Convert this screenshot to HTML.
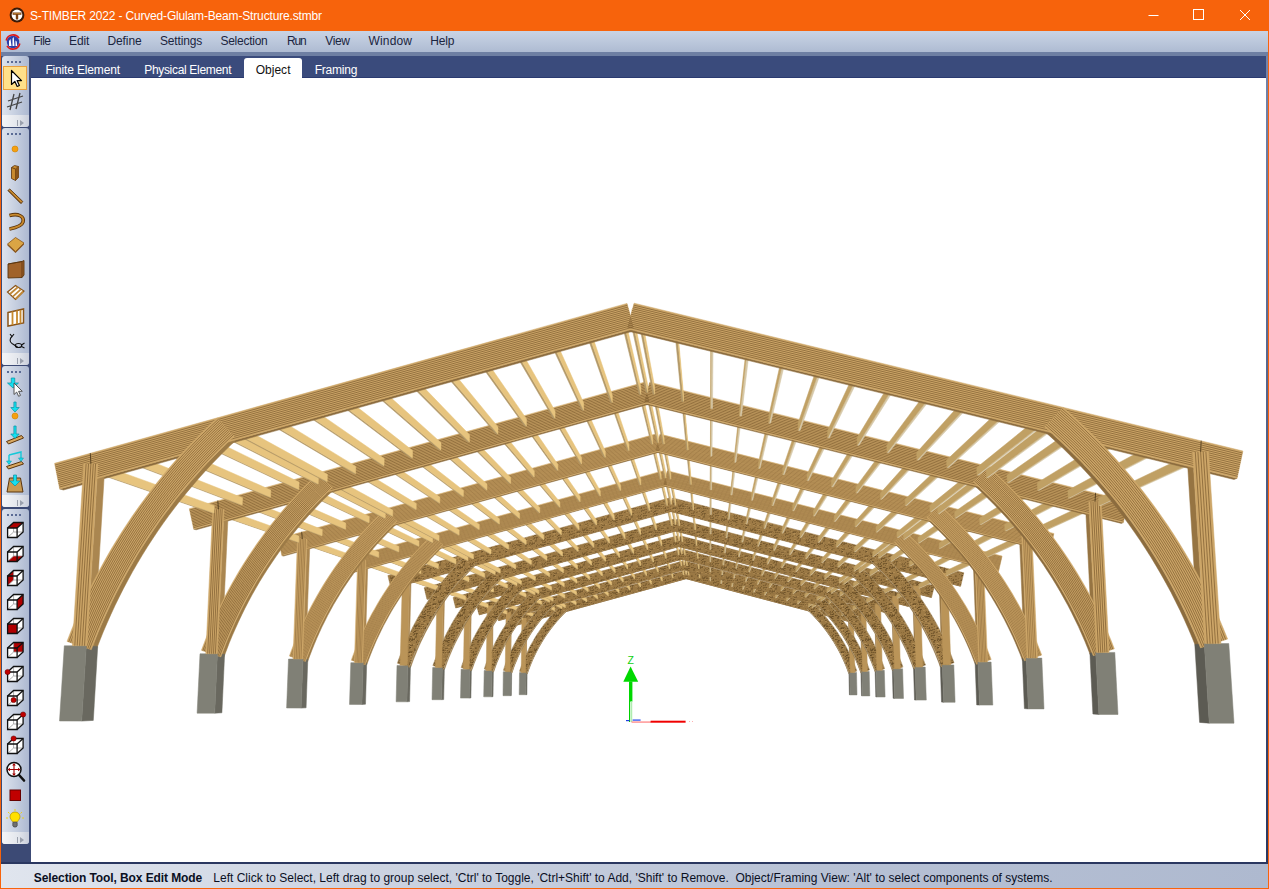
<!DOCTYPE html>
<html><head><meta charset="utf-8"><title>S-TIMBER 2022</title>
<style>
html,body{margin:0;padding:0;}
body{width:1269px;height:889px;overflow:hidden;background:#fff;font-family:"Liberation Sans","DejaVu Sans",sans-serif;position:relative;}
#scene{position:absolute;left:0;top:0;width:1269px;height:889px;}
</style></head><body>
<svg id="scene" width="1269" height="889" viewBox="0 0 1269 889" shape-rendering="geometricPrecision">
<defs><pattern id="spk" width="24" height="24" patternUnits="userSpaceOnUse"><rect x="10" y="4" width="2" height="1" fill="#3e2a0e" fill-opacity="0.38"/><rect x="17" y="3" width="1" height="1" fill="#3e2a0e" fill-opacity="0.67"/><rect x="6" y="1" width="1" height="1" fill="#2e1e08" fill-opacity="0.50"/><rect x="7" y="2" width="2" height="1" fill="#3e2a0e" fill-opacity="0.64"/><rect x="3" y="7" width="1" height="1" fill="#2e1e08" fill-opacity="0.37"/><rect x="7" y="1" width="1" height="1" fill="#5a4018" fill-opacity="0.50"/><rect x="17" y="3" width="1" height="1" fill="#4a3414" fill-opacity="0.39"/><rect x="18" y="20" width="1" height="1" fill="#5a4018" fill-opacity="0.38"/><rect x="22" y="2" width="1" height="1" fill="#4a3414" fill-opacity="0.52"/><rect x="17" y="13" width="1" height="1" fill="#2e1e08" fill-opacity="0.55"/><rect x="14" y="11" width="1" height="1" fill="#4a3414" fill-opacity="0.63"/><rect x="22" y="7" width="1" height="1" fill="#5a4018" fill-opacity="0.53"/><rect x="10" y="23" width="2" height="1" fill="#5a4018" fill-opacity="0.56"/><rect x="2" y="3" width="2" height="1" fill="#4a3414" fill-opacity="0.61"/><rect x="4" y="15" width="2" height="1" fill="#3e2a0e" fill-opacity="0.69"/><rect x="2" y="17" width="1" height="1" fill="#5a4018" fill-opacity="0.59"/><rect x="19" y="15" width="2" height="1" fill="#3e2a0e" fill-opacity="0.64"/><rect x="8" y="15" width="1" height="1" fill="#3e2a0e" fill-opacity="0.61"/><rect x="9" y="20" width="2" height="1" fill="#5a4018" fill-opacity="0.60"/><rect x="21" y="11" width="1" height="1" fill="#2e1e08" fill-opacity="0.47"/><rect x="19" y="3" width="2" height="1" fill="#3e2a0e" fill-opacity="0.43"/><rect x="9" y="4" width="1" height="1" fill="#2e1e08" fill-opacity="0.49"/><rect x="15" y="2" width="1" height="1" fill="#2e1e08" fill-opacity="0.49"/><rect x="8" y="4" width="2" height="1" fill="#5a4018" fill-opacity="0.60"/><rect x="11" y="21" width="2" height="1" fill="#4a3414" fill-opacity="0.40"/><rect x="5" y="4" width="1" height="1" fill="#4a3414" fill-opacity="0.35"/><rect x="18" y="5" width="1" height="1" fill="#5a4018" fill-opacity="0.35"/><rect x="13" y="17" width="1" height="1" fill="#5a4018" fill-opacity="0.68"/><rect x="22" y="16" width="1" height="1" fill="#2e1e08" fill-opacity="0.66"/><rect x="21" y="17" width="2" height="1" fill="#2e1e08" fill-opacity="0.49"/><rect x="3" y="15" width="2" height="1" fill="#3e2a0e" fill-opacity="0.42"/><rect x="6" y="14" width="1" height="1" fill="#3e2a0e" fill-opacity="0.47"/><rect x="1" y="3" width="1" height="1" fill="#4a3414" fill-opacity="0.54"/><rect x="11" y="19" width="1" height="1" fill="#3e2a0e" fill-opacity="0.66"/><rect x="19" y="12" width="1" height="1" fill="#5a4018" fill-opacity="0.68"/><rect x="19" y="11" width="2" height="1" fill="#3e2a0e" fill-opacity="0.39"/><rect x="15" y="14" width="2" height="1" fill="#2e1e08" fill-opacity="0.46"/><rect x="4" y="3" width="1" height="1" fill="#5a4018" fill-opacity="0.52"/><rect x="22" y="5" width="1" height="1" fill="#4a3414" fill-opacity="0.68"/><rect x="16" y="11" width="1" height="1" fill="#3e2a0e" fill-opacity="0.62"/><rect x="9" y="20" width="1" height="1" fill="#5a4018" fill-opacity="0.53"/><rect x="5" y="11" width="1" height="1" fill="#5a4018" fill-opacity="0.57"/><rect x="19" y="6" width="1" height="1" fill="#2e1e08" fill-opacity="0.61"/><rect x="7" y="6" width="2" height="1" fill="#5a4018" fill-opacity="0.61"/><rect x="0" y="8" width="2" height="1" fill="#5a4018" fill-opacity="0.42"/><rect x="19" y="11" width="2" height="1" fill="#5a4018" fill-opacity="0.68"/><rect x="11" y="2" width="1" height="1" fill="#3e2a0e" fill-opacity="0.43"/><rect x="6" y="10" width="1" height="1" fill="#2e1e08" fill-opacity="0.57"/><rect x="19" y="0" width="2" height="1" fill="#5a4018" fill-opacity="0.63"/><rect x="2" y="21" width="1" height="1" fill="#2e1e08" fill-opacity="0.62"/><rect x="6" y="15" width="1" height="1" fill="#2e1e08" fill-opacity="0.63"/><rect x="10" y="2" width="2" height="1" fill="#2e1e08" fill-opacity="0.49"/><rect x="2" y="23" width="1" height="1" fill="#4a3414" fill-opacity="0.70"/><rect x="0" y="4" width="2" height="1" fill="#4a3414" fill-opacity="0.56"/><rect x="19" y="15" width="1" height="1" fill="#4a3414" fill-opacity="0.54"/><rect x="4" y="0" width="1" height="1" fill="#3e2a0e" fill-opacity="0.53"/><rect x="4" y="13" width="1" height="1" fill="#4a3414" fill-opacity="0.36"/><rect x="6" y="9" width="1" height="1" fill="#5a4018" fill-opacity="0.44"/><rect x="13" y="4" width="1" height="1" fill="#5a4018" fill-opacity="0.66"/><rect x="21" y="18" width="2" height="1" fill="#4a3414" fill-opacity="0.54"/><rect x="16" y="16" width="1" height="1" fill="#2e1e08" fill-opacity="0.62"/><rect x="19" y="0" width="1" height="1" fill="#4a3414" fill-opacity="0.40"/><rect x="19" y="23" width="1" height="1" fill="#3e2a0e" fill-opacity="0.46"/><rect x="16" y="16" width="2" height="1" fill="#3e2a0e" fill-opacity="0.66"/><rect x="1" y="7" width="1" height="1" fill="#5a4018" fill-opacity="0.36"/><rect x="3" y="16" width="2" height="1" fill="#3e2a0e" fill-opacity="0.62"/><rect x="2" y="14" width="1" height="1" fill="#4a3414" fill-opacity="0.59"/><rect x="14" y="16" width="2" height="1" fill="#4a3414" fill-opacity="0.59"/><rect x="8" y="17" width="1" height="1" fill="#2e1e08" fill-opacity="0.40"/><rect x="3" y="12" width="2" height="1" fill="#5a4018" fill-opacity="0.38"/><rect x="7" y="13" width="1" height="1" fill="#4a3414" fill-opacity="0.58"/><rect x="3" y="4" width="1" height="1" fill="#4a3414" fill-opacity="0.44"/><rect x="4" y="14" width="1" height="1" fill="#3e2a0e" fill-opacity="0.49"/><rect x="15" y="5" width="1" height="1" fill="#4a3414" fill-opacity="0.60"/><rect x="16" y="12" width="1" height="1" fill="#2e1e08" fill-opacity="0.42"/><rect x="10" y="2" width="1" height="1" fill="#3e2a0e" fill-opacity="0.47"/><rect x="14" y="14" width="1" height="1" fill="#2e1e08" fill-opacity="0.47"/><rect x="19" y="9" width="1" height="1" fill="#3e2a0e" fill-opacity="0.69"/><rect x="7" y="3" width="1" height="1" fill="#5a4018" fill-opacity="0.45"/><rect x="5" y="8" width="1" height="1" fill="#2e1e08" fill-opacity="0.65"/><rect x="21" y="8" width="2" height="1" fill="#4a3414" fill-opacity="0.54"/><rect x="16" y="18" width="2" height="1" fill="#5a4018" fill-opacity="0.38"/><rect x="1" y="22" width="1" height="1" fill="#2e1e08" fill-opacity="0.66"/><rect x="8" y="0" width="1" height="1" fill="#5a4018" fill-opacity="0.38"/><rect x="7" y="2" width="1" height="1" fill="#3e2a0e" fill-opacity="0.51"/><rect x="10" y="17" width="2" height="1" fill="#5a4018" fill-opacity="0.57"/><rect x="1" y="16" width="1" height="1" fill="#3e2a0e" fill-opacity="0.69"/><rect x="8" y="1" width="1" height="1" fill="#4a3414" fill-opacity="0.68"/><rect x="20" y="9" width="1" height="1" fill="#5a4018" fill-opacity="0.51"/><rect x="21" y="5" width="1" height="1" fill="#5a4018" fill-opacity="0.63"/><rect x="8" y="1" width="1" height="1" fill="#3e2a0e" fill-opacity="0.61"/><rect x="17" y="6" width="2" height="1" fill="#4a3414" fill-opacity="0.68"/><rect x="3" y="21" width="2" height="1" fill="#2e1e08" fill-opacity="0.54"/><rect x="12" y="16" width="1" height="1" fill="#4a3414" fill-opacity="0.69"/><rect x="10" y="6" width="1" height="1" fill="#2e1e08" fill-opacity="0.70"/><rect x="1" y="4" width="1" height="1" fill="#3e2a0e" fill-opacity="0.57"/><rect x="8" y="13" width="1" height="1" fill="#3e2a0e" fill-opacity="0.38"/><rect x="12" y="16" width="1" height="1" fill="#4a3414" fill-opacity="0.59"/><rect x="1" y="14" width="1" height="1" fill="#4a3414" fill-opacity="0.44"/><rect x="0" y="8" width="1" height="1" fill="#5a4018" fill-opacity="0.69"/><rect x="17" y="10" width="1" height="1" fill="#3e2a0e" fill-opacity="0.69"/><rect x="9" y="6" width="1" height="1" fill="#4a3414" fill-opacity="0.35"/><rect x="12" y="2" width="2" height="1" fill="#5a4018" fill-opacity="0.53"/><rect x="6" y="7" width="1" height="1" fill="#3e2a0e" fill-opacity="0.44"/><rect x="2" y="4" width="2" height="1" fill="#3e2a0e" fill-opacity="0.49"/><rect x="9" y="9" width="1" height="1" fill="#3e2a0e" fill-opacity="0.55"/><rect x="16" y="4" width="2" height="1" fill="#5a4018" fill-opacity="0.60"/><rect x="15" y="4" width="1" height="1" fill="#4a3414" fill-opacity="0.37"/><rect x="22" y="16" width="2" height="1" fill="#4a3414" fill-opacity="0.67"/><rect x="16" y="18" width="1" height="1" fill="#4a3414" fill-opacity="0.38"/><rect x="1" y="4" width="1" height="1" fill="#3e2a0e" fill-opacity="0.48"/><rect x="14" y="17" width="1" height="1" fill="#3e2a0e" fill-opacity="0.57"/><rect x="21" y="7" width="2" height="1" fill="#5a4018" fill-opacity="0.35"/><rect x="2" y="23" width="1" height="1" fill="#3e2a0e" fill-opacity="0.61"/><rect x="15" y="8" width="1" height="1" fill="#5a4018" fill-opacity="0.43"/><rect x="6" y="7" width="2" height="1" fill="#2e1e08" fill-opacity="0.65"/><rect x="2" y="15" width="1" height="1" fill="#3e2a0e" fill-opacity="0.57"/><rect x="20" y="6" width="1" height="1" fill="#4a3414" fill-opacity="0.47"/><rect x="20" y="23" width="1" height="1" fill="#4a3414" fill-opacity="0.35"/><rect x="1" y="15" width="1" height="1" fill="#3e2a0e" fill-opacity="0.59"/><rect x="21" y="15" width="1" height="1" fill="#5a4018" fill-opacity="0.51"/><rect x="14" y="3" width="1" height="1" fill="#5a4018" fill-opacity="0.69"/><rect x="15" y="0" width="1" height="1" fill="#2e1e08" fill-opacity="0.38"/><rect x="16" y="14" width="1" height="1" fill="#2e1e08" fill-opacity="0.42"/><rect x="6" y="2" width="1" height="1" fill="#4a3414" fill-opacity="0.61"/><rect x="8" y="11" width="1" height="1" fill="#5a4018" fill-opacity="0.66"/><rect x="22" y="11" width="1" height="1" fill="#2e1e08" fill-opacity="0.66"/><rect x="15" y="12" width="1" height="1" fill="#4a3414" fill-opacity="0.35"/><rect x="15" y="21" width="2" height="1" fill="#2e1e08" fill-opacity="0.46"/><rect x="4" y="13" width="1" height="1" fill="#2e1e08" fill-opacity="0.46"/><rect x="10" y="0" width="1" height="1" fill="#5a4018" fill-opacity="0.64"/><rect x="3" y="6" width="1" height="1" fill="#5a4018" fill-opacity="0.44"/><rect x="2" y="12" width="2" height="1" fill="#3e2a0e" fill-opacity="0.48"/><rect x="13" y="8" width="1" height="1" fill="#5a4018" fill-opacity="0.39"/><rect x="21" y="9" width="1" height="1" fill="#4a3414" fill-opacity="0.69"/><rect x="13" y="16" width="1" height="1" fill="#4a3414" fill-opacity="0.62"/><rect x="13" y="0" width="2" height="1" fill="#4a3414" fill-opacity="0.60"/><rect x="1" y="23" width="2" height="1" fill="#2e1e08" fill-opacity="0.57"/><rect x="4" y="20" width="1" height="1" fill="#2e1e08" fill-opacity="0.37"/><rect x="17" y="4" width="1" height="1" fill="#2e1e08" fill-opacity="0.50"/><rect x="9" y="9" width="1" height="1" fill="#5a4018" fill-opacity="0.49"/><rect x="7" y="9" width="2" height="1" fill="#2e1e08" fill-opacity="0.39"/><rect x="20" y="5" width="1" height="1" fill="#4a3414" fill-opacity="0.53"/><rect x="15" y="17" width="1" height="1" fill="#2e1e08" fill-opacity="0.67"/><rect x="14" y="13" width="1" height="1" fill="#4a3414" fill-opacity="0.44"/><rect x="5" y="10" width="1" height="1" fill="#5a4018" fill-opacity="0.43"/><rect x="8" y="18" width="1" height="1" fill="#3e2a0e" fill-opacity="0.61"/><rect x="13" y="12" width="2" height="1" fill="#4a3414" fill-opacity="0.48"/><rect x="10" y="1" width="2" height="1" fill="#5a4018" fill-opacity="0.55"/><rect x="11" y="4" width="1" height="1" fill="#3e2a0e" fill-opacity="0.44"/><rect x="7" y="12" width="2" height="1" fill="#2e1e08" fill-opacity="0.50"/><rect x="9" y="0" width="1" height="1" fill="#3e2a0e" fill-opacity="0.50"/><rect x="15" y="18" width="2" height="1" fill="#3e2a0e" fill-opacity="0.38"/><rect x="16" y="14" width="2" height="1" fill="#4a3414" fill-opacity="0.62"/><rect x="7" y="4" width="1" height="1" fill="#3e2a0e" fill-opacity="0.68"/><rect x="23" y="22" width="2" height="1" fill="#3e2a0e" fill-opacity="0.54"/><rect x="1" y="0" width="1" height="1" fill="#4a3414" fill-opacity="0.55"/><rect x="1" y="20" width="1" height="1" fill="#4a3414" fill-opacity="0.57"/><rect x="16" y="20" width="2" height="1" fill="#3e2a0e" fill-opacity="0.38"/><rect x="9" y="16" width="1" height="1" fill="#2e1e08" fill-opacity="0.44"/><rect x="19" y="0" width="1" height="1" fill="#5a4018" fill-opacity="0.70"/><rect x="8" y="10" width="1" height="1" fill="#2e1e08" fill-opacity="0.53"/><rect x="17" y="7" width="1" height="1" fill="#2e1e08" fill-opacity="0.60"/><rect x="9" y="1" width="1" height="1" fill="#4a3414" fill-opacity="0.52"/><rect x="21" y="20" width="2" height="1" fill="#3e2a0e" fill-opacity="0.44"/><rect x="21" y="13" width="1" height="1" fill="#4a3414" fill-opacity="0.52"/><rect x="22" y="10" width="2" height="1" fill="#5a4018" fill-opacity="0.59"/><rect x="6" y="0" width="1" height="1" fill="#3e2a0e" fill-opacity="0.42"/><rect x="6" y="9" width="1" height="1" fill="#4a3414" fill-opacity="0.51"/><rect x="8" y="9" width="1" height="1" fill="#2e1e08" fill-opacity="0.56"/><rect x="7" y="15" width="2" height="1" fill="#d8b070" fill-opacity="0.45"/><rect x="13" y="21" width="2" height="1" fill="#d8b070" fill-opacity="0.45"/><rect x="1" y="19" width="2" height="1" fill="#d8b070" fill-opacity="0.45"/><rect x="4" y="12" width="2" height="1" fill="#d8b070" fill-opacity="0.45"/><rect x="1" y="6" width="2" height="1" fill="#d8b070" fill-opacity="0.45"/><rect x="0" y="19" width="2" height="1" fill="#d8b070" fill-opacity="0.45"/><rect x="4" y="13" width="2" height="1" fill="#d8b070" fill-opacity="0.45"/><rect x="1" y="22" width="2" height="1" fill="#d8b070" fill-opacity="0.45"/><rect x="1" y="5" width="2" height="1" fill="#d8b070" fill-opacity="0.45"/><rect x="12" y="14" width="2" height="1" fill="#d8b070" fill-opacity="0.45"/><rect x="22" y="10" width="2" height="1" fill="#d8b070" fill-opacity="0.45"/><rect x="23" y="3" width="2" height="1" fill="#d8b070" fill-opacity="0.45"/><rect x="2" y="5" width="2" height="1" fill="#d8b070" fill-opacity="0.45"/><rect x="10" y="6" width="2" height="1" fill="#d8b070" fill-opacity="0.45"/><rect x="5" y="20" width="2" height="1" fill="#d8b070" fill-opacity="0.45"/><rect x="16" y="23" width="2" height="1" fill="#d8b070" fill-opacity="0.45"/><rect x="14" y="1" width="2" height="1" fill="#d8b070" fill-opacity="0.45"/><rect x="9" y="21" width="2" height="1" fill="#d8b070" fill-opacity="0.45"/><rect x="23" y="12" width="2" height="1" fill="#d8b070" fill-opacity="0.45"/><rect x="11" y="10" width="2" height="1" fill="#d8b070" fill-opacity="0.45"/><rect x="14" y="5" width="2" height="1" fill="#d8b070" fill-opacity="0.45"/><rect x="3" y="0" width="2" height="1" fill="#d8b070" fill-opacity="0.45"/><rect x="2" y="8" width="2" height="1" fill="#d8b070" fill-opacity="0.45"/><rect x="2" y="11" width="2" height="1" fill="#d8b070" fill-opacity="0.45"/><rect x="13" y="3" width="2" height="1" fill="#d8b070" fill-opacity="0.45"/></pattern></defs>
<polygon points="687.1,578.3 514.9,625.5 515.2,625.6 687.1,578.4" fill="#8c6c3e" stroke="#8c6c3e" stroke-width="0.5"/>
<polygon points="685.0,578.3 861.3,624.7 861.1,624.8 685.0,578.4" fill="#8c6c3e" stroke="#8c6c3e" stroke-width="0.5"/>
<polygon points="527.0,673.8 527.9,671.1 528.9,668.4 529.9,665.7 530.9,663.1 532.1,660.5 533.2,657.9 534.4,655.3 535.7,652.8 537.0,650.3 538.3,647.8 539.7,645.3 541.1,642.8 542.6,640.4 544.1,638.0 545.7,635.7 547.3,633.3 548.9,631.0 550.6,628.8 552.3,626.5 554.1,624.3 555.9,622.2 557.7,620.0 559.6,617.9 561.5,615.9 563.4,613.8 565.4,611.8 567.4,609.9 567.8,610.1 565.8,612.0 563.8,614.0 561.8,616.0 559.9,618.1 558.1,620.2 556.2,622.3 554.4,624.5 552.7,626.7 550.9,628.9 549.3,631.2 547.6,633.5 546.0,635.8 544.5,638.1 543.0,640.5 541.5,642.9 540.1,645.4 538.7,647.8 537.4,650.3 536.1,652.8 534.8,655.4 533.6,658.0 532.5,660.5 531.4,663.1 530.3,665.8 529.3,668.4 528.3,671.1 527.4,673.8" fill="#9c7a46" stroke="#9c7a46" stroke-width="0.5"/>
<polygon points="525.6,672.6 526.3,617.9 526.9,618.1 526.2,672.6" fill="#aa8650" stroke="#aa8650" stroke-width="0.5"/>
<polygon points="849.1,673.6 848.1,670.9 847.1,668.2 846.0,665.5 844.9,662.8 843.7,660.2 842.5,657.6 841.3,655.0 840.0,652.4 838.6,649.8 837.2,647.3 835.7,644.8 834.3,642.3 832.7,639.9 831.1,637.5 829.5,635.1 827.9,632.8 826.2,630.5 824.4,628.2 822.6,625.9 820.8,623.7 818.9,621.5 817.0,619.4 815.1,617.3 813.1,615.2 811.1,613.1 809.1,611.1 807.0,609.2 806.8,609.4 808.8,611.3 810.9,613.3 812.9,615.3 814.9,617.4 816.8,619.5 818.7,621.7 820.5,623.8 822.4,626.1 824.1,628.3 825.9,630.6 827.6,632.9 829.2,635.2 830.9,637.6 832.4,640.0 834.0,642.4 835.4,644.9 836.9,647.4 838.3,649.9 839.6,652.5 840.9,655.0 842.2,657.6 843.4,660.2 844.6,662.9 845.7,665.5 846.8,668.2 847.8,670.9 848.8,673.6" fill="#8c6c3e" stroke="#8c6c3e" stroke-width="0.5"/>
<polygon points="849.0,616.9 850.3,672.4 849.8,672.4 848.5,617.1" fill="#967442" stroke="#967442" stroke-width="0.5"/>
<polygon points="687.1,578.3 514.9,625.5 512.9,617.6 684.9,570.5" fill="#9a7844" stroke="#9a7844" stroke-width="0.5"/>
<polygon points="687.1,578.3 514.9,625.5 512.9,617.6 684.9,570.5" fill="url(#spk)" fill-opacity="0.50"/>
<polygon points="685.0,578.3 861.3,624.7 863.3,616.7 687.1,570.4" fill="#9a7844" stroke="#9a7844" stroke-width="0.5"/>
<polygon points="685.0,578.3 861.3,624.7 863.3,616.7 687.1,570.4" fill="url(#spk)" fill-opacity="0.50"/>
<polygon points="525.8,694.7 526.1,672.6 527.1,672.7 526.9,694.7" fill="#69685f" stroke="#69685f" stroke-width="0.5"/>
<polygon points="849.7,672.4 850.2,694.9 849.4,694.8 848.9,672.5" fill="#5c5b53" stroke="#5c5b53" stroke-width="0.5"/>
<polygon points="519.5,671.3 520.5,668.5 521.5,665.7 522.6,662.9 523.7,660.1 524.9,657.3 526.1,654.6 527.4,651.9 528.7,649.2 530.0,646.6 531.4,644.0 532.9,641.4 534.4,638.8 535.9,636.3 537.5,633.8 539.2,631.3 540.9,628.8 542.6,626.4 544.4,624.0 546.2,621.7 548.0,619.4 549.9,617.1 551.8,614.8 553.8,612.6 555.8,610.5 557.9,608.3 560.0,606.2 562.1,604.2 567.4,609.9 565.4,611.8 563.4,613.8 561.5,615.9 559.6,617.9 557.7,620.0 555.9,622.2 554.1,624.3 552.3,626.5 550.6,628.8 548.9,631.0 547.3,633.3 545.7,635.7 544.1,638.0 542.6,640.4 541.1,642.8 539.7,645.3 538.3,647.8 537.0,650.3 535.7,652.8 534.4,655.3 533.2,657.9 532.1,660.5 530.9,663.1 529.9,665.7 528.9,668.4 527.9,671.1 527.0,673.8" fill="#9a7844" stroke="#9a7844" stroke-width="0.5"/>
<polygon points="519.5,671.3 520.5,668.5 521.5,665.7 522.6,662.9 523.7,660.1 524.9,657.3 526.1,654.6 527.4,651.9 528.7,649.2 530.0,646.6 531.4,644.0 532.9,641.4 534.4,638.8 535.9,636.3 537.5,633.8 539.2,631.3 540.9,628.8 542.6,626.4 544.4,624.0 546.2,621.7 548.0,619.4 549.9,617.1 551.8,614.8 553.8,612.6 555.8,610.5 557.9,608.3 560.0,606.2 562.1,604.2 567.4,609.9 565.4,611.8 563.4,613.8 561.5,615.9 559.6,617.9 557.7,620.0 555.9,622.2 554.1,624.3 552.3,626.5 550.6,628.8 548.9,631.0 547.3,633.3 545.7,635.7 544.1,638.0 542.6,640.4 541.1,642.8 539.7,645.3 538.3,647.8 537.0,650.3 535.7,652.8 534.4,655.3 533.2,657.9 532.1,660.5 530.9,663.1 529.9,665.7 528.9,668.4 527.9,671.1 527.0,673.8" fill="url(#spk)" fill-opacity="0.65"/>
<polygon points="856.8,671.1 855.8,668.2 854.7,665.4 853.5,662.5 852.4,659.7 851.1,657.0 849.8,654.2 848.5,651.5 847.1,648.8 845.7,646.1 844.2,643.4 842.7,640.8 841.1,638.2 839.5,635.7 837.8,633.1 836.1,630.6 834.4,628.2 832.6,625.7 830.8,623.3 828.9,621.0 827.0,618.6 825.0,616.3 823.0,614.1 821.0,611.9 818.9,609.7 816.8,607.5 814.6,605.4 812.4,603.4 807.0,609.2 809.1,611.1 811.1,613.1 813.1,615.2 815.1,617.3 817.0,619.4 818.9,621.5 820.8,623.7 822.6,625.9 824.4,628.2 826.2,630.5 827.9,632.8 829.5,635.1 831.1,637.5 832.7,639.9 834.3,642.3 835.7,644.8 837.2,647.3 838.6,649.8 840.0,652.4 841.3,655.0 842.5,657.6 843.7,660.2 844.9,662.8 846.0,665.5 847.1,668.2 848.1,670.9 849.1,673.6" fill="#9a7844" stroke="#9a7844" stroke-width="0.5"/>
<polygon points="856.8,671.1 855.8,668.2 854.7,665.4 853.5,662.5 852.4,659.7 851.1,657.0 849.8,654.2 848.5,651.5 847.1,648.8 845.7,646.1 844.2,643.4 842.7,640.8 841.1,638.2 839.5,635.7 837.8,633.1 836.1,630.6 834.4,628.2 832.6,625.7 830.8,623.3 828.9,621.0 827.0,618.6 825.0,616.3 823.0,614.1 821.0,611.9 818.9,609.7 816.8,607.5 814.6,605.4 812.4,603.4 807.0,609.2 809.1,611.1 811.1,613.1 813.1,615.2 815.1,617.3 817.0,619.4 818.9,621.5 820.8,623.7 822.6,625.9 824.4,628.2 826.2,630.5 827.9,632.8 829.5,635.1 831.1,637.5 832.7,639.9 834.3,642.3 835.7,644.8 837.2,647.3 838.6,649.8 840.0,652.4 841.3,655.0 842.5,657.6 843.7,660.2 844.9,662.8 846.0,665.5 847.1,668.2 848.1,670.9 849.1,673.6" fill="url(#spk)" fill-opacity="0.65"/>
<polyline points="527.0,673.8 527.9,671.1 528.9,668.4 529.9,665.7 530.9,663.1 532.1,660.5 533.2,657.9 534.4,655.3 535.7,652.8 537.0,650.3 538.3,647.8 539.7,645.3 541.1,642.8 542.6,640.4 544.1,638.0 545.7,635.7 547.3,633.3 548.9,631.0 550.6,628.8 552.3,626.5 554.1,624.3 555.9,622.2 557.7,620.0 559.6,617.9 561.5,615.9 563.4,613.8 565.4,611.8 567.4,609.9" fill="none" stroke="#cfcabd" stroke-width="0.50" stroke-opacity="0.70"/>
<polyline points="519.5,671.3 520.5,668.5 521.5,665.7 522.6,662.9 523.7,660.1 524.9,657.3 526.1,654.6 527.4,651.9 528.7,649.2 530.0,646.6 531.4,644.0 532.9,641.4 534.4,638.8 535.9,636.3 537.5,633.8 539.2,631.3 540.9,628.8 542.6,626.4 544.4,624.0 546.2,621.7 548.0,619.4 549.9,617.1 551.8,614.8 553.8,612.6 555.8,610.5 557.9,608.3 560.0,606.2 562.1,604.2" fill="none" stroke="#cfcabd" stroke-width="0.40" stroke-opacity="0.60"/>
<polyline points="849.1,673.6 848.1,670.9 847.1,668.2 846.0,665.5 844.9,662.8 843.7,660.2 842.5,657.6 841.3,655.0 840.0,652.4 838.6,649.8 837.2,647.3 835.7,644.8 834.3,642.3 832.7,639.9 831.1,637.5 829.5,635.1 827.9,632.8 826.2,630.5 824.4,628.2 822.6,625.9 820.8,623.7 818.9,621.5 817.0,619.4 815.1,617.3 813.1,615.2 811.1,613.1 809.1,611.1 807.0,609.2" fill="none" stroke="#cfcabd" stroke-width="0.50" stroke-opacity="0.70"/>
<polyline points="856.8,671.1 855.8,668.2 854.7,665.4 853.5,662.5 852.4,659.7 851.1,657.0 849.8,654.2 848.5,651.5 847.1,648.8 845.7,646.1 844.2,643.4 842.7,640.8 841.1,638.2 839.5,635.7 837.8,633.1 836.1,630.6 834.4,628.2 832.6,625.7 830.8,623.3 828.9,621.0 827.0,618.6 825.0,616.3 823.0,614.1 821.0,611.9 818.9,609.7 816.8,607.5 814.6,605.4 812.4,603.4" fill="none" stroke="#cfcabd" stroke-width="0.40" stroke-opacity="0.60"/>
<polygon points="519.2,694.7 525.8,694.7 526.1,672.6 519.5,672.6" fill="#808076" stroke="#808076" stroke-width="0.5"/>
<polygon points="850.2,694.9 857.0,694.9 856.5,672.4 849.7,672.4" fill="#808076" stroke="#808076" stroke-width="0.5"/>
<polygon points="521.2,672.6 525.6,672.6 526.3,617.9 521.9,617.9" fill="#ba9458" stroke="#ba9458" stroke-width="0.5"/>
<polyline points="524.1,617.9 523.7,614.6" fill="none" stroke="#2a1c08" stroke-width="0.50" stroke-opacity="0.80"/>
<polygon points="850.3,672.4 854.9,672.4 853.5,616.9 849.0,616.9" fill="#ba9458" stroke="#ba9458" stroke-width="0.5"/>
<polyline points="851.3,616.9 851.6,613.5" fill="none" stroke="#2a1c08" stroke-width="0.50" stroke-opacity="0.80"/>
<polygon points="506.3,614.0 507.0,614.0 522.5,619.3 521.8,619.3" fill="#b29868" stroke="#b29868" stroke-width="0.5"/>
<polygon points="507.0,614.0 522.5,619.3 522.5,616.5 507.1,611.0" fill="#e7c47e" stroke="#e7c47e" stroke-width="0.5"/>
<polygon points="517.9,610.8 518.6,610.8 533.2,616.4 532.5,616.4" fill="#b29868" stroke="#b29868" stroke-width="0.5"/>
<polygon points="518.6,610.8 533.2,616.4 533.2,613.6 518.7,607.8" fill="#e7c47e" stroke="#e7c47e" stroke-width="0.5"/>
<polygon points="529.5,607.6 530.3,607.6 543.9,613.4 543.2,613.4" fill="#b29868" stroke="#b29868" stroke-width="0.5"/>
<polygon points="530.3,607.6 543.9,613.4 543.9,610.7 530.3,604.6" fill="#e7c47e" stroke="#e7c47e" stroke-width="0.5"/>
<polygon points="541.2,604.5 541.9,604.4 554.6,610.5 554.0,610.5" fill="#b29868" stroke="#b29868" stroke-width="0.5"/>
<polygon points="541.9,604.4 554.6,610.5 554.7,607.7 541.9,601.4" fill="#e7c47e" stroke="#e7c47e" stroke-width="0.5"/>
<polygon points="549.1,602.3 549.8,602.3 562.0,608.5 561.3,608.5" fill="#b29868" stroke="#b29868" stroke-width="0.5"/>
<polygon points="549.8,602.3 562.0,608.5 562.0,605.7 549.9,599.3" fill="#e7c47e" stroke="#e7c47e" stroke-width="0.5"/>
<polygon points="552.8,601.3 553.5,601.3 565.4,607.5 564.7,607.6" fill="#b29868" stroke="#b29868" stroke-width="0.5"/>
<polygon points="553.5,601.3 565.4,607.5 565.4,604.8 553.5,598.3" fill="#e7c47e" stroke="#e7c47e" stroke-width="0.5"/>
<polygon points="864.7,612.8 865.4,612.8 853.4,618.3 852.7,618.3" fill="#d6c8a8" stroke="#d6c8a8" stroke-width="0.5"/>
<polygon points="864.7,612.8 852.7,618.3 852.6,615.5 864.6,609.7" fill="#c0a064" stroke="#c0a064" stroke-width="0.5"/>
<polygon points="564.4,598.1 565.1,598.1 576.1,604.6 575.5,604.6" fill="#b29868" stroke="#b29868" stroke-width="0.5"/>
<polygon points="565.1,598.1 576.1,604.6 576.1,601.8 565.1,595.1" fill="#e7c47e" stroke="#e7c47e" stroke-width="0.5"/>
<polygon points="852.6,609.6 853.4,609.6 842.3,615.4 841.6,615.4" fill="#d6c8a8" stroke="#d6c8a8" stroke-width="0.5"/>
<polygon points="852.6,609.6 841.6,615.4 841.5,612.5 852.6,606.6" fill="#c0a064" stroke="#c0a064" stroke-width="0.5"/>
<polygon points="576.0,594.9 576.7,594.9 586.9,601.7 586.2,601.7" fill="#b29868" stroke="#b29868" stroke-width="0.5"/>
<polygon points="576.7,594.9 586.9,601.7 586.9,598.9 576.8,591.9" fill="#e7c47e" stroke="#e7c47e" stroke-width="0.5"/>
<polygon points="840.6,606.5 841.4,606.5 831.2,612.5 830.5,612.5" fill="#d6c8a8" stroke="#d6c8a8" stroke-width="0.5"/>
<polygon points="840.6,606.5 830.5,612.5 830.5,609.6 840.6,603.4" fill="#c0a064" stroke="#c0a064" stroke-width="0.5"/>
<polygon points="587.7,591.7 588.4,591.7 597.6,598.7 596.9,598.7" fill="#b29868" stroke="#b29868" stroke-width="0.5"/>
<polygon points="588.4,591.7 597.6,598.7 597.6,595.9 588.4,588.7" fill="#e7c47e" stroke="#e7c47e" stroke-width="0.5"/>
<polygon points="828.7,603.3 829.4,603.3 820.1,609.6 819.5,609.6" fill="#d6c8a8" stroke="#d6c8a8" stroke-width="0.5"/>
<polygon points="828.7,603.3 819.5,609.6 819.4,606.7 828.6,600.3" fill="#c0a064" stroke="#c0a064" stroke-width="0.5"/>
<polygon points="820.5,601.2 821.2,601.2 812.6,607.6 811.9,607.6" fill="#d6c8a8" stroke="#d6c8a8" stroke-width="0.5"/>
<polygon points="820.5,601.2 811.9,607.6 811.9,604.8 820.4,598.2" fill="#c0a064" stroke="#c0a064" stroke-width="0.5"/>
<polygon points="599.3,588.5 600.0,588.5 608.4,595.8 607.7,595.8" fill="#b29868" stroke="#b29868" stroke-width="0.5"/>
<polygon points="600.0,588.5 608.4,595.8 608.4,593.0 600.0,585.5" fill="#e7c47e" stroke="#e7c47e" stroke-width="0.5"/>
<polygon points="816.7,600.2 817.4,600.2 809.1,606.6 808.4,606.7" fill="#d6c8a8" stroke="#d6c8a8" stroke-width="0.5"/>
<polygon points="816.7,600.2 808.4,606.7 808.4,603.8 816.6,597.2" fill="#c0a064" stroke="#c0a064" stroke-width="0.5"/>
<polygon points="610.9,585.3 611.7,585.3 619.1,592.8 618.5,592.8" fill="#b29868" stroke="#b29868" stroke-width="0.5"/>
<polygon points="611.7,585.3 619.1,592.8 619.1,590.0 611.7,582.3" fill="#e7c47e" stroke="#e7c47e" stroke-width="0.5"/>
<polygon points="804.7,597.1 805.5,597.1 798.1,603.8 797.4,603.8" fill="#d6c8a8" stroke="#d6c8a8" stroke-width="0.5"/>
<polygon points="804.7,597.1 797.4,603.8 797.4,600.9 804.7,594.0" fill="#c0a064" stroke="#c0a064" stroke-width="0.5"/>
<polygon points="622.6,582.1 623.3,582.1 629.9,589.9 629.2,589.9" fill="#b29868" stroke="#b29868" stroke-width="0.5"/>
<polygon points="623.3,582.1 629.9,589.9 629.9,587.1 623.3,579.1" fill="#e7c47e" stroke="#e7c47e" stroke-width="0.5"/>
<polygon points="792.8,594.0 793.6,593.9 787.1,600.9 786.4,600.9" fill="#d6c8a8" stroke="#d6c8a8" stroke-width="0.5"/>
<polygon points="792.8,594.0 786.4,600.9 786.4,598.1 792.8,590.9" fill="#c0a064" stroke="#c0a064" stroke-width="0.5"/>
<polygon points="634.2,578.9 635.0,578.9 640.7,586.9 640.0,586.9" fill="#b29868" stroke="#b29868" stroke-width="0.5"/>
<polygon points="635.0,578.9 640.7,586.9 640.7,584.1 635.0,575.9" fill="#e7c47e" stroke="#e7c47e" stroke-width="0.5"/>
<polygon points="780.9,590.8 781.7,590.8 776.1,598.0 775.4,598.0" fill="#d6c8a8" stroke="#d6c8a8" stroke-width="0.5"/>
<polygon points="780.9,590.8 775.4,598.0 775.4,595.2 780.9,587.8" fill="#c0a064" stroke="#c0a064" stroke-width="0.5"/>
<polygon points="645.9,575.7 646.6,575.7 651.4,584.0 650.8,584.0" fill="#b29868" stroke="#b29868" stroke-width="0.5"/>
<polygon points="646.6,575.7 651.4,584.0 651.4,581.2 646.6,572.7" fill="#e7c47e" stroke="#e7c47e" stroke-width="0.5"/>
<polygon points="769.0,587.7 769.8,587.7 765.2,595.1 764.5,595.1" fill="#d6c8a8" stroke="#d6c8a8" stroke-width="0.5"/>
<polygon points="769.0,587.7 764.5,595.1 764.4,592.3 769.0,584.7" fill="#c0a064" stroke="#c0a064" stroke-width="0.5"/>
<polygon points="657.6,572.5 658.3,572.5 662.2,581.0 661.5,581.0" fill="#b29868" stroke="#b29868" stroke-width="0.5"/>
<polygon points="658.3,572.5 662.2,581.0 662.2,578.2 658.3,569.5" fill="#e7c47e" stroke="#e7c47e" stroke-width="0.5"/>
<polygon points="757.2,584.6 757.9,584.6 754.2,592.2 753.5,592.2" fill="#d6c8a8" stroke="#d6c8a8" stroke-width="0.5"/>
<polygon points="757.2,584.6 753.5,592.2 753.5,589.4 757.2,581.6" fill="#c0a064" stroke="#c0a064" stroke-width="0.5"/>
<polygon points="669.2,569.3 670.0,569.3 673.0,578.0 672.3,578.0" fill="#b29868" stroke="#b29868" stroke-width="0.5"/>
<polygon points="670.0,569.3 673.0,578.0 673.0,575.3 670.0,566.3" fill="#e7c47e" stroke="#e7c47e" stroke-width="0.5"/>
<polygon points="745.4,581.5 746.1,581.5 743.3,589.3 742.6,589.3" fill="#d6c8a8" stroke="#d6c8a8" stroke-width="0.5"/>
<polygon points="745.4,581.5 742.6,589.3 742.6,586.6 745.3,578.5" fill="#c0a064" stroke="#c0a064" stroke-width="0.5"/>
<polygon points="680.9,566.1 681.6,566.1 683.8,575.1 683.1,575.1" fill="#b29868" stroke="#b29868" stroke-width="0.5"/>
<polygon points="681.6,566.1 683.8,575.1 683.7,572.3 681.6,563.1" fill="#e7c47e" stroke="#e7c47e" stroke-width="0.5"/>
<polygon points="733.6,578.4 734.3,578.4 732.4,586.5 731.7,586.5" fill="#d6c8a8" stroke="#d6c8a8" stroke-width="0.5"/>
<polygon points="733.6,578.4 731.7,586.5 731.7,583.7 733.5,575.4" fill="#c0a064" stroke="#c0a064" stroke-width="0.5"/>
<polygon points="683.7,565.3 684.4,565.3 686.4,574.4 685.7,574.4" fill="#b29868" stroke="#b29868" stroke-width="0.5"/>
<polygon points="684.4,565.3 686.4,574.4 686.3,571.6 684.4,562.3" fill="#e7c47e" stroke="#e7c47e" stroke-width="0.5"/>
<polygon points="686.5,566.1 687.2,566.1 688.9,575.1 688.3,575.1" fill="#b29868" stroke="#b29868" stroke-width="0.5"/>
<polygon points="687.2,566.1 688.9,575.1 688.9,572.3 687.2,563.1" fill="#e7c47e" stroke="#e7c47e" stroke-width="0.5"/>
<polygon points="721.8,575.3 722.5,575.3 721.5,583.6 720.8,583.6" fill="#d6c8a8" stroke="#d6c8a8" stroke-width="0.5"/>
<polygon points="721.8,575.3 720.8,583.6 720.8,580.8 721.7,572.3" fill="#c0a064" stroke="#c0a064" stroke-width="0.5"/>
<polygon points="698.2,569.2 699.0,569.1 699.8,577.9 699.1,577.9" fill="#b29868" stroke="#b29868" stroke-width="0.5"/>
<polygon points="699.0,569.1 699.8,577.9 699.8,575.1 699.0,566.1" fill="#e7c47e" stroke="#e7c47e" stroke-width="0.5"/>
<polygon points="710.0,572.2 710.7,572.2 710.6,580.8 710.0,580.8" fill="#d6c8a8" stroke="#d6c8a8" stroke-width="0.5"/>
<polygon points="710.0,572.2 710.0,580.8 709.9,578.0 710.0,569.2" fill="#c0a064" stroke="#c0a064" stroke-width="0.5"/>
<polygon points="685.2,569.3 498.5,620.5 498.9,620.6 685.2,569.5" fill="#8c6c3e" stroke="#8c6c3e" stroke-width="0.5"/>
<polygon points="682.9,569.3 874.4,619.6 874.1,619.7 683.0,569.5" fill="#8c6c3e" stroke="#8c6c3e" stroke-width="0.5"/>
<polygon points="511.5,672.9 512.5,670.0 513.5,667.1 514.6,664.2 515.8,661.3 517.0,658.5 518.3,655.7 519.6,652.9 520.9,650.1 522.3,647.4 523.8,644.7 525.3,642.0 526.8,639.4 528.4,636.8 530.1,634.2 531.8,631.6 533.5,629.1 535.3,626.6 537.1,624.1 539.0,621.7 540.9,619.3 542.9,617.0 544.9,614.6 546.9,612.4 549.0,610.1 551.1,607.9 553.2,605.8 555.4,603.6 555.8,603.8 553.6,606.0 551.5,608.1 549.4,610.3 547.3,612.5 545.3,614.8 543.3,617.1 541.3,619.5 539.4,621.9 537.6,624.3 535.7,626.7 534.0,629.2 532.2,631.7 530.5,634.3 528.9,636.9 527.3,639.5 525.8,642.1 524.3,644.8 522.8,647.5 521.4,650.2 520.0,653.0 518.7,655.8 517.5,658.6 516.3,661.4 515.1,664.2 514.0,667.1 513.0,670.0 512.0,672.9" fill="#9c7a46" stroke="#9c7a46" stroke-width="0.5"/>
<polygon points="510.0,671.6 510.8,612.3 511.5,612.6 510.7,671.7" fill="#aa8650" stroke="#aa8650" stroke-width="0.5"/>
<polygon points="861.2,672.7 860.1,669.8 859.0,666.8 857.8,663.9 856.6,661.0 855.3,658.1 854.0,655.3 852.6,652.5 851.2,649.7 849.7,646.9 848.2,644.2 846.6,641.5 845.0,638.8 843.3,636.1 841.6,633.5 839.8,630.9 838.0,628.4 836.2,625.9 834.3,623.4 832.3,621.0 830.4,618.5 828.3,616.2 826.3,613.8 824.2,611.6 822.0,609.3 819.8,607.1 817.6,604.9 815.3,602.8 815.1,603.0 817.3,605.1 819.5,607.3 821.7,609.5 823.9,611.7 826.0,614.0 828.0,616.3 830.0,618.7 832.0,621.1 834.0,623.5 835.8,626.0 837.7,628.5 839.5,631.1 841.3,633.6 843.0,636.3 844.6,638.9 846.3,641.6 847.8,644.3 849.3,647.0 850.8,649.8 852.2,652.5 853.6,655.4 854.9,658.2 856.2,661.1 857.4,663.9 858.6,666.9 859.7,669.8 860.8,672.7" fill="#8c6c3e" stroke="#8c6c3e" stroke-width="0.5"/>
<polygon points="861.0,611.1 862.5,671.4 861.9,671.4 860.4,611.4" fill="#967442" stroke="#967442" stroke-width="0.5"/>
<polygon points="685.2,569.3 498.5,620.5 496.4,612.1 682.9,560.9" fill="#9a7844" stroke="#9a7844" stroke-width="0.5"/>
<polygon points="685.2,569.3 498.5,620.5 496.4,612.1 682.9,560.9" fill="url(#spk)" fill-opacity="0.50"/>
<polygon points="682.9,569.3 874.4,619.6 876.5,611.0 685.1,560.9" fill="#9a7844" stroke="#9a7844" stroke-width="0.5"/>
<polygon points="682.9,569.3 874.4,619.6 876.5,611.0 685.1,560.9" fill="url(#spk)" fill-opacity="0.50"/>
<polygon points="510.2,695.7 510.5,671.7 511.7,671.7 511.4,695.6" fill="#69685f" stroke="#69685f" stroke-width="0.5"/>
<polygon points="861.8,671.4 862.4,695.9 861.5,695.8 860.9,671.5" fill="#5c5b53" stroke="#5c5b53" stroke-width="0.5"/>
<polygon points="503.4,670.2 504.4,667.2 505.5,664.1 506.7,661.1 507.9,658.1 509.2,655.1 510.5,652.1 511.9,649.2 513.3,646.3 514.8,643.4 516.4,640.6 517.9,637.8 519.6,635.0 521.3,632.2 523.0,629.5 524.8,626.8 526.6,624.2 528.5,621.6 530.4,619.0 532.4,616.4 534.4,613.9 536.4,611.4 538.5,609.0 540.7,606.6 542.8,604.3 545.1,601.9 547.3,599.7 549.6,597.4 555.4,603.6 553.2,605.8 551.1,607.9 549.0,610.1 546.9,612.4 544.9,614.6 542.9,617.0 540.9,619.3 539.0,621.7 537.1,624.1 535.3,626.6 533.5,629.1 531.8,631.6 530.1,634.2 528.4,636.8 526.8,639.4 525.3,642.0 523.8,644.7 522.3,647.4 520.9,650.1 519.6,652.9 518.3,655.7 517.0,658.5 515.8,661.3 514.6,664.2 513.5,667.1 512.5,670.0 511.5,672.9" fill="#9a7844" stroke="#9a7844" stroke-width="0.5"/>
<polygon points="503.4,670.2 504.4,667.2 505.5,664.1 506.7,661.1 507.9,658.1 509.2,655.1 510.5,652.1 511.9,649.2 513.3,646.3 514.8,643.4 516.4,640.6 517.9,637.8 519.6,635.0 521.3,632.2 523.0,629.5 524.8,626.8 526.6,624.2 528.5,621.6 530.4,619.0 532.4,616.4 534.4,613.9 536.4,611.4 538.5,609.0 540.7,606.6 542.8,604.3 545.1,601.9 547.3,599.7 549.6,597.4 555.4,603.6 553.2,605.8 551.1,607.9 549.0,610.1 546.9,612.4 544.9,614.6 542.9,617.0 540.9,619.3 539.0,621.7 537.1,624.1 535.3,626.6 533.5,629.1 531.8,631.6 530.1,634.2 528.4,636.8 526.8,639.4 525.3,642.0 523.8,644.7 522.3,647.4 520.9,650.1 519.6,652.9 518.3,655.7 517.0,658.5 515.8,661.3 514.6,664.2 513.5,667.1 512.5,670.0 511.5,672.9" fill="url(#spk)" fill-opacity="0.65"/>
<polygon points="869.5,670.0 868.4,666.9 867.2,663.8 866.0,660.7 864.7,657.7 863.3,654.7 861.9,651.7 860.5,648.7 859.0,645.8 857.4,642.8 855.8,640.0 854.2,637.1 852.4,634.3 850.7,631.5 848.9,628.8 847.0,626.1 845.1,623.4 843.2,620.7 841.2,618.1 839.1,615.6 837.0,613.0 834.9,610.6 832.7,608.1 830.5,605.7 828.2,603.3 825.9,601.0 823.6,598.7 821.2,596.5 815.3,602.8 817.6,604.9 819.8,607.1 822.0,609.3 824.2,611.6 826.3,613.8 828.3,616.2 830.4,618.5 832.3,621.0 834.3,623.4 836.2,625.9 838.0,628.4 839.8,630.9 841.6,633.5 843.3,636.1 845.0,638.8 846.6,641.5 848.2,644.2 849.7,646.9 851.2,649.7 852.6,652.5 854.0,655.3 855.3,658.1 856.6,661.0 857.8,663.9 859.0,666.8 860.1,669.8 861.2,672.7" fill="#9a7844" stroke="#9a7844" stroke-width="0.5"/>
<polygon points="869.5,670.0 868.4,666.9 867.2,663.8 866.0,660.7 864.7,657.7 863.3,654.7 861.9,651.7 860.5,648.7 859.0,645.8 857.4,642.8 855.8,640.0 854.2,637.1 852.4,634.3 850.7,631.5 848.9,628.8 847.0,626.1 845.1,623.4 843.2,620.7 841.2,618.1 839.1,615.6 837.0,613.0 834.9,610.6 832.7,608.1 830.5,605.7 828.2,603.3 825.9,601.0 823.6,598.7 821.2,596.5 815.3,602.8 817.6,604.9 819.8,607.1 822.0,609.3 824.2,611.6 826.3,613.8 828.3,616.2 830.4,618.5 832.3,621.0 834.3,623.4 836.2,625.9 838.0,628.4 839.8,630.9 841.6,633.5 843.3,636.1 845.0,638.8 846.6,641.5 848.2,644.2 849.7,646.9 851.2,649.7 852.6,652.5 854.0,655.3 855.3,658.1 856.6,661.0 857.8,663.9 859.0,666.8 860.1,669.8 861.2,672.7" fill="url(#spk)" fill-opacity="0.65"/>
<polyline points="511.5,672.9 512.5,670.0 513.5,667.1 514.6,664.2 515.8,661.3 517.0,658.5 518.3,655.7 519.6,652.9 520.9,650.1 522.3,647.4 523.8,644.7 525.3,642.0 526.8,639.4 528.4,636.8 530.1,634.2 531.8,631.6 533.5,629.1 535.3,626.6 537.1,624.1 539.0,621.7 540.9,619.3 542.9,617.0 544.9,614.6 546.9,612.4 549.0,610.1 551.1,607.9 553.2,605.8 555.4,603.6" fill="none" stroke="#cfcabd" stroke-width="0.50" stroke-opacity="0.70"/>
<polyline points="503.4,670.2 504.4,667.2 505.5,664.1 506.7,661.1 507.9,658.1 509.2,655.1 510.5,652.1 511.9,649.2 513.3,646.3 514.8,643.4 516.4,640.6 517.9,637.8 519.6,635.0 521.3,632.2 523.0,629.5 524.8,626.8 526.6,624.2 528.5,621.6 530.4,619.0 532.4,616.4 534.4,613.9 536.4,611.4 538.5,609.0 540.7,606.6 542.8,604.3 545.1,601.9 547.3,599.7 549.6,597.4" fill="none" stroke="#cfcabd" stroke-width="0.40" stroke-opacity="0.60"/>
<polyline points="861.2,672.7 860.1,669.8 859.0,666.8 857.8,663.9 856.6,661.0 855.3,658.1 854.0,655.3 852.6,652.5 851.2,649.7 849.7,646.9 848.2,644.2 846.6,641.5 845.0,638.8 843.3,636.1 841.6,633.5 839.8,630.9 838.0,628.4 836.2,625.9 834.3,623.4 832.3,621.0 830.4,618.5 828.3,616.2 826.3,613.8 824.2,611.6 822.0,609.3 819.8,607.1 817.6,604.9 815.3,602.8" fill="none" stroke="#cfcabd" stroke-width="0.50" stroke-opacity="0.70"/>
<polyline points="869.5,670.0 868.4,666.9 867.2,663.8 866.0,660.7 864.7,657.7 863.3,654.7 861.9,651.7 860.5,648.7 859.0,645.8 857.4,642.8 855.8,640.0 854.2,637.1 852.4,634.3 850.7,631.5 848.9,628.8 847.0,626.1 845.1,623.4 843.2,620.7 841.2,618.1 839.1,615.6 837.0,613.0 834.9,610.6 832.7,608.1 830.5,605.7 828.2,603.3 825.9,601.0 823.6,598.7 821.2,596.5" fill="none" stroke="#cfcabd" stroke-width="0.40" stroke-opacity="0.60"/>
<polygon points="503.0,695.7 510.2,695.7 510.5,671.7 503.3,671.7" fill="#808076" stroke="#808076" stroke-width="0.5"/>
<polygon points="862.4,695.9 869.8,695.9 869.2,671.4 861.8,671.4" fill="#808076" stroke="#808076" stroke-width="0.5"/>
<polygon points="505.2,671.6 510.0,671.6 510.8,612.3 506.1,612.4" fill="#ba9458" stroke="#ba9458" stroke-width="0.5"/>
<polyline points="508.4,612.4 508.1,608.7" fill="none" stroke="#2a1c08" stroke-width="0.50" stroke-opacity="0.80"/>
<polygon points="862.5,671.4 867.4,671.4 865.9,611.1 861.0,611.1" fill="#ba9458" stroke="#ba9458" stroke-width="0.5"/>
<polyline points="863.4,611.1 863.8,607.5" fill="none" stroke="#2a1c08" stroke-width="0.50" stroke-opacity="0.80"/>
<polygon points="487.6,607.6 488.4,607.6 506.7,613.9 505.9,613.9" fill="#b29868" stroke="#b29868" stroke-width="0.5"/>
<polygon points="488.4,607.6 506.7,613.9 506.7,610.9 488.5,604.3" fill="#e7c47e" stroke="#e7c47e" stroke-width="0.5"/>
<polygon points="500.3,604.1 501.1,604.1 518.3,610.7 517.6,610.7" fill="#b29868" stroke="#b29868" stroke-width="0.5"/>
<polygon points="501.1,604.1 518.3,610.7 518.3,607.7 501.1,600.8" fill="#e7c47e" stroke="#e7c47e" stroke-width="0.5"/>
<polygon points="513.0,600.6 513.8,600.6 529.9,607.5 529.2,607.5" fill="#b29868" stroke="#b29868" stroke-width="0.5"/>
<polygon points="513.8,600.6 529.9,607.5 530.0,604.5 513.8,597.3" fill="#e7c47e" stroke="#e7c47e" stroke-width="0.5"/>
<polygon points="525.7,597.1 526.4,597.1 541.6,604.3 540.8,604.3" fill="#b29868" stroke="#b29868" stroke-width="0.5"/>
<polygon points="526.4,597.1 541.6,604.3 541.6,601.3 526.5,593.9" fill="#e7c47e" stroke="#e7c47e" stroke-width="0.5"/>
<polygon points="534.3,594.8 535.1,594.8 549.5,602.1 548.8,602.1" fill="#b29868" stroke="#b29868" stroke-width="0.5"/>
<polygon points="535.1,594.8 549.5,602.1 549.6,599.1 535.2,591.5" fill="#e7c47e" stroke="#e7c47e" stroke-width="0.5"/>
<polygon points="538.3,593.7 539.1,593.7 553.2,601.1 552.5,601.1" fill="#b29868" stroke="#b29868" stroke-width="0.5"/>
<polygon points="539.1,593.7 553.2,601.1 553.2,598.1 539.2,590.4" fill="#e7c47e" stroke="#e7c47e" stroke-width="0.5"/>
<polygon points="879.2,606.1 880.0,606.1 865.7,612.7 865.0,612.7" fill="#d6c8a8" stroke="#d6c8a8" stroke-width="0.5"/>
<polygon points="879.2,606.1 865.0,612.7 864.9,609.6 879.1,602.8" fill="#c0a064" stroke="#c0a064" stroke-width="0.5"/>
<polygon points="551.0,590.2 551.8,590.2 564.8,597.9 564.1,597.9" fill="#b29868" stroke="#b29868" stroke-width="0.5"/>
<polygon points="551.8,590.2 564.8,597.9 564.9,594.9 551.9,586.9" fill="#e7c47e" stroke="#e7c47e" stroke-width="0.5"/>
<polygon points="866.0,602.7 866.9,602.7 853.7,609.5 852.9,609.5" fill="#d6c8a8" stroke="#d6c8a8" stroke-width="0.5"/>
<polygon points="866.0,602.7 852.9,609.5 852.8,606.4 866.0,599.4" fill="#c0a064" stroke="#c0a064" stroke-width="0.5"/>
<polygon points="563.7,586.7 564.5,586.7 576.5,594.7 575.8,594.7" fill="#b29868" stroke="#b29868" stroke-width="0.5"/>
<polygon points="564.5,586.7 576.5,594.7 576.5,591.7 564.5,583.4" fill="#e7c47e" stroke="#e7c47e" stroke-width="0.5"/>
<polygon points="852.9,599.3 853.7,599.3 841.6,606.3 840.9,606.3" fill="#d6c8a8" stroke="#d6c8a8" stroke-width="0.5"/>
<polygon points="852.9,599.3 840.9,606.3 840.8,603.3 852.8,595.9" fill="#c0a064" stroke="#c0a064" stroke-width="0.5"/>
<polygon points="576.4,583.2 577.2,583.2 588.2,591.5 587.4,591.5" fill="#b29868" stroke="#b29868" stroke-width="0.5"/>
<polygon points="577.2,583.2 588.2,591.5 588.2,588.5 577.2,579.9" fill="#e7c47e" stroke="#e7c47e" stroke-width="0.5"/>
<polygon points="839.8,595.8 840.6,595.8 829.6,603.2 828.9,603.2" fill="#d6c8a8" stroke="#d6c8a8" stroke-width="0.5"/>
<polygon points="839.8,595.8 828.9,603.2 828.8,600.1 839.7,592.5" fill="#c0a064" stroke="#c0a064" stroke-width="0.5"/>
<polygon points="830.8,593.5 831.6,593.5 821.4,601.0 820.7,601.0" fill="#d6c8a8" stroke="#d6c8a8" stroke-width="0.5"/>
<polygon points="830.8,593.5 820.7,601.0 820.6,598.0 830.7,590.2" fill="#c0a064" stroke="#c0a064" stroke-width="0.5"/>
<polygon points="589.1,579.7 589.9,579.7 599.8,588.3 599.1,588.3" fill="#b29868" stroke="#b29868" stroke-width="0.5"/>
<polygon points="589.9,579.7 599.8,588.3 599.8,585.3 589.9,576.4" fill="#e7c47e" stroke="#e7c47e" stroke-width="0.5"/>
<polygon points="826.7,592.4 827.5,592.4 817.6,600.0 816.9,600.1" fill="#d6c8a8" stroke="#d6c8a8" stroke-width="0.5"/>
<polygon points="826.7,592.4 816.9,600.1 816.8,597.0 826.6,589.1" fill="#c0a064" stroke="#c0a064" stroke-width="0.5"/>
<polygon points="601.9,576.2 602.6,576.2 611.5,585.1 610.8,585.1" fill="#b29868" stroke="#b29868" stroke-width="0.5"/>
<polygon points="602.6,576.2 611.5,585.1 611.5,582.1 602.7,572.9" fill="#e7c47e" stroke="#e7c47e" stroke-width="0.5"/>
<polygon points="813.6,589.0 814.4,589.0 805.7,596.9 804.9,596.9" fill="#d6c8a8" stroke="#d6c8a8" stroke-width="0.5"/>
<polygon points="813.6,589.0 804.9,596.9 804.9,593.9 813.6,585.7" fill="#c0a064" stroke="#c0a064" stroke-width="0.5"/>
<polygon points="614.6,572.7 615.4,572.7 623.2,581.9 622.4,581.9" fill="#b29868" stroke="#b29868" stroke-width="0.5"/>
<polygon points="615.4,572.7 623.2,581.9 623.2,578.9 615.4,569.5" fill="#e7c47e" stroke="#e7c47e" stroke-width="0.5"/>
<polygon points="800.6,585.6 801.4,585.6 793.7,593.8 793.0,593.8" fill="#d6c8a8" stroke="#d6c8a8" stroke-width="0.5"/>
<polygon points="800.6,585.6 793.0,593.8 792.9,590.7 800.5,582.3" fill="#c0a064" stroke="#c0a064" stroke-width="0.5"/>
<polygon points="627.3,569.2 628.1,569.2 634.8,578.7 634.1,578.7" fill="#b29868" stroke="#b29868" stroke-width="0.5"/>
<polygon points="628.1,569.2 634.8,578.7 634.8,575.7 628.1,566.0" fill="#e7c47e" stroke="#e7c47e" stroke-width="0.5"/>
<polygon points="787.6,582.2 788.4,582.2 781.8,590.7 781.1,590.7" fill="#d6c8a8" stroke="#d6c8a8" stroke-width="0.5"/>
<polygon points="787.6,582.2 781.1,590.7 781.0,587.6 787.5,578.9" fill="#c0a064" stroke="#c0a064" stroke-width="0.5"/>
<polygon points="640.0,565.7 640.8,565.7 646.5,575.5 645.8,575.5" fill="#b29868" stroke="#b29868" stroke-width="0.5"/>
<polygon points="640.8,565.7 646.5,575.5 646.5,572.5 640.8,562.5" fill="#e7c47e" stroke="#e7c47e" stroke-width="0.5"/>
<polygon points="774.6,578.8 775.4,578.8 769.9,587.5 769.2,587.5" fill="#d6c8a8" stroke="#d6c8a8" stroke-width="0.5"/>
<polygon points="774.6,578.8 769.2,587.5 769.1,584.5 774.5,575.5" fill="#c0a064" stroke="#c0a064" stroke-width="0.5"/>
<polygon points="652.8,562.2 653.6,562.2 658.2,572.3 657.5,572.3" fill="#b29868" stroke="#b29868" stroke-width="0.5"/>
<polygon points="653.6,562.2 658.2,572.3 658.2,569.3 653.6,559.0" fill="#e7c47e" stroke="#e7c47e" stroke-width="0.5"/>
<polygon points="761.6,575.4 762.4,575.4 758.0,584.4 757.3,584.4" fill="#d6c8a8" stroke="#d6c8a8" stroke-width="0.5"/>
<polygon points="761.6,575.4 757.3,584.4 757.2,581.4 761.6,572.1" fill="#c0a064" stroke="#c0a064" stroke-width="0.5"/>
<polygon points="665.5,558.7 666.3,558.7 669.9,569.1 669.2,569.1" fill="#b29868" stroke="#b29868" stroke-width="0.5"/>
<polygon points="666.3,558.7 669.9,569.1 669.9,566.1 666.3,555.5" fill="#e7c47e" stroke="#e7c47e" stroke-width="0.5"/>
<polygon points="748.7,572.0 749.5,572.0 746.2,581.3 745.4,581.3" fill="#d6c8a8" stroke="#d6c8a8" stroke-width="0.5"/>
<polygon points="748.7,572.0 745.4,581.3 745.4,578.3 748.6,568.7" fill="#c0a064" stroke="#c0a064" stroke-width="0.5"/>
<polygon points="678.3,555.2 679.1,555.2 681.6,565.9 680.9,565.9" fill="#b29868" stroke="#b29868" stroke-width="0.5"/>
<polygon points="679.1,555.2 681.6,565.9 681.6,562.9 679.0,552.0" fill="#e7c47e" stroke="#e7c47e" stroke-width="0.5"/>
<polygon points="735.8,568.6 736.6,568.6 734.3,578.2 733.6,578.2" fill="#d6c8a8" stroke="#d6c8a8" stroke-width="0.5"/>
<polygon points="735.8,568.6 733.6,578.2 733.6,575.2 735.7,565.3" fill="#c0a064" stroke="#c0a064" stroke-width="0.5"/>
<polygon points="681.3,554.4 682.1,554.4 684.4,565.1 683.7,565.1" fill="#b29868" stroke="#b29868" stroke-width="0.5"/>
<polygon points="682.1,554.4 684.4,565.1 684.4,562.1 682.1,551.1" fill="#e7c47e" stroke="#e7c47e" stroke-width="0.5"/>
<polygon points="684.4,555.2 685.2,555.2 687.2,565.9 686.5,565.9" fill="#b29868" stroke="#b29868" stroke-width="0.5"/>
<polygon points="685.2,555.2 687.2,565.9 687.2,562.8 685.2,551.9" fill="#e7c47e" stroke="#e7c47e" stroke-width="0.5"/>
<polygon points="722.9,565.3 723.7,565.3 722.5,575.1 721.8,575.1" fill="#d6c8a8" stroke="#d6c8a8" stroke-width="0.5"/>
<polygon points="722.9,565.3 721.8,575.1 721.8,572.1 722.9,562.0" fill="#c0a064" stroke="#c0a064" stroke-width="0.5"/>
<polygon points="697.2,558.6 698.0,558.5 699.0,568.9 698.2,568.9" fill="#b29868" stroke="#b29868" stroke-width="0.5"/>
<polygon points="698.0,558.5 699.0,568.9 698.9,565.9 698.0,555.3" fill="#e7c47e" stroke="#e7c47e" stroke-width="0.5"/>
<polygon points="710.0,561.9 710.8,561.9 710.7,572.0 710.0,572.0" fill="#d6c8a8" stroke="#d6c8a8" stroke-width="0.5"/>
<polygon points="710.0,561.9 710.0,572.0 710.0,569.0 710.0,558.6" fill="#c0a064" stroke="#c0a064" stroke-width="0.5"/>
<polygon points="682.9,558.7 479.0,614.7 479.5,614.8 683.0,559.0" fill="#8c6c3e" stroke="#8c6c3e" stroke-width="0.5"/>
<polygon points="680.4,558.7 889.9,613.6 889.5,613.7 680.5,559.0" fill="#8c6c3e" stroke="#8c6c3e" stroke-width="0.5"/>
<polygon points="493.1,671.9 494.2,668.7 495.3,665.5 496.5,662.4 497.8,659.3 499.1,656.2 500.5,653.1 502.0,650.0 503.5,647.0 505.0,644.0 506.6,641.1 508.2,638.2 509.9,635.3 511.7,632.4 513.5,629.6 515.3,626.8 517.2,624.0 519.2,621.3 521.2,618.6 523.2,616.0 525.3,613.3 527.5,610.8 529.7,608.2 531.9,605.8 534.2,603.3 536.5,600.9 538.8,598.5 541.2,596.2 541.7,596.5 539.3,598.8 536.9,601.1 534.6,603.5 532.4,606.0 530.2,608.5 528.0,611.0 525.8,613.5 523.8,616.1 521.7,618.8 519.7,621.5 517.8,624.2 515.9,626.9 514.0,629.7 512.2,632.5 510.5,635.4 508.8,638.3 507.2,641.2 505.6,644.1 504.0,647.1 502.5,650.1 501.1,653.2 499.7,656.2 498.4,659.3 497.1,662.4 495.9,665.6 494.8,668.7 493.7,671.9" fill="#9c7a46" stroke="#9c7a46" stroke-width="0.5"/>
<polygon points="491.4,670.5 492.5,605.8 493.3,606.1 492.3,670.5" fill="#aa8650" stroke="#aa8650" stroke-width="0.5"/>
<polygon points="875.5,671.7 874.3,668.4 873.1,665.2 871.8,662.0 870.5,658.8 869.1,655.7 867.6,652.6 866.1,649.5 864.5,646.5 862.9,643.4 861.2,640.4 859.5,637.5 857.7,634.5 855.9,631.6 854.0,628.8 852.1,626.0 850.1,623.2 848.1,620.4 846.0,617.7 843.9,615.1 841.7,612.4 839.5,609.8 837.2,607.3 834.9,604.8 832.5,602.3 830.1,599.9 827.7,597.5 825.2,595.2 824.9,595.5 827.4,597.8 829.8,600.1 832.2,602.6 834.5,605.0 836.8,607.5 839.1,610.0 841.3,612.6 843.5,615.2 845.6,617.9 847.7,620.6 849.7,623.4 851.7,626.1 853.6,628.9 855.5,631.8 857.3,634.7 859.1,637.6 860.8,640.6 862.5,643.5 864.1,646.6 865.7,649.6 867.2,652.7 868.6,655.8 870.0,658.9 871.4,662.1 872.6,665.3 873.9,668.5 875.0,671.7" fill="#8c6c3e" stroke="#8c6c3e" stroke-width="0.5"/>
<polygon points="875.2,604.3 876.9,670.2 876.3,670.3 874.5,604.6" fill="#967442" stroke="#967442" stroke-width="0.5"/>
<polygon points="682.9,558.7 479.0,614.7 476.7,605.4 680.4,549.5" fill="#9a7844" stroke="#9a7844" stroke-width="0.5"/>
<polygon points="682.9,558.7 479.0,614.7 476.7,605.4 680.4,549.5" fill="url(#spk)" fill-opacity="0.50"/>
<polygon points="680.4,558.7 889.9,613.6 892.2,604.1 682.9,549.5" fill="#9a7844" stroke="#9a7844" stroke-width="0.5"/>
<polygon points="680.4,558.7 889.9,613.6 892.2,604.1 682.9,549.5" fill="url(#spk)" fill-opacity="0.50"/>
<polygon points="491.6,696.8 492.0,670.5 493.4,670.6 493.0,696.7" fill="#69685f" stroke="#69685f" stroke-width="0.5"/>
<polygon points="876.2,670.3 876.9,697.0 875.8,696.9 875.1,670.4" fill="#5c5b53" stroke="#5c5b53" stroke-width="0.5"/>
<polygon points="484.3,669.0 485.4,665.6 486.6,662.3 487.9,659.0 489.3,655.7 490.7,652.4 492.1,649.2 493.6,646.0 495.2,642.8 496.8,639.7 498.5,636.6 500.2,633.5 502.0,630.5 503.9,627.5 505.8,624.5 507.7,621.6 509.7,618.7 511.8,615.8 513.9,613.0 516.0,610.2 518.2,607.5 520.5,604.8 522.7,602.1 525.1,599.5 527.5,596.9 529.9,594.4 532.4,591.9 534.9,589.5 541.2,596.2 538.8,598.5 536.5,600.9 534.2,603.3 531.9,605.8 529.7,608.2 527.5,610.8 525.3,613.3 523.2,616.0 521.2,618.6 519.2,621.3 517.2,624.0 515.3,626.8 513.5,629.6 511.7,632.4 509.9,635.3 508.2,638.2 506.6,641.1 505.0,644.0 503.5,647.0 502.0,650.0 500.5,653.1 499.1,656.2 497.8,659.3 496.5,662.4 495.3,665.5 494.2,668.7 493.1,671.9" fill="#9a7844" stroke="#9a7844" stroke-width="0.5"/>
<polygon points="484.3,669.0 485.4,665.6 486.6,662.3 487.9,659.0 489.3,655.7 490.7,652.4 492.1,649.2 493.6,646.0 495.2,642.8 496.8,639.7 498.5,636.6 500.2,633.5 502.0,630.5 503.9,627.5 505.8,624.5 507.7,621.6 509.7,618.7 511.8,615.8 513.9,613.0 516.0,610.2 518.2,607.5 520.5,604.8 522.7,602.1 525.1,599.5 527.5,596.9 529.9,594.4 532.4,591.9 534.9,589.5 541.2,596.2 538.8,598.5 536.5,600.9 534.2,603.3 531.9,605.8 529.7,608.2 527.5,610.8 525.3,613.3 523.2,616.0 521.2,618.6 519.2,621.3 517.2,624.0 515.3,626.8 513.5,629.6 511.7,632.4 509.9,635.3 508.2,638.2 506.6,641.1 505.0,644.0 503.5,647.0 502.0,650.0 500.5,653.1 499.1,656.2 497.8,659.3 496.5,662.4 495.3,665.5 494.2,668.7 493.1,671.9" fill="url(#spk)" fill-opacity="0.65"/>
<polygon points="884.6,668.7 883.4,665.3 882.1,661.9 880.7,658.5 879.3,655.2 877.8,651.9 876.3,648.6 874.7,645.4 873.1,642.2 871.4,639.0 869.6,635.8 867.8,632.7 865.9,629.6 864.0,626.6 862.0,623.6 859.9,620.6 857.8,617.7 855.7,614.8 853.5,612.0 851.3,609.2 849.0,606.4 846.6,603.7 844.3,601.0 841.8,598.4 839.4,595.8 836.8,593.3 834.3,590.8 831.7,588.3 825.2,595.2 827.7,597.5 830.1,599.9 832.5,602.3 834.9,604.8 837.2,607.3 839.5,609.8 841.7,612.4 843.9,615.1 846.0,617.7 848.1,620.4 850.1,623.2 852.1,626.0 854.0,628.8 855.9,631.6 857.7,634.5 859.5,637.5 861.2,640.4 862.9,643.4 864.5,646.5 866.1,649.5 867.6,652.6 869.1,655.7 870.5,658.8 871.8,662.0 873.1,665.2 874.3,668.4 875.5,671.7" fill="#9a7844" stroke="#9a7844" stroke-width="0.5"/>
<polygon points="884.6,668.7 883.4,665.3 882.1,661.9 880.7,658.5 879.3,655.2 877.8,651.9 876.3,648.6 874.7,645.4 873.1,642.2 871.4,639.0 869.6,635.8 867.8,632.7 865.9,629.6 864.0,626.6 862.0,623.6 859.9,620.6 857.8,617.7 855.7,614.8 853.5,612.0 851.3,609.2 849.0,606.4 846.6,603.7 844.3,601.0 841.8,598.4 839.4,595.8 836.8,593.3 834.3,590.8 831.7,588.3 825.2,595.2 827.7,597.5 830.1,599.9 832.5,602.3 834.9,604.8 837.2,607.3 839.5,609.8 841.7,612.4 843.9,615.1 846.0,617.7 848.1,620.4 850.1,623.2 852.1,626.0 854.0,628.8 855.9,631.6 857.7,634.5 859.5,637.5 861.2,640.4 862.9,643.4 864.5,646.5 866.1,649.5 867.6,652.6 869.1,655.7 870.5,658.8 871.8,662.0 873.1,665.2 874.3,668.4 875.5,671.7" fill="url(#spk)" fill-opacity="0.65"/>
<polyline points="493.1,671.9 494.2,668.7 495.3,665.5 496.5,662.4 497.8,659.3 499.1,656.2 500.5,653.1 502.0,650.0 503.5,647.0 505.0,644.0 506.6,641.1 508.2,638.2 509.9,635.3 511.7,632.4 513.5,629.6 515.3,626.8 517.2,624.0 519.2,621.3 521.2,618.6 523.2,616.0 525.3,613.3 527.5,610.8 529.7,608.2 531.9,605.8 534.2,603.3 536.5,600.9 538.8,598.5 541.2,596.2" fill="none" stroke="#cfcabd" stroke-width="0.50" stroke-opacity="0.70"/>
<polyline points="484.3,669.0 485.4,665.6 486.6,662.3 487.9,659.0 489.3,655.7 490.7,652.4 492.1,649.2 493.6,646.0 495.2,642.8 496.8,639.7 498.5,636.6 500.2,633.5 502.0,630.5 503.9,627.5 505.8,624.5 507.7,621.6 509.7,618.7 511.8,615.8 513.9,613.0 516.0,610.2 518.2,607.5 520.5,604.8 522.7,602.1 525.1,599.5 527.5,596.9 529.9,594.4 532.4,591.9 534.9,589.5" fill="none" stroke="#cfcabd" stroke-width="0.40" stroke-opacity="0.60"/>
<polyline points="875.5,671.7 874.3,668.4 873.1,665.2 871.8,662.0 870.5,658.8 869.1,655.7 867.6,652.6 866.1,649.5 864.5,646.5 862.9,643.4 861.2,640.4 859.5,637.5 857.7,634.5 855.9,631.6 854.0,628.8 852.1,626.0 850.1,623.2 848.1,620.4 846.0,617.7 843.9,615.1 841.7,612.4 839.5,609.8 837.2,607.3 834.9,604.8 832.5,602.3 830.1,599.9 827.7,597.5 825.2,595.2" fill="none" stroke="#cfcabd" stroke-width="0.50" stroke-opacity="0.70"/>
<polyline points="884.6,668.7 883.4,665.3 882.1,661.9 880.7,658.5 879.3,655.2 877.8,651.9 876.3,648.6 874.7,645.4 873.1,642.2 871.4,639.0 869.6,635.8 867.8,632.7 865.9,629.6 864.0,626.6 862.0,623.6 859.9,620.6 857.8,617.7 855.7,614.8 853.5,612.0 851.3,609.2 849.0,606.4 846.6,603.7 844.3,601.0 841.8,598.4 839.4,595.8 836.8,593.3 834.3,590.8 831.7,588.3" fill="none" stroke="#cfcabd" stroke-width="0.40" stroke-opacity="0.60"/>
<polygon points="483.7,696.8 491.6,696.8 492.0,670.5 484.2,670.5" fill="#808076" stroke="#808076" stroke-width="0.5"/>
<polygon points="876.9,697.0 885.1,697.0 884.3,670.3 876.2,670.3" fill="#808076" stroke="#808076" stroke-width="0.5"/>
<polygon points="486.2,670.5 491.4,670.5 492.5,605.8 487.3,605.8" fill="#ba9458" stroke="#ba9458" stroke-width="0.5"/>
<polyline points="489.9,605.8 489.5,601.8" fill="none" stroke="#2a1c08" stroke-width="0.50" stroke-opacity="0.80"/>
<polygon points="876.9,670.2 882.3,670.2 880.6,604.3 875.2,604.3" fill="#ba9458" stroke="#ba9458" stroke-width="0.5"/>
<polyline points="877.9,604.3 878.2,600.4" fill="none" stroke="#2a1c08" stroke-width="0.50" stroke-opacity="0.80"/>
<polygon points="465.2,599.9 466.0,599.9 488.0,607.4 487.2,607.4" fill="#b29868" stroke="#b29868" stroke-width="0.5"/>
<polygon points="466.0,599.9 488.0,607.4 488.0,604.1 466.1,596.3" fill="#e7c47e" stroke="#e7c47e" stroke-width="0.5"/>
<polygon points="479.1,596.0 480.0,596.0 500.7,603.9 499.9,603.9" fill="#b29868" stroke="#b29868" stroke-width="0.5"/>
<polygon points="480.0,596.0 500.7,603.9 500.7,600.7 480.0,592.4" fill="#e7c47e" stroke="#e7c47e" stroke-width="0.5"/>
<polygon points="493.1,592.2 493.9,592.2 513.4,600.5 512.6,600.5" fill="#b29868" stroke="#b29868" stroke-width="0.5"/>
<polygon points="493.9,592.2 513.4,600.5 513.4,597.2 494.0,588.6" fill="#e7c47e" stroke="#e7c47e" stroke-width="0.5"/>
<polygon points="507.0,588.4 507.9,588.4 526.1,597.0 525.3,597.0" fill="#b29868" stroke="#b29868" stroke-width="0.5"/>
<polygon points="507.9,588.4 526.1,597.0 526.1,593.7 507.9,584.8" fill="#e7c47e" stroke="#e7c47e" stroke-width="0.5"/>
<polygon points="516.6,585.7 517.4,585.7 534.8,594.6 534.0,594.6" fill="#b29868" stroke="#b29868" stroke-width="0.5"/>
<polygon points="517.4,585.7 534.8,594.6 534.8,591.3 517.5,582.1" fill="#e7c47e" stroke="#e7c47e" stroke-width="0.5"/>
<polygon points="521.0,584.5 521.9,584.5 538.8,593.5 538.0,593.5" fill="#b29868" stroke="#b29868" stroke-width="0.5"/>
<polygon points="521.9,584.5 538.8,593.5 538.8,590.2 521.9,580.9" fill="#e7c47e" stroke="#e7c47e" stroke-width="0.5"/>
<polygon points="896.8,598.1 897.7,598.1 880.4,606.0 879.6,606.0" fill="#d6c8a8" stroke="#d6c8a8" stroke-width="0.5"/>
<polygon points="896.8,598.1 879.6,606.0 879.5,602.6 896.7,594.4" fill="#c0a064" stroke="#c0a064" stroke-width="0.5"/>
<polygon points="535.0,580.7 535.8,580.7 551.5,590.0 550.7,590.0" fill="#b29868" stroke="#b29868" stroke-width="0.5"/>
<polygon points="535.8,580.7 551.5,590.0 551.5,586.7 535.9,577.1" fill="#e7c47e" stroke="#e7c47e" stroke-width="0.5"/>
<polygon points="882.2,594.3 883.1,594.3 867.2,602.5 866.4,602.5" fill="#d6c8a8" stroke="#d6c8a8" stroke-width="0.5"/>
<polygon points="882.2,594.3 866.4,602.5 866.3,599.2 882.1,590.6" fill="#c0a064" stroke="#c0a064" stroke-width="0.5"/>
<polygon points="548.9,576.8 549.8,576.8 564.2,586.5 563.4,586.5" fill="#b29868" stroke="#b29868" stroke-width="0.5"/>
<polygon points="549.8,576.8 564.2,586.5 564.3,583.2 549.8,573.2" fill="#e7c47e" stroke="#e7c47e" stroke-width="0.5"/>
<polygon points="867.7,590.5 868.6,590.5 854.0,599.1 853.2,599.1" fill="#d6c8a8" stroke="#d6c8a8" stroke-width="0.5"/>
<polygon points="867.7,590.5 853.2,599.1 853.1,595.7 867.6,586.9" fill="#c0a064" stroke="#c0a064" stroke-width="0.5"/>
<polygon points="562.9,573.0 563.8,573.0 577.0,583.0 576.2,583.0" fill="#b29868" stroke="#b29868" stroke-width="0.5"/>
<polygon points="563.8,573.0 577.0,583.0 577.0,579.7 563.8,569.4" fill="#e7c47e" stroke="#e7c47e" stroke-width="0.5"/>
<polygon points="853.2,586.8 854.1,586.8 840.9,595.6 840.0,595.6" fill="#d6c8a8" stroke="#d6c8a8" stroke-width="0.5"/>
<polygon points="853.2,586.8 840.0,595.6 840.0,592.3 853.1,583.1" fill="#c0a064" stroke="#c0a064" stroke-width="0.5"/>
<polygon points="843.3,584.2 844.2,584.2 831.9,593.3 831.1,593.3" fill="#d6c8a8" stroke="#d6c8a8" stroke-width="0.5"/>
<polygon points="843.3,584.2 831.1,593.3 831.0,590.0 843.2,580.5" fill="#c0a064" stroke="#c0a064" stroke-width="0.5"/>
<polygon points="576.9,569.2 577.8,569.1 589.7,579.5 588.9,579.5" fill="#b29868" stroke="#b29868" stroke-width="0.5"/>
<polygon points="577.8,569.1 589.7,579.5 589.7,576.2 577.8,565.5" fill="#e7c47e" stroke="#e7c47e" stroke-width="0.5"/>
<polygon points="838.7,583.0 839.6,583.0 827.7,592.2 826.9,592.2" fill="#d6c8a8" stroke="#d6c8a8" stroke-width="0.5"/>
<polygon points="838.7,583.0 826.9,592.2 826.9,588.9 838.7,579.3" fill="#c0a064" stroke="#c0a064" stroke-width="0.5"/>
<polygon points="590.9,565.3 591.8,565.3 602.4,576.0 601.6,576.0" fill="#b29868" stroke="#b29868" stroke-width="0.5"/>
<polygon points="591.8,565.3 602.4,576.0 602.4,572.7 591.8,561.7" fill="#e7c47e" stroke="#e7c47e" stroke-width="0.5"/>
<polygon points="824.3,579.2 825.2,579.2 814.6,588.8 813.8,588.8" fill="#d6c8a8" stroke="#d6c8a8" stroke-width="0.5"/>
<polygon points="824.3,579.2 813.8,588.8 813.8,585.5 824.2,575.6" fill="#c0a064" stroke="#c0a064" stroke-width="0.5"/>
<polygon points="604.9,561.5 605.8,561.4 615.2,572.5 614.4,572.5" fill="#b29868" stroke="#b29868" stroke-width="0.5"/>
<polygon points="605.8,561.4 615.2,572.5 615.2,569.2 605.8,557.8" fill="#e7c47e" stroke="#e7c47e" stroke-width="0.5"/>
<polygon points="809.9,575.5 810.8,575.5 801.6,585.4 800.8,585.4" fill="#d6c8a8" stroke="#d6c8a8" stroke-width="0.5"/>
<polygon points="809.9,575.5 800.8,585.4 800.7,582.1 809.9,571.8" fill="#c0a064" stroke="#c0a064" stroke-width="0.5"/>
<polygon points="619.0,557.6 619.8,557.6 627.9,569.0 627.1,569.0" fill="#b29868" stroke="#b29868" stroke-width="0.5"/>
<polygon points="619.8,557.6 627.9,569.0 627.9,565.7 619.8,554.0" fill="#e7c47e" stroke="#e7c47e" stroke-width="0.5"/>
<polygon points="795.6,571.8 796.5,571.7 788.5,582.0 787.7,582.0" fill="#d6c8a8" stroke="#d6c8a8" stroke-width="0.5"/>
<polygon points="795.6,571.8 787.7,582.0 787.7,578.7 795.5,568.1" fill="#c0a064" stroke="#c0a064" stroke-width="0.5"/>
<polygon points="633.0,553.7 633.8,553.7 640.7,565.5 639.9,565.5" fill="#b29868" stroke="#b29868" stroke-width="0.5"/>
<polygon points="633.8,553.7 640.7,565.5 640.7,562.2 633.8,550.1" fill="#e7c47e" stroke="#e7c47e" stroke-width="0.5"/>
<polygon points="781.2,568.0 782.1,568.0 775.5,578.6 774.7,578.6" fill="#d6c8a8" stroke="#d6c8a8" stroke-width="0.5"/>
<polygon points="781.2,568.0 774.7,578.6 774.7,575.3 781.2,564.4" fill="#c0a064" stroke="#c0a064" stroke-width="0.5"/>
<polygon points="647.0,549.9 647.9,549.9 653.5,562.0 652.7,562.0" fill="#b29868" stroke="#b29868" stroke-width="0.5"/>
<polygon points="647.9,549.9 653.5,562.0 653.4,558.7 647.9,546.3" fill="#e7c47e" stroke="#e7c47e" stroke-width="0.5"/>
<polygon points="767.0,564.3 767.8,564.3 762.5,575.2 761.7,575.2" fill="#d6c8a8" stroke="#d6c8a8" stroke-width="0.5"/>
<polygon points="767.0,564.3 761.7,575.2 761.7,571.9 766.9,560.7" fill="#c0a064" stroke="#c0a064" stroke-width="0.5"/>
<polygon points="661.0,546.0 661.9,546.0 666.2,558.5 665.4,558.5" fill="#b29868" stroke="#b29868" stroke-width="0.5"/>
<polygon points="661.9,546.0 666.2,558.5 666.2,555.2 661.9,542.4" fill="#e7c47e" stroke="#e7c47e" stroke-width="0.5"/>
<polygon points="752.7,560.6 753.6,560.6 749.6,571.8 748.8,571.8" fill="#d6c8a8" stroke="#d6c8a8" stroke-width="0.5"/>
<polygon points="752.7,560.6 748.8,571.8 748.7,568.5 752.6,557.0" fill="#c0a064" stroke="#c0a064" stroke-width="0.5"/>
<polygon points="675.1,542.2 676.0,542.2 679.0,555.0 678.2,555.0" fill="#b29868" stroke="#b29868" stroke-width="0.5"/>
<polygon points="676.0,542.2 679.0,555.0 679.0,551.7 675.9,538.6" fill="#e7c47e" stroke="#e7c47e" stroke-width="0.5"/>
<polygon points="738.5,556.9 739.3,556.9 736.6,568.4 735.8,568.4" fill="#d6c8a8" stroke="#d6c8a8" stroke-width="0.5"/>
<polygon points="738.5,556.9 735.8,568.4 735.8,565.1 738.4,553.3" fill="#c0a064" stroke="#c0a064" stroke-width="0.5"/>
<polygon points="678.5,541.2 679.3,541.2 682.1,554.1 681.3,554.1" fill="#b29868" stroke="#b29868" stroke-width="0.5"/>
<polygon points="679.3,541.2 682.1,554.1 682.1,550.9 679.3,537.6" fill="#e7c47e" stroke="#e7c47e" stroke-width="0.5"/>
<polygon points="681.8,542.1 682.7,542.1 685.1,554.9 684.3,554.9" fill="#b29868" stroke="#b29868" stroke-width="0.5"/>
<polygon points="682.7,542.1 685.1,554.9 685.1,551.7 682.7,538.5" fill="#e7c47e" stroke="#e7c47e" stroke-width="0.5"/>
<polygon points="724.3,553.2 725.1,553.2 723.7,565.0 722.9,565.0" fill="#d6c8a8" stroke="#d6c8a8" stroke-width="0.5"/>
<polygon points="724.3,553.2 722.9,565.0 722.9,561.7 724.2,549.6" fill="#c0a064" stroke="#c0a064" stroke-width="0.5"/>
<polygon points="695.9,545.8 696.8,545.8 698.0,558.3 697.2,558.3" fill="#b29868" stroke="#b29868" stroke-width="0.5"/>
<polygon points="696.8,545.8 698.0,558.3 698.0,555.0 696.8,542.2" fill="#e7c47e" stroke="#e7c47e" stroke-width="0.5"/>
<polygon points="710.1,549.5 711.0,549.5 710.8,561.7 710.0,561.7" fill="#d6c8a8" stroke="#d6c8a8" stroke-width="0.5"/>
<polygon points="710.1,549.5 710.0,561.7 710.0,558.4 710.1,545.9" fill="#c0a064" stroke="#c0a064" stroke-width="0.5"/>
<polygon points="680.2,546.0 455.6,607.7 456.2,607.8 680.3,546.3" fill="#8c6c3e" stroke="#8c6c3e" stroke-width="0.5"/>
<polygon points="677.5,546.0 908.6,606.3 908.1,606.4 677.5,546.3" fill="#8c6c3e" stroke="#8c6c3e" stroke-width="0.5"/>
<polygon points="470.9,670.7 472.1,667.1 473.4,663.7 474.8,660.2 476.2,656.7 477.6,653.3 479.2,649.9 480.8,646.6 482.4,643.3 484.1,640.0 485.9,636.7 487.7,633.5 489.6,630.3 491.5,627.2 493.5,624.0 495.6,621.0 497.7,617.9 499.8,614.9 502.0,612.0 504.3,609.0 506.6,606.2 508.9,603.3 511.4,600.6 513.8,597.8 516.3,595.1 518.9,592.5 521.5,589.9 524.1,587.3 524.7,587.6 522.0,590.2 519.4,592.8 516.9,595.4 514.4,598.1 512.0,600.8 509.6,603.6 507.2,606.4 504.9,609.3 502.7,612.2 500.5,615.1 498.3,618.1 496.2,621.2 494.2,624.2 492.2,627.3 490.3,630.5 488.4,633.6 486.6,636.9 484.8,640.1 483.1,643.4 481.5,646.7 479.9,650.1 478.4,653.4 476.9,656.8 475.5,660.3 474.1,663.7 472.9,667.2 471.6,670.7" fill="#9c7a46" stroke="#9c7a46" stroke-width="0.5"/>
<polygon points="469.1,669.1 470.5,597.8 471.5,598.2 470.2,669.2" fill="#aa8650" stroke="#aa8650" stroke-width="0.5"/>
<polygon points="892.9,670.4 891.5,666.8 890.2,663.3 888.8,659.7 887.3,656.2 885.7,652.8 884.1,649.3 882.4,645.9 880.7,642.6 878.9,639.2 877.0,635.9 875.1,632.7 873.1,629.4 871.1,626.2 869.0,623.1 866.9,620.0 864.7,616.9 862.4,613.9 860.1,610.9 857.8,607.9 855.4,605.0 852.9,602.2 850.4,599.4 847.9,596.6 845.3,593.9 842.6,591.2 839.9,588.6 837.2,586.1 836.8,586.4 839.5,588.9 842.2,591.5 844.8,594.2 847.4,596.9 850.0,599.6 852.5,602.4 854.9,605.3 857.3,608.2 859.7,611.1 862.0,614.1 864.2,617.1 866.4,620.2 868.5,623.3 870.6,626.4 872.6,629.6 874.6,632.8 876.5,636.1 878.3,639.4 880.1,642.7 881.9,646.1 883.5,649.4 885.2,652.9 886.7,656.3 888.2,659.8 889.6,663.3 891.0,666.9 892.3,670.4" fill="#8c6c3e" stroke="#8c6c3e" stroke-width="0.5"/>
<polygon points="892.4,596.1 894.4,668.8 893.6,668.9 891.6,596.5" fill="#967442" stroke="#967442" stroke-width="0.5"/>
<polygon points="680.2,546.0 455.6,607.7 453.1,597.5 677.4,535.8" fill="#9a7844" stroke="#9a7844" stroke-width="0.5"/>
<polygon points="680.2,546.0 455.6,607.7 453.1,597.5 677.4,535.8" fill="url(#spk)" fill-opacity="0.50"/>
<polygon points="677.5,546.0 908.6,606.3 911.1,595.9 680.2,535.8" fill="#9a7844" stroke="#9a7844" stroke-width="0.5"/>
<polygon points="677.5,546.0 908.6,606.3 911.1,595.9 680.2,535.8" fill="url(#spk)" fill-opacity="0.50"/>
<polygon points="469.2,698.1 469.7,669.2 471.4,669.3 470.9,698.0" fill="#69685f" stroke="#69685f" stroke-width="0.5"/>
<polygon points="893.7,668.9 894.5,698.4 893.1,698.3 892.3,669.0" fill="#5c5b53" stroke="#5c5b53" stroke-width="0.5"/>
<polygon points="461.2,667.4 462.5,663.7 463.9,660.1 465.3,656.4 466.8,652.8 468.3,649.2 469.9,645.7 471.6,642.2 473.3,638.7 475.1,635.2 477.0,631.8 478.9,628.4 480.9,625.0 482.9,621.7 485.0,618.5 487.2,615.2 489.4,612.0 491.6,608.9 494.0,605.8 496.3,602.7 498.8,599.7 501.2,596.7 503.8,593.8 506.3,590.9 509.0,588.1 511.7,585.3 514.4,582.6 517.2,579.9 524.1,587.3 521.5,589.9 518.9,592.5 516.3,595.1 513.8,597.8 511.4,600.6 508.9,603.3 506.6,606.2 504.3,609.0 502.0,612.0 499.8,614.9 497.7,617.9 495.6,621.0 493.5,624.0 491.5,627.2 489.6,630.3 487.7,633.5 485.9,636.7 484.1,640.0 482.4,643.3 480.8,646.6 479.2,649.9 477.6,653.3 476.2,656.7 474.8,660.2 473.4,663.7 472.1,667.1 470.9,670.7" fill="#9a7844" stroke="#9a7844" stroke-width="0.5"/>
<polygon points="461.2,667.4 462.5,663.7 463.9,660.1 465.3,656.4 466.8,652.8 468.3,649.2 469.9,645.7 471.6,642.2 473.3,638.7 475.1,635.2 477.0,631.8 478.9,628.4 480.9,625.0 482.9,621.7 485.0,618.5 487.2,615.2 489.4,612.0 491.6,608.9 494.0,605.8 496.3,602.7 498.8,599.7 501.2,596.7 503.8,593.8 506.3,590.9 509.0,588.1 511.7,585.3 514.4,582.6 517.2,579.9 524.1,587.3 521.5,589.9 518.9,592.5 516.3,595.1 513.8,597.8 511.4,600.6 508.9,603.3 506.6,606.2 504.3,609.0 502.0,612.0 499.8,614.9 497.7,617.9 495.6,621.0 493.5,624.0 491.5,627.2 489.6,630.3 487.7,633.5 485.9,636.7 484.1,640.0 482.4,643.3 480.8,646.6 479.2,649.9 477.6,653.3 476.2,656.7 474.8,660.2 473.4,663.7 472.1,667.1 470.9,670.7" fill="url(#spk)" fill-opacity="0.65"/>
<polygon points="902.9,667.1 901.6,663.3 900.1,659.6 898.6,655.9 897.0,652.2 895.4,648.6 893.7,645.0 891.9,641.4 890.1,637.8 888.2,634.3 886.2,630.9 884.2,627.4 882.1,624.0 880.0,620.7 877.8,617.4 875.5,614.1 873.2,610.9 870.9,607.7 868.4,604.5 865.9,601.4 863.4,598.4 860.8,595.4 858.2,592.4 855.5,589.5 852.8,586.7 850.0,583.9 847.1,581.2 844.3,578.5 837.2,586.1 839.9,588.6 842.6,591.2 845.3,593.9 847.9,596.6 850.4,599.4 852.9,602.2 855.4,605.0 857.8,607.9 860.1,610.9 862.4,613.9 864.7,616.9 866.9,620.0 869.0,623.1 871.1,626.2 873.1,629.4 875.1,632.7 877.0,635.9 878.9,639.2 880.7,642.6 882.4,645.9 884.1,649.3 885.7,652.8 887.3,656.2 888.8,659.7 890.2,663.3 891.5,666.8 892.9,670.4" fill="#9a7844" stroke="#9a7844" stroke-width="0.5"/>
<polygon points="902.9,667.1 901.6,663.3 900.1,659.6 898.6,655.9 897.0,652.2 895.4,648.6 893.7,645.0 891.9,641.4 890.1,637.8 888.2,634.3 886.2,630.9 884.2,627.4 882.1,624.0 880.0,620.7 877.8,617.4 875.5,614.1 873.2,610.9 870.9,607.7 868.4,604.5 865.9,601.4 863.4,598.4 860.8,595.4 858.2,592.4 855.5,589.5 852.8,586.7 850.0,583.9 847.1,581.2 844.3,578.5 837.2,586.1 839.9,588.6 842.6,591.2 845.3,593.9 847.9,596.6 850.4,599.4 852.9,602.2 855.4,605.0 857.8,607.9 860.1,610.9 862.4,613.9 864.7,616.9 866.9,620.0 869.0,623.1 871.1,626.2 873.1,629.4 875.1,632.7 877.0,635.9 878.9,639.2 880.7,642.6 882.4,645.9 884.1,649.3 885.7,652.8 887.3,656.2 888.8,659.7 890.2,663.3 891.5,666.8 892.9,670.4" fill="url(#spk)" fill-opacity="0.65"/>
<polyline points="470.9,670.7 472.1,667.1 473.4,663.7 474.8,660.2 476.2,656.7 477.6,653.3 479.2,649.9 480.8,646.6 482.4,643.3 484.1,640.0 485.9,636.7 487.7,633.5 489.6,630.3 491.5,627.2 493.5,624.0 495.6,621.0 497.7,617.9 499.8,614.9 502.0,612.0 504.3,609.0 506.6,606.2 508.9,603.3 511.4,600.6 513.8,597.8 516.3,595.1 518.9,592.5 521.5,589.9 524.1,587.3" fill="none" stroke="#cfcabd" stroke-width="0.50" stroke-opacity="0.70"/>
<polyline points="461.2,667.4 462.5,663.7 463.9,660.1 465.3,656.4 466.8,652.8 468.3,649.2 469.9,645.7 471.6,642.2 473.3,638.7 475.1,635.2 477.0,631.8 478.9,628.4 480.9,625.0 482.9,621.7 485.0,618.5 487.2,615.2 489.4,612.0 491.6,608.9 494.0,605.8 496.3,602.7 498.8,599.7 501.2,596.7 503.8,593.8 506.3,590.9 509.0,588.1 511.7,585.3 514.4,582.6 517.2,579.9" fill="none" stroke="#cfcabd" stroke-width="0.40" stroke-opacity="0.60"/>
<polyline points="892.9,670.4 891.5,666.8 890.2,663.3 888.8,659.7 887.3,656.2 885.7,652.8 884.1,649.3 882.4,645.9 880.7,642.6 878.9,639.2 877.0,635.9 875.1,632.7 873.1,629.4 871.1,626.2 869.0,623.1 866.9,620.0 864.7,616.9 862.4,613.9 860.1,610.9 857.8,607.9 855.4,605.0 852.9,602.2 850.4,599.4 847.9,596.6 845.3,593.9 842.6,591.2 839.9,588.6 837.2,586.1" fill="none" stroke="#cfcabd" stroke-width="0.50" stroke-opacity="0.70"/>
<polyline points="902.9,667.1 901.6,663.3 900.1,659.6 898.6,655.9 897.0,652.2 895.4,648.6 893.7,645.0 891.9,641.4 890.1,637.8 888.2,634.3 886.2,630.9 884.2,627.4 882.1,624.0 880.0,620.7 877.8,617.4 875.5,614.1 873.2,610.9 870.9,607.7 868.4,604.5 865.9,601.4 863.4,598.4 860.8,595.4 858.2,592.4 855.5,589.5 852.8,586.7 850.0,583.9 847.1,581.2 844.3,578.5" fill="none" stroke="#cfcabd" stroke-width="0.40" stroke-opacity="0.60"/>
<polygon points="460.5,698.1 469.2,698.1 469.7,669.2 461.1,669.2" fill="#808076" stroke="#808076" stroke-width="0.5"/>
<polygon points="894.5,698.4 903.5,698.4 902.6,668.8 893.7,668.9" fill="#808076" stroke="#808076" stroke-width="0.5"/>
<polygon points="463.4,669.1 469.1,669.1 470.5,597.8 464.8,597.9" fill="#ba9458" stroke="#ba9458" stroke-width="0.5"/>
<polyline points="467.6,597.9 467.2,593.5" fill="none" stroke="#2a1c08" stroke-width="0.50" stroke-opacity="0.80"/>
<polygon points="894.4,668.8 900.4,668.8 898.3,596.1 892.4,596.1" fill="#ba9458" stroke="#ba9458" stroke-width="0.5"/>
<polyline points="895.3,596.1 895.7,591.7" fill="none" stroke="#2a1c08" stroke-width="0.50" stroke-opacity="0.80"/>
<polygon points="437.6,590.4 438.6,590.4 465.5,599.7 464.6,599.7" fill="#b29868" stroke="#b29868" stroke-width="0.5"/>
<polygon points="438.6,590.4 465.5,599.7 465.6,596.1 438.7,586.4" fill="#e7c47e" stroke="#e7c47e" stroke-width="0.5"/>
<polygon points="453.1,586.1 454.1,586.1 479.5,595.8 478.6,595.8" fill="#b29868" stroke="#b29868" stroke-width="0.5"/>
<polygon points="454.1,586.1 479.5,595.8 479.5,592.2 454.2,582.1" fill="#e7c47e" stroke="#e7c47e" stroke-width="0.5"/>
<polygon points="468.7,581.9 469.6,581.9 493.4,592.0 492.6,592.0" fill="#b29868" stroke="#b29868" stroke-width="0.5"/>
<polygon points="469.6,581.9 493.4,592.0 493.5,588.4 469.7,577.9" fill="#e7c47e" stroke="#e7c47e" stroke-width="0.5"/>
<polygon points="484.2,577.6 485.1,577.6 507.4,588.1 506.6,588.1" fill="#b29868" stroke="#b29868" stroke-width="0.5"/>
<polygon points="485.1,577.6 507.4,588.1 507.5,584.5 485.2,573.6" fill="#e7c47e" stroke="#e7c47e" stroke-width="0.5"/>
<polygon points="494.8,574.7 495.8,574.7 517.0,585.5 516.1,585.5" fill="#b29868" stroke="#b29868" stroke-width="0.5"/>
<polygon points="495.8,574.7 517.0,585.5 517.1,581.9 495.8,570.7" fill="#e7c47e" stroke="#e7c47e" stroke-width="0.5"/>
<polygon points="499.7,573.3 500.7,573.3 521.4,584.3 520.6,584.3" fill="#b29868" stroke="#b29868" stroke-width="0.5"/>
<polygon points="500.7,573.3 521.4,584.3 521.5,580.7 500.7,569.3" fill="#e7c47e" stroke="#e7c47e" stroke-width="0.5"/>
<polygon points="918.4,588.2 919.4,588.2 898.1,597.9 897.2,597.9" fill="#d6c8a8" stroke="#d6c8a8" stroke-width="0.5"/>
<polygon points="918.4,588.2 897.2,597.9 897.1,594.2 918.2,584.1" fill="#c0a064" stroke="#c0a064" stroke-width="0.5"/>
<polygon points="515.3,569.0 516.2,569.0 535.4,580.4 534.6,580.5" fill="#b29868" stroke="#b29868" stroke-width="0.5"/>
<polygon points="516.2,569.0 535.4,580.4 535.5,576.8 516.3,565.0" fill="#e7c47e" stroke="#e7c47e" stroke-width="0.5"/>
<polygon points="902.1,584.0 903.1,584.0 883.5,594.1 882.6,594.1" fill="#d6c8a8" stroke="#d6c8a8" stroke-width="0.5"/>
<polygon points="902.1,584.0 882.6,594.1 882.5,590.4 902.0,579.9" fill="#c0a064" stroke="#c0a064" stroke-width="0.5"/>
<polygon points="530.8,564.8 531.8,564.8 549.5,576.6 548.6,576.6" fill="#b29868" stroke="#b29868" stroke-width="0.5"/>
<polygon points="531.8,564.8 549.5,576.6 549.5,573.0 531.8,560.8" fill="#e7c47e" stroke="#e7c47e" stroke-width="0.5"/>
<polygon points="885.9,579.8 886.9,579.8 868.9,590.3 868.0,590.3" fill="#d6c8a8" stroke="#d6c8a8" stroke-width="0.5"/>
<polygon points="885.9,579.8 868.0,590.3 868.0,586.6 885.8,575.7" fill="#c0a064" stroke="#c0a064" stroke-width="0.5"/>
<polygon points="546.4,560.5 547.3,560.5 563.5,572.7 562.6,572.7" fill="#b29868" stroke="#b29868" stroke-width="0.5"/>
<polygon points="547.3,560.5 563.5,572.7 563.5,569.1 547.4,556.5" fill="#e7c47e" stroke="#e7c47e" stroke-width="0.5"/>
<polygon points="869.7,575.6 870.7,575.6 854.4,586.5 853.5,586.5" fill="#d6c8a8" stroke="#d6c8a8" stroke-width="0.5"/>
<polygon points="869.7,575.6 853.5,586.5 853.4,582.9 869.6,571.5" fill="#c0a064" stroke="#c0a064" stroke-width="0.5"/>
<polygon points="858.7,572.7 859.7,572.7 844.5,584.0 843.6,584.0" fill="#d6c8a8" stroke="#d6c8a8" stroke-width="0.5"/>
<polygon points="858.7,572.7 843.6,584.0 843.5,580.3 858.6,568.7" fill="#c0a064" stroke="#c0a064" stroke-width="0.5"/>
<polygon points="561.9,556.2 562.9,556.2 577.5,568.9 576.6,568.9" fill="#b29868" stroke="#b29868" stroke-width="0.5"/>
<polygon points="562.9,556.2 577.5,568.9 577.5,565.3 562.9,552.2" fill="#e7c47e" stroke="#e7c47e" stroke-width="0.5"/>
<polygon points="853.6,571.4 854.6,571.4 839.9,582.8 839.0,582.8" fill="#d6c8a8" stroke="#d6c8a8" stroke-width="0.5"/>
<polygon points="853.6,571.4 839.0,582.8 839.0,579.1 853.5,567.3" fill="#c0a064" stroke="#c0a064" stroke-width="0.5"/>
<polygon points="577.5,551.9 578.5,551.9 591.5,565.0 590.7,565.0" fill="#b29868" stroke="#b29868" stroke-width="0.5"/>
<polygon points="578.5,551.9 591.5,565.0 591.6,561.4 578.5,547.9" fill="#e7c47e" stroke="#e7c47e" stroke-width="0.5"/>
<polygon points="837.5,567.3 838.5,567.2 825.5,579.0 824.6,579.0" fill="#d6c8a8" stroke="#d6c8a8" stroke-width="0.5"/>
<polygon points="837.5,567.3 824.6,579.0 824.5,575.3 837.4,563.2" fill="#c0a064" stroke="#c0a064" stroke-width="0.5"/>
<polygon points="593.1,547.6 594.1,547.6 605.6,561.2 604.7,561.2" fill="#b29868" stroke="#b29868" stroke-width="0.5"/>
<polygon points="594.1,547.6 605.6,561.2 605.6,557.6 594.1,543.6" fill="#e7c47e" stroke="#e7c47e" stroke-width="0.5"/>
<polygon points="821.4,563.1 822.4,563.1 811.1,575.2 810.2,575.2" fill="#d6c8a8" stroke="#d6c8a8" stroke-width="0.5"/>
<polygon points="821.4,563.1 810.2,575.2 810.1,571.6 821.3,559.0" fill="#c0a064" stroke="#c0a064" stroke-width="0.5"/>
<polygon points="608.7,543.3 609.7,543.3 619.6,557.3 618.7,557.3" fill="#b29868" stroke="#b29868" stroke-width="0.5"/>
<polygon points="609.7,543.3 619.6,557.3 619.6,553.7 609.7,539.3" fill="#e7c47e" stroke="#e7c47e" stroke-width="0.5"/>
<polygon points="805.4,558.9 806.4,558.9 796.7,571.5 795.8,571.5" fill="#d6c8a8" stroke="#d6c8a8" stroke-width="0.5"/>
<polygon points="805.4,558.9 795.8,571.5 795.7,567.8 805.3,554.9" fill="#c0a064" stroke="#c0a064" stroke-width="0.5"/>
<polygon points="624.3,539.0 625.3,539.0 633.7,553.4 632.8,553.5" fill="#b29868" stroke="#b29868" stroke-width="0.5"/>
<polygon points="625.3,539.0 633.7,553.4 633.7,549.8 625.3,535.0" fill="#e7c47e" stroke="#e7c47e" stroke-width="0.5"/>
<polygon points="789.4,554.8 790.4,554.8 782.3,567.8 781.4,567.8" fill="#d6c8a8" stroke="#d6c8a8" stroke-width="0.5"/>
<polygon points="789.4,554.8 781.4,567.8 781.4,564.1 789.4,550.7" fill="#c0a064" stroke="#c0a064" stroke-width="0.5"/>
<polygon points="639.9,534.7 640.9,534.7 647.7,549.6 646.9,549.6" fill="#b29868" stroke="#b29868" stroke-width="0.5"/>
<polygon points="640.9,534.7 647.7,549.6 647.7,546.0 640.9,530.7" fill="#e7c47e" stroke="#e7c47e" stroke-width="0.5"/>
<polygon points="773.5,550.7 774.5,550.7 768.0,564.0 767.1,564.0" fill="#d6c8a8" stroke="#d6c8a8" stroke-width="0.5"/>
<polygon points="773.5,550.7 767.1,564.0 767.0,560.4 773.4,546.6" fill="#c0a064" stroke="#c0a064" stroke-width="0.5"/>
<polygon points="655.6,530.4 656.5,530.4 661.8,545.7 660.9,545.7" fill="#b29868" stroke="#b29868" stroke-width="0.5"/>
<polygon points="656.5,530.4 661.8,545.7 661.8,542.1 656.5,526.4" fill="#e7c47e" stroke="#e7c47e" stroke-width="0.5"/>
<polygon points="757.6,546.5 758.6,546.5 753.7,560.3 752.8,560.3" fill="#d6c8a8" stroke="#d6c8a8" stroke-width="0.5"/>
<polygon points="757.6,546.5 752.8,560.3 752.7,556.7 757.6,542.5" fill="#c0a064" stroke="#c0a064" stroke-width="0.5"/>
<polygon points="671.2,526.1 672.2,526.1 675.9,541.8 675.0,541.9" fill="#b29868" stroke="#b29868" stroke-width="0.5"/>
<polygon points="672.2,526.1 675.9,541.8 675.9,538.2 672.1,522.1" fill="#e7c47e" stroke="#e7c47e" stroke-width="0.5"/>
<polygon points="741.7,542.4 742.7,542.4 739.4,556.6 738.5,556.6" fill="#d6c8a8" stroke="#d6c8a8" stroke-width="0.5"/>
<polygon points="741.7,542.4 738.5,556.6 738.5,553.0 741.7,538.4" fill="#c0a064" stroke="#c0a064" stroke-width="0.5"/>
<polygon points="674.9,525.1 675.9,525.1 679.3,540.9 678.4,540.9" fill="#b29868" stroke="#b29868" stroke-width="0.5"/>
<polygon points="675.9,525.1 679.3,540.9 679.3,537.3 675.9,521.1" fill="#e7c47e" stroke="#e7c47e" stroke-width="0.5"/>
<polygon points="678.7,526.1 679.7,526.1 682.7,541.8 681.8,541.8" fill="#b29868" stroke="#b29868" stroke-width="0.5"/>
<polygon points="679.7,526.1 682.7,541.8 682.6,538.2 679.7,522.1" fill="#e7c47e" stroke="#e7c47e" stroke-width="0.5"/>
<polygon points="725.9,538.3 726.9,538.3 725.2,552.9 724.3,552.9" fill="#d6c8a8" stroke="#d6c8a8" stroke-width="0.5"/>
<polygon points="725.9,538.3 724.3,552.9 724.3,549.3 725.9,534.3" fill="#c0a064" stroke="#c0a064" stroke-width="0.5"/>
<polygon points="694.4,530.2 695.4,530.1 696.8,545.5 695.9,545.5" fill="#b29868" stroke="#b29868" stroke-width="0.5"/>
<polygon points="695.4,530.1 696.8,545.5 696.8,541.9 695.4,526.1" fill="#e7c47e" stroke="#e7c47e" stroke-width="0.5"/>
<polygon points="710.2,534.2 711.1,534.2 711.0,549.2 710.1,549.2" fill="#d6c8a8" stroke="#d6c8a8" stroke-width="0.5"/>
<polygon points="710.2,534.2 710.1,549.2 710.1,545.6 710.1,530.2" fill="#c0a064" stroke="#c0a064" stroke-width="0.5"/>
<polygon points="676.9,530.3 426.9,599.1 427.6,599.3 677.0,530.7" fill="#8c6c3e" stroke="#8c6c3e" stroke-width="0.5"/>
<polygon points="673.8,530.3 931.6,597.3 931.1,597.5 673.9,530.7" fill="#8c6c3e" stroke="#8c6c3e" stroke-width="0.5"/>
<polygon points="443.7,669.2 445.1,665.2 446.5,661.4 448.0,657.5 449.6,653.7 451.3,649.9 453.0,646.1 454.8,642.4 456.6,638.7 458.5,635.0 460.5,631.4 462.5,627.8 464.6,624.2 466.8,620.7 469.0,617.3 471.3,613.8 473.6,610.4 476.0,607.1 478.5,603.8 481.0,600.6 483.6,597.4 486.2,594.2 488.9,591.1 491.6,588.1 494.4,585.1 497.3,582.1 500.2,579.2 503.1,576.4 503.8,576.8 500.9,579.6 498.0,582.5 495.2,585.4 492.4,588.4 489.7,591.4 487.0,594.5 484.4,597.7 481.8,600.9 479.3,604.1 476.8,607.4 474.4,610.7 472.1,614.1 469.8,617.5 467.6,620.9 465.4,624.4 463.4,628.0 461.3,631.5 459.4,635.2 457.5,638.8 455.6,642.5 453.8,646.2 452.1,650.0 450.5,653.8 448.9,657.6 447.4,661.4 446.0,665.3 444.6,669.2" fill="#9c7a46" stroke="#9c7a46" stroke-width="0.5"/>
<polygon points="441.7,667.4 443.5,588.1 444.7,588.6 443.0,667.5" fill="#aa8650" stroke="#aa8650" stroke-width="0.5"/>
<polygon points="914.2,668.8 912.8,664.8 911.2,660.9 909.6,656.9 907.9,653.0 906.2,649.2 904.4,645.3 902.5,641.5 900.5,637.8 898.5,634.0 896.4,630.4 894.3,626.7 892.1,623.1 889.8,619.6 887.5,616.0 885.1,612.6 882.6,609.1 880.1,605.8 877.5,602.4 874.9,599.2 872.2,595.9 869.5,592.8 866.7,589.6 863.8,586.6 860.9,583.5 857.9,580.6 854.9,577.7 851.9,574.8 851.4,575.2 854.4,578.0 857.4,580.9 860.4,583.9 863.3,586.9 866.1,590.0 868.9,593.1 871.6,596.2 874.3,599.5 876.9,602.7 879.5,606.0 882.0,609.4 884.5,612.8 886.9,616.3 889.2,619.8 891.5,623.3 893.7,626.9 895.8,630.5 897.9,634.2 899.9,637.9 901.8,641.7 903.7,645.5 905.5,649.3 907.3,653.1 908.9,657.0 910.5,661.0 912.1,664.9 913.5,668.9" fill="#8c6c3e" stroke="#8c6c3e" stroke-width="0.5"/>
<polygon points="913.5,585.9 916.0,667.1 915.0,667.1 912.5,586.4" fill="#967442" stroke="#967442" stroke-width="0.5"/>
<polygon points="676.9,530.3 426.9,599.1 424.2,587.8 673.8,519.0" fill="#9a7844" stroke="#9a7844" stroke-width="0.5"/>
<polygon points="676.9,530.3 426.9,599.1 424.2,587.8 673.8,519.0" fill="url(#spk)" fill-opacity="0.50"/>
<polygon points="673.8,530.3 931.6,597.3 934.4,585.7 676.9,519.0" fill="#9a7844" stroke="#9a7844" stroke-width="0.5"/>
<polygon points="673.8,530.3 931.6,597.3 934.4,585.7 676.9,519.0" fill="url(#spk)" fill-opacity="0.50"/>
<polygon points="441.6,699.7 442.3,667.5 444.4,667.6 443.7,699.6" fill="#69685f" stroke="#69685f" stroke-width="0.5"/>
<polygon points="915.2,667.1 916.2,700.1 914.5,700.0 913.5,667.2" fill="#5c5b53" stroke="#5c5b53" stroke-width="0.5"/>
<polygon points="432.9,665.6 434.4,661.5 435.9,657.4 437.5,653.3 439.2,649.3 440.9,645.3 442.7,641.3 444.6,637.4 446.5,633.5 448.5,629.7 450.6,625.9 452.7,622.1 454.9,618.4 457.2,614.7 459.6,611.1 462.0,607.5 464.4,603.9 467.0,600.4 469.5,596.9 472.2,593.5 474.9,590.2 477.7,586.9 480.5,583.6 483.4,580.4 486.3,577.3 489.3,574.2 492.3,571.1 495.4,568.2 503.1,576.4 500.2,579.2 497.3,582.1 494.4,585.1 491.6,588.1 488.9,591.1 486.2,594.2 483.6,597.4 481.0,600.6 478.5,603.8 476.0,607.1 473.6,610.4 471.3,613.8 469.0,617.3 466.8,620.7 464.6,624.2 462.5,627.8 460.5,631.4 458.5,635.0 456.6,638.7 454.8,642.4 453.0,646.1 451.3,649.9 449.6,653.7 448.0,657.5 446.5,661.4 445.1,665.2 443.7,669.2" fill="#9a7844" stroke="#9a7844" stroke-width="0.5"/>
<polygon points="432.9,665.6 434.4,661.5 435.9,657.4 437.5,653.3 439.2,649.3 440.9,645.3 442.7,641.3 444.6,637.4 446.5,633.5 448.5,629.7 450.6,625.9 452.7,622.1 454.9,618.4 457.2,614.7 459.6,611.1 462.0,607.5 464.4,603.9 467.0,600.4 469.5,596.9 472.2,593.5 474.9,590.2 477.7,586.9 480.5,583.6 483.4,580.4 486.3,577.3 489.3,574.2 492.3,571.1 495.4,568.2 503.1,576.4 500.2,579.2 497.3,582.1 494.4,585.1 491.6,588.1 488.9,591.1 486.2,594.2 483.6,597.4 481.0,600.6 478.5,603.8 476.0,607.1 473.6,610.4 471.3,613.8 469.0,617.3 466.8,620.7 464.6,624.2 462.5,627.8 460.5,631.4 458.5,635.0 456.6,638.7 454.8,642.4 453.0,646.1 451.3,649.9 449.6,653.7 448.0,657.5 446.5,661.4 445.1,665.2 443.7,669.2" fill="url(#spk)" fill-opacity="0.65"/>
<polygon points="925.5,665.1 923.9,660.9 922.3,656.8 920.6,652.6 918.8,648.5 917.0,644.5 915.1,640.4 913.1,636.4 911.0,632.5 908.9,628.6 906.7,624.7 904.5,620.9 902.1,617.1 899.7,613.4 897.3,609.7 894.7,606.0 892.2,602.4 889.5,598.9 886.8,595.4 884.0,591.9 881.2,588.5 878.3,585.2 875.3,581.9 872.3,578.7 869.3,575.5 866.2,572.4 863.0,569.4 859.8,566.4 851.9,574.8 854.9,577.7 857.9,580.6 860.9,583.5 863.8,586.6 866.7,589.6 869.5,592.8 872.2,595.9 874.9,599.2 877.5,602.4 880.1,605.8 882.6,609.1 885.1,612.6 887.5,616.0 889.8,619.6 892.1,623.1 894.3,626.7 896.4,630.4 898.5,634.0 900.5,637.8 902.5,641.5 904.4,645.3 906.2,649.2 907.9,653.0 909.6,656.9 911.2,660.9 912.8,664.8 914.2,668.8" fill="#9a7844" stroke="#9a7844" stroke-width="0.5"/>
<polygon points="925.5,665.1 923.9,660.9 922.3,656.8 920.6,652.6 918.8,648.5 917.0,644.5 915.1,640.4 913.1,636.4 911.0,632.5 908.9,628.6 906.7,624.7 904.5,620.9 902.1,617.1 899.7,613.4 897.3,609.7 894.7,606.0 892.2,602.4 889.5,598.9 886.8,595.4 884.0,591.9 881.2,588.5 878.3,585.2 875.3,581.9 872.3,578.7 869.3,575.5 866.2,572.4 863.0,569.4 859.8,566.4 851.9,574.8 854.9,577.7 857.9,580.6 860.9,583.5 863.8,586.6 866.7,589.6 869.5,592.8 872.2,595.9 874.9,599.2 877.5,602.4 880.1,605.8 882.6,609.1 885.1,612.6 887.5,616.0 889.8,619.6 892.1,623.1 894.3,626.7 896.4,630.4 898.5,634.0 900.5,637.8 902.5,641.5 904.4,645.3 906.2,649.2 907.9,653.0 909.6,656.9 911.2,660.9 912.8,664.8 914.2,668.8" fill="url(#spk)" fill-opacity="0.65"/>
<polyline points="443.7,669.2 445.1,665.2 446.5,661.4 448.0,657.5 449.6,653.7 451.3,649.9 453.0,646.1 454.8,642.4 456.6,638.7 458.5,635.0 460.5,631.4 462.5,627.8 464.6,624.2 466.8,620.7 469.0,617.3 471.3,613.8 473.6,610.4 476.0,607.1 478.5,603.8 481.0,600.6 483.6,597.4 486.2,594.2 488.9,591.1 491.6,588.1 494.4,585.1 497.3,582.1 500.2,579.2 503.1,576.4" fill="none" stroke="#cfcabd" stroke-width="0.50" stroke-opacity="0.70"/>
<polyline points="432.9,665.6 434.4,661.5 435.9,657.4 437.5,653.3 439.2,649.3 440.9,645.3 442.7,641.3 444.6,637.4 446.5,633.5 448.5,629.7 450.6,625.9 452.7,622.1 454.9,618.4 457.2,614.7 459.6,611.1 462.0,607.5 464.4,603.9 467.0,600.4 469.5,596.9 472.2,593.5 474.9,590.2 477.7,586.9 480.5,583.6 483.4,580.4 486.3,577.3 489.3,574.2 492.3,571.1 495.4,568.2" fill="none" stroke="#cfcabd" stroke-width="0.40" stroke-opacity="0.60"/>
<polyline points="914.2,668.8 912.8,664.8 911.2,660.9 909.6,656.9 907.9,653.0 906.2,649.2 904.4,645.3 902.5,641.5 900.5,637.8 898.5,634.0 896.4,630.4 894.3,626.7 892.1,623.1 889.8,619.6 887.5,616.0 885.1,612.6 882.6,609.1 880.1,605.8 877.5,602.4 874.9,599.2 872.2,595.9 869.5,592.8 866.7,589.6 863.8,586.6 860.9,583.5 857.9,580.6 854.9,577.7 851.9,574.8" fill="none" stroke="#cfcabd" stroke-width="0.50" stroke-opacity="0.70"/>
<polyline points="925.5,665.1 923.9,660.9 922.3,656.8 920.6,652.6 918.8,648.5 917.0,644.5 915.1,640.4 913.1,636.4 911.0,632.5 908.9,628.6 906.7,624.7 904.5,620.9 902.1,617.1 899.7,613.4 897.3,609.7 894.7,606.0 892.2,602.4 889.5,598.9 886.8,595.4 884.0,591.9 881.2,588.5 878.3,585.2 875.3,581.9 872.3,578.7 869.3,575.5 866.2,572.4 863.0,569.4 859.8,566.4" fill="none" stroke="#cfcabd" stroke-width="0.40" stroke-opacity="0.60"/>
<polygon points="432.0,699.7 441.6,699.7 442.3,667.5 432.7,667.5" fill="#808076" stroke="#808076" stroke-width="0.5"/>
<polygon points="916.2,700.1 926.3,700.1 925.2,667.1 915.2,667.1" fill="#808076" stroke="#808076" stroke-width="0.5"/>
<polygon points="435.4,667.4 441.7,667.4 443.5,588.1 437.1,588.2" fill="#ba9458" stroke="#ba9458" stroke-width="0.5"/>
<polyline points="440.3,588.1 439.8,583.3" fill="none" stroke="#2a1c08" stroke-width="0.50" stroke-opacity="0.80"/>
<polygon points="916.0,667.1 922.7,667.0 920.1,585.9 913.5,585.9" fill="#ba9458" stroke="#ba9458" stroke-width="0.5"/>
<polyline points="916.8,585.9 917.2,581.1" fill="none" stroke="#2a1c08" stroke-width="0.50" stroke-opacity="0.80"/>
<polygon points="403.1,578.5 404.2,578.5 437.9,590.2 437.0,590.2" fill="#b29868" stroke="#b29868" stroke-width="0.5"/>
<polygon points="404.2,578.5 437.9,590.2 438.0,586.1 404.3,574.0" fill="#e7c47e" stroke="#e7c47e" stroke-width="0.5"/>
<polygon points="420.6,573.7 421.6,573.7 453.5,585.9 452.5,585.9" fill="#b29868" stroke="#b29868" stroke-width="0.5"/>
<polygon points="421.6,573.7 453.5,585.9 453.5,581.9 421.8,569.2" fill="#e7c47e" stroke="#e7c47e" stroke-width="0.5"/>
<polygon points="438.0,568.9 439.1,568.9 469.0,581.6 468.1,581.6" fill="#b29868" stroke="#b29868" stroke-width="0.5"/>
<polygon points="439.1,568.9 469.0,581.6 469.1,577.6 439.2,564.4" fill="#e7c47e" stroke="#e7c47e" stroke-width="0.5"/>
<polygon points="455.5,564.1 456.6,564.1 484.6,577.3 483.6,577.3" fill="#b29868" stroke="#b29868" stroke-width="0.5"/>
<polygon points="456.6,564.1 484.6,577.3 484.7,573.3 456.7,559.6" fill="#e7c47e" stroke="#e7c47e" stroke-width="0.5"/>
<polygon points="467.5,560.8 468.6,560.8 495.2,574.4 494.3,574.4" fill="#b29868" stroke="#b29868" stroke-width="0.5"/>
<polygon points="468.6,560.8 495.2,574.4 495.3,570.4 468.7,556.3" fill="#e7c47e" stroke="#e7c47e" stroke-width="0.5"/>
<polygon points="473.0,559.3 474.1,559.3 500.2,573.0 499.2,573.0" fill="#b29868" stroke="#b29868" stroke-width="0.5"/>
<polygon points="474.1,559.3 500.2,573.0 500.2,569.0 474.2,554.8" fill="#e7c47e" stroke="#e7c47e" stroke-width="0.5"/>
<polygon points="945.6,575.8 946.7,575.8 919.9,588.0 918.9,588.0" fill="#d6c8a8" stroke="#d6c8a8" stroke-width="0.5"/>
<polygon points="945.6,575.8 918.9,588.0 918.8,583.9 945.4,571.1" fill="#c0a064" stroke="#c0a064" stroke-width="0.5"/>
<polygon points="490.6,554.4 491.6,554.4 515.7,568.8 514.8,568.8" fill="#b29868" stroke="#b29868" stroke-width="0.5"/>
<polygon points="491.6,554.4 515.7,568.8 515.8,564.7 491.7,549.9" fill="#e7c47e" stroke="#e7c47e" stroke-width="0.5"/>
<polygon points="927.2,571.0 928.3,571.0 903.6,583.7 902.6,583.8" fill="#d6c8a8" stroke="#d6c8a8" stroke-width="0.5"/>
<polygon points="927.2,571.0 902.6,583.8 902.5,579.6 927.0,566.4" fill="#c0a064" stroke="#c0a064" stroke-width="0.5"/>
<polygon points="508.1,549.6 509.2,549.6 531.3,564.5 530.4,564.5" fill="#b29868" stroke="#b29868" stroke-width="0.5"/>
<polygon points="509.2,549.6 531.3,564.5 531.4,560.4 509.2,545.1" fill="#e7c47e" stroke="#e7c47e" stroke-width="0.5"/>
<polygon points="908.8,566.3 909.9,566.3 887.3,579.5 886.3,579.5" fill="#d6c8a8" stroke="#d6c8a8" stroke-width="0.5"/>
<polygon points="908.8,566.3 886.3,579.5 886.2,575.4 908.7,561.7" fill="#c0a064" stroke="#c0a064" stroke-width="0.5"/>
<polygon points="525.6,544.8 526.7,544.8 546.9,560.2 546.0,560.2" fill="#b29868" stroke="#b29868" stroke-width="0.5"/>
<polygon points="526.7,544.8 546.9,560.2 547.0,556.2 526.8,540.3" fill="#e7c47e" stroke="#e7c47e" stroke-width="0.5"/>
<polygon points="890.5,561.6 891.6,561.6 871.1,575.3 870.1,575.3" fill="#d6c8a8" stroke="#d6c8a8" stroke-width="0.5"/>
<polygon points="890.5,561.6 870.1,575.3 870.0,571.2 890.4,557.0" fill="#c0a064" stroke="#c0a064" stroke-width="0.5"/>
<polygon points="878.0,558.3 879.1,558.3 860.0,572.5 859.0,572.5" fill="#d6c8a8" stroke="#d6c8a8" stroke-width="0.5"/>
<polygon points="878.0,558.3 859.0,572.5 858.9,568.4 877.9,553.7" fill="#c0a064" stroke="#c0a064" stroke-width="0.5"/>
<polygon points="543.2,539.9 544.2,539.9 562.5,555.9 561.6,555.9" fill="#b29868" stroke="#b29868" stroke-width="0.5"/>
<polygon points="544.2,539.9 562.5,555.9 562.6,551.9 544.3,535.4" fill="#e7c47e" stroke="#e7c47e" stroke-width="0.5"/>
<polygon points="872.2,556.9 873.4,556.8 854.9,571.1 853.9,571.1" fill="#d6c8a8" stroke="#d6c8a8" stroke-width="0.5"/>
<polygon points="872.2,556.9 853.9,571.1 853.8,567.1 872.1,552.3" fill="#c0a064" stroke="#c0a064" stroke-width="0.5"/>
<polygon points="560.7,535.1 561.8,535.1 578.2,551.6 577.2,551.6" fill="#b29868" stroke="#b29868" stroke-width="0.5"/>
<polygon points="561.8,535.1 578.2,551.6 578.2,547.6 561.8,530.6" fill="#e7c47e" stroke="#e7c47e" stroke-width="0.5"/>
<polygon points="854.0,552.2 855.2,552.2 838.8,567.0 837.8,567.0" fill="#d6c8a8" stroke="#d6c8a8" stroke-width="0.5"/>
<polygon points="854.0,552.2 837.8,567.0 837.7,562.9 853.9,547.6" fill="#c0a064" stroke="#c0a064" stroke-width="0.5"/>
<polygon points="578.3,530.3 579.4,530.3 593.8,547.3 592.8,547.3" fill="#b29868" stroke="#b29868" stroke-width="0.5"/>
<polygon points="579.4,530.3 593.8,547.3 593.8,543.3 579.4,525.8" fill="#e7c47e" stroke="#e7c47e" stroke-width="0.5"/>
<polygon points="835.9,547.5 837.0,547.5 822.7,562.8 821.7,562.8" fill="#d6c8a8" stroke="#d6c8a8" stroke-width="0.5"/>
<polygon points="835.9,547.5 821.7,562.8 821.6,558.7 835.8,542.9" fill="#c0a064" stroke="#c0a064" stroke-width="0.5"/>
<polygon points="595.9,525.4 597.0,525.4 609.4,543.0 608.5,543.0" fill="#b29868" stroke="#b29868" stroke-width="0.5"/>
<polygon points="597.0,525.4 609.4,543.0 609.4,539.0 597.0,520.9" fill="#e7c47e" stroke="#e7c47e" stroke-width="0.5"/>
<polygon points="817.8,542.8 818.9,542.8 806.6,558.6 805.7,558.6" fill="#d6c8a8" stroke="#d6c8a8" stroke-width="0.5"/>
<polygon points="817.8,542.8 805.7,558.6 805.6,554.6 817.7,538.2" fill="#c0a064" stroke="#c0a064" stroke-width="0.5"/>
<polygon points="613.5,520.6 614.6,520.6 625.1,538.7 624.1,538.7" fill="#b29868" stroke="#b29868" stroke-width="0.5"/>
<polygon points="614.6,520.6 625.1,538.7 625.1,534.7 614.6,516.1" fill="#e7c47e" stroke="#e7c47e" stroke-width="0.5"/>
<polygon points="799.7,538.2 800.9,538.2 790.6,554.5 789.6,554.5" fill="#d6c8a8" stroke="#d6c8a8" stroke-width="0.5"/>
<polygon points="799.7,538.2 789.6,554.5 789.6,550.4 799.7,533.6" fill="#c0a064" stroke="#c0a064" stroke-width="0.5"/>
<polygon points="631.1,515.7 632.2,515.7 640.7,534.4 639.8,534.4" fill="#b29868" stroke="#b29868" stroke-width="0.5"/>
<polygon points="632.2,515.7 640.7,534.4 640.7,530.4 632.2,511.2" fill="#e7c47e" stroke="#e7c47e" stroke-width="0.5"/>
<polygon points="781.7,533.5 782.9,533.5 774.7,550.3 773.7,550.3" fill="#d6c8a8" stroke="#d6c8a8" stroke-width="0.5"/>
<polygon points="781.7,533.5 773.7,550.3 773.6,546.3 781.7,529.0" fill="#c0a064" stroke="#c0a064" stroke-width="0.5"/>
<polygon points="648.7,510.9 649.8,510.9 656.4,530.1 655.4,530.1" fill="#b29868" stroke="#b29868" stroke-width="0.5"/>
<polygon points="649.8,510.9 656.4,530.1 656.4,526.0 649.8,506.4" fill="#e7c47e" stroke="#e7c47e" stroke-width="0.5"/>
<polygon points="763.8,528.9 764.9,528.9 758.7,546.2 757.7,546.2" fill="#d6c8a8" stroke="#d6c8a8" stroke-width="0.5"/>
<polygon points="763.8,528.9 757.7,546.2 757.7,542.2 763.7,524.4" fill="#c0a064" stroke="#c0a064" stroke-width="0.5"/>
<polygon points="666.3,506.0 667.4,506.0 672.1,525.7 671.1,525.7" fill="#b29868" stroke="#b29868" stroke-width="0.5"/>
<polygon points="667.4,506.0 672.1,525.7 672.1,521.7 667.4,501.5" fill="#e7c47e" stroke="#e7c47e" stroke-width="0.5"/>
<polygon points="745.9,524.3 747.0,524.3 742.8,542.1 741.8,542.1" fill="#d6c8a8" stroke="#d6c8a8" stroke-width="0.5"/>
<polygon points="745.9,524.3 741.8,542.1 741.8,538.0 745.8,519.7" fill="#c0a064" stroke="#c0a064" stroke-width="0.5"/>
<polygon points="670.5,504.9 671.6,504.8 675.8,524.7 674.9,524.7" fill="#b29868" stroke="#b29868" stroke-width="0.5"/>
<polygon points="671.6,504.8 675.8,524.7 675.8,520.7 671.6,500.3" fill="#e7c47e" stroke="#e7c47e" stroke-width="0.5"/>
<polygon points="674.8,505.9 675.9,505.9 679.6,525.7 678.6,525.7" fill="#b29868" stroke="#b29868" stroke-width="0.5"/>
<polygon points="675.9,505.9 679.6,525.7 679.6,521.7 675.9,501.4" fill="#e7c47e" stroke="#e7c47e" stroke-width="0.5"/>
<polygon points="728.0,519.7 729.1,519.7 727.0,538.0 726.0,538.0" fill="#d6c8a8" stroke="#d6c8a8" stroke-width="0.5"/>
<polygon points="728.0,519.7 726.0,538.0 725.9,533.9 728.0,515.2" fill="#c0a064" stroke="#c0a064" stroke-width="0.5"/>
<polygon points="692.5,510.5 693.6,510.5 695.4,529.8 694.4,529.8" fill="#b29868" stroke="#b29868" stroke-width="0.5"/>
<polygon points="693.6,510.5 695.4,529.8 695.3,525.7 693.5,506.0" fill="#e7c47e" stroke="#e7c47e" stroke-width="0.5"/>
<polygon points="710.2,515.1 711.3,515.1 711.1,533.9 710.2,533.9" fill="#d6c8a8" stroke="#d6c8a8" stroke-width="0.5"/>
<polygon points="710.2,515.1 710.2,533.9 710.1,529.8 710.2,510.6" fill="#c0a064" stroke="#c0a064" stroke-width="0.5"/>
<polygon points="672.7,510.6 390.9,588.3 391.8,588.5 672.8,511.1" fill="#8c6c3e" stroke="#8c6c3e" stroke-width="0.5"/>
<polygon points="669.3,510.7 960.7,586.0 960.0,586.2 669.4,511.2" fill="#8c6c3e" stroke="#8c6c3e" stroke-width="0.5"/>
<polygon points="409.5,667.3 411.1,662.9 412.7,658.5 414.4,654.1 416.2,649.8 418.1,645.5 420.0,641.2 422.1,637.0 424.1,632.9 426.3,628.7 428.6,624.6 430.9,620.6 433.2,616.6 435.7,612.6 438.2,608.7 440.8,604.9 443.4,601.1 446.2,597.3 449.0,593.6 451.8,589.9 454.7,586.3 457.7,582.8 460.7,579.3 463.8,575.9 467.0,572.5 470.2,569.2 473.5,565.9 476.8,562.7 477.7,563.2 474.4,566.3 471.1,569.6 467.9,572.9 464.8,576.3 461.7,579.7 458.6,583.2 455.7,586.7 452.8,590.3 449.9,593.9 447.2,597.6 444.5,601.4 441.8,605.2 439.2,609.0 436.7,612.9 434.3,616.9 431.9,620.8 429.6,624.9 427.4,628.9 425.2,633.1 423.2,637.2 421.1,641.4 419.2,645.6 417.3,649.9 415.6,654.2 413.8,658.6 412.2,662.9 410.7,667.3" fill="#9c7a46" stroke="#9c7a46" stroke-width="0.5"/>
<polygon points="407.3,665.3 409.6,575.9 411.2,576.5 408.9,665.4" fill="#aa8650" stroke="#aa8650" stroke-width="0.5"/>
<polygon points="941.3,666.9 939.6,662.3 937.8,657.8 936.0,653.4 934.1,649.0 932.1,644.6 930.0,640.3 927.9,636.0 925.6,631.7 923.4,627.5 921.0,623.3 918.5,619.2 916.0,615.2 913.4,611.1 910.8,607.2 908.1,603.2 905.3,599.4 902.4,595.6 899.5,591.8 896.5,588.1 893.4,584.5 890.3,580.9 887.1,577.3 883.9,573.9 880.6,570.5 877.2,567.1 873.8,563.9 870.4,560.6 869.7,561.1 873.2,564.3 876.6,567.6 879.9,570.9 883.2,574.3 886.4,577.8 889.6,581.3 892.7,584.8 895.8,588.5 898.7,592.2 901.7,595.9 904.5,599.7 907.3,603.6 910.0,607.5 912.6,611.4 915.2,615.4 917.7,619.5 920.2,623.6 922.5,627.7 924.8,631.9 927.0,636.2 929.1,640.4 931.2,644.8 933.2,649.1 935.1,653.5 936.9,657.9 938.7,662.4 940.3,666.9" fill="#8c6c3e" stroke="#8c6c3e" stroke-width="0.5"/>
<polygon points="940.2,573.1 943.2,664.8 941.9,664.9 938.9,573.8" fill="#967442" stroke="#967442" stroke-width="0.5"/>
<polygon points="672.7,510.6 390.9,588.3 387.9,575.5 669.2,498.0" fill="#9e7b46" stroke="#9e7b46" stroke-width="0.5"/>
<polygon points="672.7,510.6 390.9,588.3 387.9,575.5 669.2,498.0" fill="url(#spk)" fill-opacity="0.50"/>
<polygon points="669.3,510.7 960.7,586.0 963.8,572.8 672.7,497.9" fill="#9e7b46" stroke="#9e7b46" stroke-width="0.5"/>
<polygon points="669.3,510.7 960.7,586.0 963.8,572.8 672.7,497.9" fill="url(#spk)" fill-opacity="0.50"/>
<polygon points="406.9,701.8 407.8,665.4 410.5,665.5 409.6,701.6" fill="#69685f" stroke="#69685f" stroke-width="0.5"/>
<polygon points="942.4,664.9 943.6,702.3 941.5,702.1 940.3,665.1" fill="#5c5b53" stroke="#5c5b53" stroke-width="0.5"/>
<polygon points="397.4,663.2 399.0,658.6 400.8,654.0 402.6,649.4 404.5,644.9 406.4,640.4 408.5,635.9 410.6,631.5 412.8,627.1 415.1,622.8 417.4,618.5 419.9,614.2 422.4,610.0 424.9,605.9 427.6,601.7 430.3,597.7 433.1,593.7 436.0,589.7 438.9,585.9 441.9,582.0 445.0,578.2 448.1,574.5 451.3,570.8 454.5,567.2 457.8,563.7 461.2,560.2 464.7,556.8 468.2,553.4 476.8,562.7 473.5,565.9 470.2,569.2 467.0,572.5 463.8,575.9 460.7,579.3 457.7,582.8 454.7,586.3 451.8,589.9 449.0,593.6 446.2,597.3 443.4,601.1 440.8,604.9 438.2,608.7 435.7,612.6 433.2,616.6 430.9,620.6 428.6,624.6 426.3,628.7 424.1,632.9 422.1,637.0 420.0,641.2 418.1,645.5 416.2,649.8 414.4,654.1 412.7,658.5 411.1,662.9 409.5,667.3" fill="#9e7b46" stroke="#9e7b46" stroke-width="0.5"/>
<polygon points="397.4,663.2 399.0,658.6 400.8,654.0 402.6,649.4 404.5,644.9 406.4,640.4 408.5,635.9 410.6,631.5 412.8,627.1 415.1,622.8 417.4,618.5 419.9,614.2 422.4,610.0 424.9,605.9 427.6,601.7 430.3,597.7 433.1,593.7 436.0,589.7 438.9,585.9 441.9,582.0 445.0,578.2 448.1,574.5 451.3,570.8 454.5,567.2 457.8,563.7 461.2,560.2 464.7,556.8 468.2,553.4 476.8,562.7 473.5,565.9 470.2,569.2 467.0,572.5 463.8,575.9 460.7,579.3 457.7,582.8 454.7,586.3 451.8,589.9 449.0,593.6 446.2,597.3 443.4,601.1 440.8,604.9 438.2,608.7 435.7,612.6 433.2,616.6 430.9,620.6 428.6,624.6 426.3,628.7 424.1,632.9 422.1,637.0 420.0,641.2 418.1,645.5 416.2,649.8 414.4,654.1 412.7,658.5 411.1,662.9 409.5,667.3" fill="url(#spk)" fill-opacity="0.65"/>
<polygon points="954.0,662.7 952.2,657.9 950.4,653.2 948.4,648.5 946.4,643.9 944.3,639.3 942.1,634.7 939.9,630.2 937.5,625.7 935.1,621.3 932.6,616.9 930.0,612.6 927.4,608.3 924.6,604.1 921.9,599.9 919.0,595.8 916.0,591.8 913.0,587.8 909.9,583.8 906.8,579.9 903.6,576.1 900.3,572.3 896.9,568.6 893.5,565.0 890.1,561.4 886.5,557.9 882.9,554.5 879.3,551.1 870.4,560.6 873.8,563.9 877.2,567.1 880.6,570.5 883.9,573.9 887.1,577.3 890.3,580.9 893.4,584.5 896.5,588.1 899.5,591.8 902.4,595.6 905.3,599.4 908.1,603.2 910.8,607.2 913.4,611.1 916.0,615.2 918.5,619.2 921.0,623.3 923.4,627.5 925.6,631.7 927.9,636.0 930.0,640.3 932.1,644.6 934.1,649.0 936.0,653.4 937.8,657.8 939.6,662.3 941.3,666.9" fill="#9e7b46" stroke="#9e7b46" stroke-width="0.5"/>
<polygon points="954.0,662.7 952.2,657.9 950.4,653.2 948.4,648.5 946.4,643.9 944.3,639.3 942.1,634.7 939.9,630.2 937.5,625.7 935.1,621.3 932.6,616.9 930.0,612.6 927.4,608.3 924.6,604.1 921.9,599.9 919.0,595.8 916.0,591.8 913.0,587.8 909.9,583.8 906.8,579.9 903.6,576.1 900.3,572.3 896.9,568.6 893.5,565.0 890.1,561.4 886.5,557.9 882.9,554.5 879.3,551.1 870.4,560.6 873.8,563.9 877.2,567.1 880.6,570.5 883.9,573.9 887.1,577.3 890.3,580.9 893.4,584.5 896.5,588.1 899.5,591.8 902.4,595.6 905.3,599.4 908.1,603.2 910.8,607.2 913.4,611.1 916.0,615.2 918.5,619.2 921.0,623.3 923.4,627.5 925.6,631.7 927.9,636.0 930.0,640.3 932.1,644.6 934.1,649.0 936.0,653.4 937.8,657.8 939.6,662.3 941.3,666.9" fill="url(#spk)" fill-opacity="0.65"/>
<polyline points="409.5,667.3 411.1,662.9 412.7,658.5 414.4,654.1 416.2,649.8 418.1,645.5 420.0,641.2 422.1,637.0 424.1,632.9 426.3,628.7 428.6,624.6 430.9,620.6 433.2,616.6 435.7,612.6 438.2,608.7 440.8,604.9 443.4,601.1 446.2,597.3 449.0,593.6 451.8,589.9 454.7,586.3 457.7,582.8 460.7,579.3 463.8,575.9 467.0,572.5 470.2,569.2 473.5,565.9 476.8,562.7" fill="none" stroke="#cfcabd" stroke-width="0.50" stroke-opacity="0.70"/>
<polyline points="397.4,663.2 399.0,658.6 400.8,654.0 402.6,649.4 404.5,644.9 406.4,640.4 408.5,635.9 410.6,631.5 412.8,627.1 415.1,622.8 417.4,618.5 419.9,614.2 422.4,610.0 424.9,605.9 427.6,601.7 430.3,597.7 433.1,593.7 436.0,589.7 438.9,585.9 441.9,582.0 445.0,578.2 448.1,574.5 451.3,570.8 454.5,567.2 457.8,563.7 461.2,560.2 464.7,556.8 468.2,553.4" fill="none" stroke="#cfcabd" stroke-width="0.40" stroke-opacity="0.60"/>
<polyline points="941.3,666.9 939.6,662.3 937.8,657.8 936.0,653.4 934.1,649.0 932.1,644.6 930.0,640.3 927.9,636.0 925.6,631.7 923.4,627.5 921.0,623.3 918.5,619.2 916.0,615.2 913.4,611.1 910.8,607.2 908.1,603.2 905.3,599.4 902.4,595.6 899.5,591.8 896.5,588.1 893.4,584.5 890.3,580.9 887.1,577.3 883.9,573.9 880.6,570.5 877.2,567.1 873.8,563.9 870.4,560.6" fill="none" stroke="#cfcabd" stroke-width="0.50" stroke-opacity="0.70"/>
<polyline points="954.0,662.7 952.2,657.9 950.4,653.2 948.4,648.5 946.4,643.9 944.3,639.3 942.1,634.7 939.9,630.2 937.5,625.7 935.1,621.3 932.6,616.9 930.0,612.6 927.4,608.3 924.6,604.1 921.9,599.9 919.0,595.8 916.0,591.8 913.0,587.8 909.9,583.8 906.8,579.9 903.6,576.1 900.3,572.3 896.9,568.6 893.5,565.0 890.1,561.4 886.5,557.9 882.9,554.5 879.3,551.1" fill="none" stroke="#cfcabd" stroke-width="0.40" stroke-opacity="0.60"/>
<polygon points="396.1,701.8 406.9,701.8 407.8,665.4 397.0,665.4" fill="#808076" stroke="#808076" stroke-width="0.5"/>
<polygon points="943.6,702.3 955.1,702.3 953.8,664.9 942.4,664.9" fill="#808076" stroke="#808076" stroke-width="0.5"/>
<polygon points="400.1,665.3 407.3,665.3 409.6,575.9 402.5,576.0" fill="#ba9458" stroke="#ba9458" stroke-width="0.5"/>
<polyline points="406.0,576.0 405.5,570.5" fill="none" stroke="#2a1c08" stroke-width="0.50" stroke-opacity="0.80"/>
<polygon points="943.2,664.8 950.8,664.8 947.6,573.1 940.2,573.1" fill="#ba9458" stroke="#ba9458" stroke-width="0.5"/>
<polyline points="943.9,573.1 944.4,567.7" fill="none" stroke="#2a1c08" stroke-width="0.50" stroke-opacity="0.80"/>
<polygon points="358.5,563.2 359.8,563.2 403.3,578.2 402.2,578.2" fill="#b29868" stroke="#b29868" stroke-width="0.5"/>
<polygon points="359.8,563.2 403.3,578.2 403.4,573.7 359.9,558.1" fill="#e7c47e" stroke="#e7c47e" stroke-width="0.5"/>
<polygon points="378.5,557.7 379.7,557.7 420.8,573.4 419.8,573.4" fill="#b29868" stroke="#b29868" stroke-width="0.5"/>
<polygon points="379.7,557.7 420.8,573.4 420.9,568.9 379.9,552.5" fill="#e7c47e" stroke="#e7c47e" stroke-width="0.5"/>
<polygon points="398.5,552.2 399.8,552.2 438.4,568.6 437.3,568.6" fill="#b29868" stroke="#b29868" stroke-width="0.5"/>
<polygon points="399.8,552.2 438.4,568.6 438.5,564.1 399.9,547.0" fill="#e7c47e" stroke="#e7c47e" stroke-width="0.5"/>
<polygon points="418.5,546.7 419.8,546.6 455.9,563.7 454.8,563.8" fill="#b29868" stroke="#b29868" stroke-width="0.5"/>
<polygon points="419.8,546.6 455.9,563.7 456.0,559.2 419.9,541.5" fill="#e7c47e" stroke="#e7c47e" stroke-width="0.5"/>
<polygon points="432.3,542.9 433.5,542.9 467.9,560.4 466.8,560.4" fill="#b29868" stroke="#b29868" stroke-width="0.5"/>
<polygon points="433.5,542.9 467.9,560.4 468.0,555.9 433.6,537.7" fill="#e7c47e" stroke="#e7c47e" stroke-width="0.5"/>
<polygon points="438.6,541.1 439.8,541.1 473.5,558.9 472.4,558.9" fill="#b29868" stroke="#b29868" stroke-width="0.5"/>
<polygon points="439.8,541.1 473.5,558.9 473.5,554.4 439.9,536.0" fill="#e7c47e" stroke="#e7c47e" stroke-width="0.5"/>
<polygon points="981.0,559.6 982.3,559.6 947.4,575.4 946.3,575.4" fill="#d6c8a8" stroke="#d6c8a8" stroke-width="0.5"/>
<polygon points="981.0,559.6 946.3,575.4 946.1,570.8 980.8,554.2" fill="#c0a064" stroke="#c0a064" stroke-width="0.5"/>
<polygon points="458.6,535.6 459.9,535.6 491.0,554.1 489.9,554.1" fill="#b29868" stroke="#b29868" stroke-width="0.5"/>
<polygon points="459.9,535.6 491.0,554.1 491.1,549.6 460.0,530.4" fill="#e7c47e" stroke="#e7c47e" stroke-width="0.5"/>
<polygon points="959.7,554.1 961.0,554.1 928.9,570.7 927.8,570.7" fill="#d6c8a8" stroke="#d6c8a8" stroke-width="0.5"/>
<polygon points="959.7,554.1 927.8,570.7 927.6,566.1 959.5,548.8" fill="#c0a064" stroke="#c0a064" stroke-width="0.5"/>
<polygon points="478.7,530.0 479.9,530.0 508.6,549.2 507.5,549.2" fill="#b29868" stroke="#b29868" stroke-width="0.5"/>
<polygon points="479.9,530.0 508.6,549.2 508.7,544.7 480.0,524.9" fill="#e7c47e" stroke="#e7c47e" stroke-width="0.5"/>
<polygon points="938.6,548.7 939.9,548.7 910.5,565.9 909.4,565.9" fill="#d6c8a8" stroke="#d6c8a8" stroke-width="0.5"/>
<polygon points="938.6,548.7 909.4,565.9 909.2,561.3 938.4,543.4" fill="#c0a064" stroke="#c0a064" stroke-width="0.5"/>
<polygon points="498.8,524.5 500.0,524.5 526.2,544.4 525.1,544.4" fill="#b29868" stroke="#b29868" stroke-width="0.5"/>
<polygon points="500.0,524.5 526.2,544.4 526.2,539.9 500.1,519.3" fill="#e7c47e" stroke="#e7c47e" stroke-width="0.5"/>
<polygon points="917.5,543.3 918.8,543.3 892.2,561.2 891.0,561.2" fill="#d6c8a8" stroke="#d6c8a8" stroke-width="0.5"/>
<polygon points="917.5,543.3 891.0,561.2 890.9,556.6 917.3,538.0" fill="#c0a064" stroke="#c0a064" stroke-width="0.5"/>
<polygon points="903.1,539.6 904.4,539.6 879.6,558.0 878.5,558.0" fill="#d6c8a8" stroke="#d6c8a8" stroke-width="0.5"/>
<polygon points="903.1,539.6 878.5,558.0 878.4,553.4 903.0,534.4" fill="#c0a064" stroke="#c0a064" stroke-width="0.5"/>
<polygon points="518.9,519.0 520.1,518.9 543.8,539.5 542.7,539.5" fill="#b29868" stroke="#b29868" stroke-width="0.5"/>
<polygon points="520.1,518.9 543.8,539.5 543.8,535.0 520.2,513.8" fill="#e7c47e" stroke="#e7c47e" stroke-width="0.5"/>
<polygon points="896.5,537.9 897.8,537.9 873.8,556.5 872.7,556.5" fill="#d6c8a8" stroke="#d6c8a8" stroke-width="0.5"/>
<polygon points="896.5,537.9 872.7,556.5 872.6,551.9 896.3,532.7" fill="#c0a064" stroke="#c0a064" stroke-width="0.5"/>
<polygon points="539.0,513.4 540.2,513.4 561.4,534.7 560.3,534.7" fill="#b29868" stroke="#b29868" stroke-width="0.5"/>
<polygon points="540.2,513.4 561.4,534.7 561.4,530.2 540.3,508.2" fill="#e7c47e" stroke="#e7c47e" stroke-width="0.5"/>
<polygon points="875.5,532.6 876.8,532.6 855.6,551.8 854.5,551.8" fill="#d6c8a8" stroke="#d6c8a8" stroke-width="0.5"/>
<polygon points="875.5,532.6 854.5,551.8 854.3,547.2 875.4,527.3" fill="#c0a064" stroke="#c0a064" stroke-width="0.5"/>
<polygon points="559.1,507.9 560.4,507.8 579.0,529.8 577.9,529.8" fill="#b29868" stroke="#b29868" stroke-width="0.5"/>
<polygon points="560.4,507.8 579.0,529.8 579.0,525.3 560.4,502.7" fill="#e7c47e" stroke="#e7c47e" stroke-width="0.5"/>
<polygon points="854.7,527.2 855.9,527.2 837.4,547.1 836.3,547.1" fill="#d6c8a8" stroke="#d6c8a8" stroke-width="0.5"/>
<polygon points="854.7,527.2 836.3,547.1 836.2,542.5 854.5,522.0" fill="#c0a064" stroke="#c0a064" stroke-width="0.5"/>
<polygon points="579.3,502.3 580.5,502.3 596.6,525.0 595.5,525.0" fill="#b29868" stroke="#b29868" stroke-width="0.5"/>
<polygon points="580.5,502.3 596.6,525.0 596.7,520.5 580.5,497.1" fill="#e7c47e" stroke="#e7c47e" stroke-width="0.5"/>
<polygon points="833.8,521.9 835.1,521.9 819.2,542.4 818.1,542.4" fill="#d6c8a8" stroke="#d6c8a8" stroke-width="0.5"/>
<polygon points="833.8,521.9 818.1,542.4 818.0,537.8 833.7,516.7" fill="#c0a064" stroke="#c0a064" stroke-width="0.5"/>
<polygon points="599.4,496.7 600.7,496.7 614.3,520.1 613.2,520.1" fill="#b29868" stroke="#b29868" stroke-width="0.5"/>
<polygon points="600.7,496.7 614.3,520.1 614.3,515.6 600.7,491.6" fill="#e7c47e" stroke="#e7c47e" stroke-width="0.5"/>
<polygon points="813.1,516.6 814.4,516.6 801.1,537.7 800.0,537.7" fill="#d6c8a8" stroke="#d6c8a8" stroke-width="0.5"/>
<polygon points="813.1,516.6 800.0,537.7 799.9,533.2 813.0,511.4" fill="#c0a064" stroke="#c0a064" stroke-width="0.5"/>
<polygon points="619.6,491.2 620.8,491.1 631.9,515.2 630.8,515.3" fill="#b29868" stroke="#b29868" stroke-width="0.5"/>
<polygon points="620.8,491.1 631.9,515.2 631.9,510.7 620.9,486.0" fill="#e7c47e" stroke="#e7c47e" stroke-width="0.5"/>
<polygon points="792.4,511.3 793.7,511.3 783.1,533.1 781.9,533.1" fill="#d6c8a8" stroke="#d6c8a8" stroke-width="0.5"/>
<polygon points="792.4,511.3 781.9,533.1 781.9,528.5 792.3,506.1" fill="#c0a064" stroke="#c0a064" stroke-width="0.5"/>
<polygon points="639.8,485.6 641.0,485.6 649.6,510.4 648.5,510.4" fill="#b29868" stroke="#b29868" stroke-width="0.5"/>
<polygon points="641.0,485.6 649.6,510.4 649.6,505.9 641.0,480.4" fill="#e7c47e" stroke="#e7c47e" stroke-width="0.5"/>
<polygon points="771.8,506.0 773.1,506.0 765.1,528.4 763.9,528.5" fill="#d6c8a8" stroke="#d6c8a8" stroke-width="0.5"/>
<polygon points="771.8,506.0 763.9,528.5 763.9,523.9 771.7,500.8" fill="#c0a064" stroke="#c0a064" stroke-width="0.5"/>
<polygon points="660.0,480.0 661.2,480.0 667.3,505.5 666.2,505.5" fill="#b29868" stroke="#b29868" stroke-width="0.5"/>
<polygon points="661.2,480.0 667.3,505.5 667.3,501.0 661.2,474.9" fill="#e7c47e" stroke="#e7c47e" stroke-width="0.5"/>
<polygon points="751.2,500.8 752.5,500.8 747.1,523.8 746.0,523.8" fill="#d6c8a8" stroke="#d6c8a8" stroke-width="0.5"/>
<polygon points="751.2,500.8 746.0,523.8 745.9,519.3 751.2,495.6" fill="#c0a064" stroke="#c0a064" stroke-width="0.5"/>
<polygon points="664.8,478.7 666.1,478.7 671.5,504.3 670.4,504.4" fill="#b29868" stroke="#b29868" stroke-width="0.5"/>
<polygon points="666.1,478.7 671.5,504.3 671.5,499.8 666.1,473.5" fill="#e7c47e" stroke="#e7c47e" stroke-width="0.5"/>
<polygon points="669.7,479.9 670.9,479.9 675.8,505.4 674.7,505.4" fill="#b29868" stroke="#b29868" stroke-width="0.5"/>
<polygon points="670.9,479.9 675.8,505.4 675.8,500.9 670.9,474.8" fill="#e7c47e" stroke="#e7c47e" stroke-width="0.5"/>
<polygon points="730.8,495.5 732.0,495.5 729.2,519.2 728.1,519.2" fill="#d6c8a8" stroke="#d6c8a8" stroke-width="0.5"/>
<polygon points="730.8,495.5 728.1,519.2 728.0,514.7 730.7,490.4" fill="#c0a064" stroke="#c0a064" stroke-width="0.5"/>
<polygon points="690.0,485.1 691.2,485.1 693.5,510.0 692.4,510.0" fill="#b29868" stroke="#b29868" stroke-width="0.5"/>
<polygon points="691.2,485.1 693.5,510.0 693.5,505.5 691.2,479.9" fill="#e7c47e" stroke="#e7c47e" stroke-width="0.5"/>
<polygon points="710.3,490.3 711.6,490.3 711.3,514.6 710.2,514.6" fill="#d6c8a8" stroke="#d6c8a8" stroke-width="0.5"/>
<polygon points="710.3,490.3 710.2,514.6 710.2,510.1 710.3,485.1" fill="#c0a064" stroke="#c0a064" stroke-width="0.5"/>
<polygon points="667.3,485.2 344.4,574.3 345.6,574.7 667.5,485.8" fill="#8c6c3e" stroke="#8c6c3e" stroke-width="0.5"/>
<polygon points="663.4,485.2 998.6,571.2 997.6,571.6 663.5,485.9" fill="#8c6c3e" stroke="#8c6c3e" stroke-width="0.5"/>
<polygon points="365.2,664.8 367.0,659.8 368.9,654.7 370.9,649.7 373.0,644.8 375.2,639.9 377.4,635.0 379.7,630.1 382.2,625.4 384.7,620.6 387.2,615.9 389.9,611.3 392.6,606.7 395.5,602.2 398.4,597.7 401.4,593.3 404.4,588.9 407.5,584.6 410.7,580.4 414.0,576.2 417.4,572.0 420.8,568.0 424.3,564.0 427.8,560.0 431.5,556.2 435.2,552.4 438.9,548.6 442.8,545.0 443.9,545.6 440.1,549.2 436.4,553.0 432.7,556.7 429.1,560.6 425.5,564.5 422.1,568.5 418.7,572.5 415.3,576.6 412.1,580.8 408.9,585.0 405.7,589.3 402.7,593.7 399.7,598.1 396.9,602.5 394.0,607.1 391.3,611.6 388.7,616.2 386.1,620.9 383.6,625.6 381.2,630.4 378.9,635.2 376.6,640.0 374.5,644.9 372.4,649.9 370.4,654.9 368.5,659.9 366.7,664.9" fill="#9c7a46" stroke="#9c7a46" stroke-width="0.5"/>
<polygon points="362.7,662.6 365.8,560.2 367.9,561.0 364.9,662.7" fill="#aa8650" stroke="#aa8650" stroke-width="0.5"/>
<polygon points="976.5,664.3 974.5,659.1 972.5,653.9 970.4,648.8 968.1,643.7 965.8,638.7 963.4,633.7 960.9,628.7 958.3,623.8 955.7,619.0 952.9,614.2 950.1,609.5 947.2,604.8 944.2,600.2 941.1,595.6 938.0,591.1 934.7,586.7 931.4,582.3 928.0,578.0 924.6,573.7 921.0,569.5 917.4,565.4 913.8,561.4 910.0,557.4 906.2,553.5 902.4,549.7 898.4,545.9 894.4,542.2 893.6,542.9 897.6,546.5 901.5,550.3 905.3,554.1 909.1,558.0 912.9,561.9 916.5,566.0 920.1,570.1 923.6,574.2 927.1,578.5 930.4,582.7 933.7,587.1 936.9,591.5 940.1,596.0 943.1,600.6 946.1,605.2 949.0,609.8 951.8,614.5 954.6,619.3 957.2,624.1 959.8,629.0 962.3,633.9 964.7,638.9 967.0,643.9 969.2,648.9 971.3,654.0 973.3,659.2 975.3,664.4" fill="#8c6c3e" stroke="#8c6c3e" stroke-width="0.5"/>
<polygon points="974.8,556.5 978.8,662.0 977.0,662.1 973.1,557.3" fill="#967442" stroke="#967442" stroke-width="0.5"/>
<polygon points="667.3,485.2 344.4,574.3 341.0,559.7 663.3,470.7" fill="#cda668" stroke="#cda668" stroke-width="0.5"/>
<polygon points="663.4,485.2 998.6,571.2 1002.1,556.1 667.3,470.7" fill="#cda668" stroke="#cda668" stroke-width="0.5"/>
<polyline points="667.0,484.2 344.1,573.3" fill="none" stroke="#6e4f24" stroke-width="0.55" stroke-opacity="0.75"/>
<polyline points="666.7,483.1 343.9,572.2" fill="none" stroke="#6e4f24" stroke-width="0.55" stroke-opacity="0.75"/>
<polyline points="666.5,482.1 343.7,571.2" fill="none" stroke="#6e4f24" stroke-width="0.55" stroke-opacity="0.75"/>
<polyline points="666.2,481.1 343.4,570.1" fill="none" stroke="#6e4f24" stroke-width="0.55" stroke-opacity="0.75"/>
<polyline points="665.9,480.0 343.2,569.1" fill="none" stroke="#6e4f24" stroke-width="0.55" stroke-opacity="0.75"/>
<polyline points="665.6,479.0 342.9,568.1" fill="none" stroke="#6e4f24" stroke-width="0.55" stroke-opacity="0.75"/>
<polyline points="665.3,478.0 342.7,567.0" fill="none" stroke="#6e4f24" stroke-width="0.55" stroke-opacity="0.75"/>
<polyline points="665.0,476.9 342.4,566.0" fill="none" stroke="#6e4f24" stroke-width="0.55" stroke-opacity="0.75"/>
<polyline points="664.7,475.9 342.2,564.9" fill="none" stroke="#6e4f24" stroke-width="0.55" stroke-opacity="0.75"/>
<polyline points="664.5,474.9 342.0,563.9" fill="none" stroke="#6e4f24" stroke-width="0.55" stroke-opacity="0.75"/>
<polyline points="664.2,473.8 341.7,562.9" fill="none" stroke="#6e4f24" stroke-width="0.55" stroke-opacity="0.75"/>
<polyline points="663.9,472.8 341.5,561.8" fill="none" stroke="#6e4f24" stroke-width="0.55" stroke-opacity="0.75"/>
<polyline points="663.6,471.8 341.2,560.8" fill="none" stroke="#6e4f24" stroke-width="0.55" stroke-opacity="0.75"/>
<polyline points="663.6,484.2 998.8,570.1" fill="none" stroke="#6e4f24" stroke-width="0.55" stroke-opacity="0.75"/>
<polyline points="663.9,483.2 999.1,569.0" fill="none" stroke="#6e4f24" stroke-width="0.55" stroke-opacity="0.75"/>
<polyline points="664.2,482.1 999.3,568.0" fill="none" stroke="#6e4f24" stroke-width="0.55" stroke-opacity="0.75"/>
<polyline points="664.5,481.1 999.6,566.9" fill="none" stroke="#6e4f24" stroke-width="0.55" stroke-opacity="0.75"/>
<polyline points="664.8,480.0 999.8,565.8" fill="none" stroke="#6e4f24" stroke-width="0.55" stroke-opacity="0.75"/>
<polyline points="665.0,479.0 1000.1,564.7" fill="none" stroke="#6e4f24" stroke-width="0.55" stroke-opacity="0.75"/>
<polyline points="665.3,478.0 1000.4,563.7" fill="none" stroke="#6e4f24" stroke-width="0.55" stroke-opacity="0.75"/>
<polyline points="665.6,476.9 1000.6,562.6" fill="none" stroke="#6e4f24" stroke-width="0.55" stroke-opacity="0.75"/>
<polyline points="665.9,475.9 1000.9,561.5" fill="none" stroke="#6e4f24" stroke-width="0.55" stroke-opacity="0.75"/>
<polyline points="666.2,474.8 1001.1,560.4" fill="none" stroke="#6e4f24" stroke-width="0.55" stroke-opacity="0.75"/>
<polyline points="666.4,473.8 1001.4,559.4" fill="none" stroke="#6e4f24" stroke-width="0.55" stroke-opacity="0.75"/>
<polyline points="666.7,472.8 1001.6,558.3" fill="none" stroke="#6e4f24" stroke-width="0.55" stroke-opacity="0.75"/>
<polyline points="667.0,471.7 1001.9,557.2" fill="none" stroke="#6e4f24" stroke-width="0.55" stroke-opacity="0.75"/>
<polygon points="361.9,704.5 363.2,662.6 366.7,662.9 365.5,704.2" fill="#69685f" stroke="#69685f" stroke-width="0.5"/>
<polygon points="977.9,662.0 979.5,705.1 976.7,704.9 975.1,662.2" fill="#5c5b53" stroke="#5c5b53" stroke-width="0.5"/>
<polygon points="351.3,660.2 353.2,654.9 355.3,649.6 357.4,644.3 359.5,639.1 361.8,634.0 364.2,628.8 366.7,623.8 369.2,618.8 371.8,613.8 374.6,608.9 377.4,604.0 380.2,599.2 383.2,594.4 386.3,589.7 389.4,585.1 392.6,580.5 395.9,576.0 399.3,571.5 402.7,567.1 406.2,562.8 409.8,558.5 413.5,554.3 417.3,550.2 421.1,546.1 424.9,542.1 428.9,538.2 432.9,534.4 442.8,545.0 438.9,548.6 435.2,552.4 431.5,556.2 427.8,560.0 424.3,564.0 420.8,568.0 417.4,572.0 414.0,576.2 410.7,580.4 407.5,584.6 404.4,588.9 401.4,593.3 398.4,597.7 395.5,602.2 392.6,606.7 389.9,611.3 387.2,615.9 384.7,620.6 382.2,625.4 379.7,630.1 377.4,635.0 375.2,639.9 373.0,644.8 370.9,649.7 368.9,654.7 367.0,659.8 365.2,664.8" fill="#cda668" stroke="#cda668" stroke-width="0.5"/>
<polygon points="991.2,659.5 989.1,654.0 987.0,648.6 984.7,643.2 982.4,637.8 979.9,632.5 977.4,627.3 974.7,622.1 972.0,617.0 969.2,611.9 966.3,606.8 963.3,601.9 960.2,597.0 957.1,592.1 953.8,587.3 950.5,582.6 947.1,577.9 943.6,573.3 940.1,568.8 936.4,564.3 932.7,559.9 928.9,555.6 925.0,551.4 921.1,547.2 917.1,543.1 913.0,539.1 908.9,535.1 904.6,531.3 894.4,542.2 898.4,545.9 902.4,549.7 906.2,553.5 910.0,557.4 913.8,561.4 917.4,565.4 921.0,569.5 924.6,573.7 928.0,578.0 931.4,582.3 934.7,586.7 938.0,591.1 941.1,595.6 944.2,600.2 947.2,604.8 950.1,609.5 952.9,614.2 955.7,619.0 958.3,623.8 960.9,628.7 963.4,633.7 965.8,638.7 968.1,643.7 970.4,648.8 972.5,653.9 974.5,659.1 976.5,664.3" fill="#cda668" stroke="#cda668" stroke-width="0.5"/>
<polyline points="352.3,660.5 354.2,655.2 356.2,649.9 358.3,644.7 360.5,639.5 362.8,634.4 365.1,629.3 367.6,624.2 370.1,619.2 372.7,614.3 375.5,609.4 378.3,604.5 381.1,599.7 384.1,595.0 387.1,590.3 390.3,585.7 393.5,581.1 396.7,576.6 400.1,572.1 403.5,567.8 407.0,563.4 410.6,559.2 414.3,555.0 418.0,550.9 421.8,546.8 425.7,542.9 429.6,539.0 433.6,535.1" fill="none" stroke="#6e4f24" stroke-width="0.55" stroke-opacity="0.75"/>
<polyline points="353.3,660.9 355.2,655.6 357.2,650.3 359.3,645.1 361.5,639.9 363.7,634.8 366.1,629.7 368.5,624.7 371.0,619.7 373.7,614.8 376.4,609.9 379.1,605.0 382.0,600.3 385.0,595.5 388.0,590.9 391.1,586.2 394.3,581.7 397.6,577.2 400.9,572.8 404.3,568.4 407.8,564.1 411.4,559.9 415.0,555.7 418.8,551.6 422.6,547.6 426.4,543.6 430.3,539.7 434.3,535.9" fill="none" stroke="#6e4f24" stroke-width="0.55" stroke-opacity="0.75"/>
<polyline points="354.3,661.2 356.2,655.9 358.2,650.7 360.3,645.5 362.4,640.3 364.7,635.2 367.0,630.2 369.5,625.1 372.0,620.2 374.6,615.2 377.3,610.4 380.0,605.6 382.9,600.8 385.8,596.1 388.9,591.4 392.0,586.8 395.1,582.3 398.4,577.8 401.7,573.4 405.1,569.0 408.6,564.8 412.2,560.5 415.8,556.4 419.5,552.3 423.3,548.3 427.1,544.3 431.0,540.5 435.0,536.7" fill="none" stroke="#6e4f24" stroke-width="0.55" stroke-opacity="0.75"/>
<polyline points="355.3,661.5 357.2,656.3 359.2,651.1 361.2,645.9 363.4,640.7 365.6,635.6 368.0,630.6 370.4,625.6 372.9,620.6 375.5,615.7 378.2,610.9 380.9,606.1 383.8,601.3 386.7,596.6 389.7,592.0 392.8,587.4 396.0,582.9 399.2,578.4 402.6,574.0 405.9,569.7 409.4,565.4 413.0,561.2 416.6,557.1 420.3,553.0 424.0,549.0 427.9,545.1 431.8,541.2 435.7,537.4" fill="none" stroke="#6e4f24" stroke-width="0.55" stroke-opacity="0.75"/>
<polyline points="356.3,661.9 358.2,656.6 360.1,651.4 362.2,646.3 364.3,641.1 366.6,636.1 368.9,631.0 371.3,626.1 373.8,621.1 376.4,616.2 379.1,611.4 381.8,606.6 384.7,601.9 387.6,597.2 390.6,592.6 393.7,588.0 396.8,583.5 400.1,579.0 403.4,574.7 406.8,570.3 410.2,566.1 413.8,561.9 417.4,557.8 421.0,553.7 424.8,549.7 428.6,545.8 432.5,541.9 436.4,538.2" fill="none" stroke="#6e4f24" stroke-width="0.55" stroke-opacity="0.75"/>
<polyline points="357.3,662.2 359.1,657.0 361.1,651.8 363.2,646.6 365.3,641.5 367.5,636.5 369.8,631.5 372.3,626.5 374.7,621.6 377.3,616.7 380.0,611.9 382.7,607.1 385.6,602.4 388.5,597.7 391.5,593.1 394.5,588.6 397.7,584.1 400.9,579.7 404.2,575.3 407.6,571.0 411.0,566.7 414.5,562.6 418.1,558.5 421.8,554.4 425.5,550.4 429.3,546.5 433.2,542.7 437.1,538.9" fill="none" stroke="#6e4f24" stroke-width="0.55" stroke-opacity="0.75"/>
<polyline points="358.3,662.5 360.1,657.3 362.1,652.2 364.1,647.0 366.3,641.9 368.5,636.9 370.8,631.9 373.2,627.0 375.7,622.1 378.2,617.2 380.9,612.4 383.6,607.6 386.4,602.9 389.3,598.3 392.3,593.7 395.4,589.2 398.5,584.7 401.7,580.3 405.0,575.9 408.4,571.6 411.8,567.4 415.3,563.2 418.9,559.1 422.5,555.1 426.3,551.2 430.1,547.3 433.9,543.4 437.8,539.7" fill="none" stroke="#6e4f24" stroke-width="0.55" stroke-opacity="0.75"/>
<polyline points="359.3,662.8 361.1,657.7 363.1,652.5 365.1,647.4 367.2,642.3 369.4,637.3 371.7,632.3 374.1,627.4 376.6,622.5 379.2,617.7 381.8,612.9 384.5,608.2 387.3,603.5 390.2,598.9 393.2,594.3 396.2,589.8 399.4,585.3 402.6,580.9 405.8,576.6 409.2,572.3 412.6,568.1 416.1,563.9 419.7,559.8 423.3,555.8 427.0,551.9 430.8,548.0 434.6,544.2 438.5,540.4" fill="none" stroke="#6e4f24" stroke-width="0.55" stroke-opacity="0.75"/>
<polyline points="360.2,663.2 362.1,658.0 364.0,652.9 366.1,647.8 368.2,642.8 370.4,637.7 372.7,632.8 375.1,627.9 377.5,623.0 380.1,618.2 382.7,613.4 385.4,608.7 388.2,604.0 391.1,599.4 394.0,594.8 397.1,590.3 400.2,585.9 403.4,581.5 406.6,577.2 410.0,572.9 413.4,568.7 416.9,564.6 420.4,560.5 424.1,556.5 427.8,552.6 431.5,548.7 435.3,544.9 439.2,541.2" fill="none" stroke="#6e4f24" stroke-width="0.55" stroke-opacity="0.75"/>
<polyline points="361.2,663.5 363.1,658.4 365.0,653.3 367.0,648.2 369.1,643.2 371.3,638.2 373.6,633.2 376.0,628.3 378.4,623.5 381.0,618.7 383.6,613.9 386.3,609.2 389.1,604.6 392.0,600.0 394.9,595.4 397.9,590.9 401.0,586.5 404.2,582.1 407.5,577.8 410.8,573.6 414.2,569.4 417.7,565.3 421.2,561.2 424.8,557.2 428.5,553.3 432.2,549.5 436.1,545.7 439.9,542.0" fill="none" stroke="#6e4f24" stroke-width="0.55" stroke-opacity="0.75"/>
<polyline points="362.2,663.8 364.1,658.7 366.0,653.6 368.0,648.6 370.1,643.6 372.3,638.6 374.6,633.7 376.9,628.8 379.4,623.9 381.9,619.2 384.5,614.4 387.2,609.7 390.0,605.1 392.8,600.5 395.8,596.0 398.8,591.5 401.9,587.1 405.0,582.8 408.3,578.5 411.6,574.2 415.0,570.1 418.4,565.9 422.0,561.9 425.6,557.9 429.2,554.0 433.0,550.2 436.8,546.4 440.6,542.7" fill="none" stroke="#6e4f24" stroke-width="0.55" stroke-opacity="0.75"/>
<polyline points="363.2,664.2 365.0,659.1 367.0,654.0 369.0,649.0 371.1,644.0 373.2,639.0 375.5,634.1 377.9,629.2 380.3,624.4 382.8,619.6 385.4,614.9 388.1,610.3 390.9,605.6 393.7,601.1 396.6,596.6 399.6,592.1 402.7,587.7 405.9,583.4 409.1,579.1 412.4,574.9 415.8,570.7 419.2,566.6 422.7,562.6 426.3,558.6 430.0,554.7 433.7,550.9 437.5,547.2 441.3,543.5" fill="none" stroke="#6e4f24" stroke-width="0.55" stroke-opacity="0.75"/>
<polyline points="364.2,664.5 366.0,659.4 367.9,654.4 369.9,649.3 372.0,644.4 374.2,639.4 376.5,634.5 378.8,629.7 381.2,624.9 383.7,620.1 386.3,615.4 389.0,610.8 391.8,606.2 394.6,601.6 397.5,597.1 400.5,592.7 403.6,588.3 406.7,584.0 409.9,579.7 413.2,575.5 416.6,571.4 420.0,567.3 423.5,563.3 427.1,559.3 430.7,555.5 434.4,551.6 438.2,547.9 442.0,544.2" fill="none" stroke="#6e4f24" stroke-width="0.55" stroke-opacity="0.75"/>
<polyline points="990.1,659.8 988.1,654.4 985.9,648.9 983.7,643.6 981.3,638.2 978.9,633.0 976.4,627.7 973.7,622.6 971.0,617.5 968.2,612.4 965.3,607.4 962.4,602.4 959.3,597.5 956.2,592.7 952.9,587.9 949.6,583.2 946.2,578.5 942.7,574.0 939.2,569.4 935.6,565.0 931.9,560.6 928.1,556.3 924.2,552.1 920.3,547.9 916.3,543.8 912.2,539.8 908.1,535.9 903.9,532.0" fill="none" stroke="#6e4f24" stroke-width="0.55" stroke-opacity="0.75"/>
<polyline points="989.1,660.1 987.0,654.7 984.9,649.3 982.7,644.0 980.3,638.7 977.9,633.4 975.4,628.2 972.8,623.0 970.1,617.9 967.3,612.9 964.4,607.9 961.4,603.0 958.4,598.1 955.2,593.3 952.0,588.5 948.7,583.8 945.3,579.2 941.9,574.6 938.3,570.1 934.7,565.7 931.0,561.3 927.3,557.0 923.4,552.8 919.5,548.7 915.5,544.6 911.5,540.6 907.4,536.7 903.2,532.8" fill="none" stroke="#6e4f24" stroke-width="0.55" stroke-opacity="0.75"/>
<polyline points="988.0,660.5 986.0,655.1 983.9,649.7 981.6,644.4 979.3,639.1 976.9,633.8 974.4,628.7 971.8,623.5 969.1,618.4 966.3,613.4 963.4,608.4 960.5,603.5 957.4,598.6 954.3,593.8 951.1,589.1 947.8,584.4 944.5,579.8 941.0,575.2 937.5,570.8 933.9,566.3 930.2,562.0 926.4,557.7 922.6,553.5 918.7,549.4 914.8,545.3 910.7,541.3 906.6,537.4 902.4,533.6" fill="none" stroke="#6e4f24" stroke-width="0.55" stroke-opacity="0.75"/>
<polyline points="987.0,660.8 985.0,655.4 982.8,650.1 980.6,644.8 978.3,639.5 975.9,634.3 973.4,629.1 970.8,624.0 968.1,618.9 965.3,613.9 962.5,608.9 959.5,604.0 956.5,599.2 953.4,594.4 950.2,589.7 946.9,585.0 943.6,580.4 940.1,575.9 936.6,571.4 933.0,567.0 929.4,562.7 925.6,558.4 921.8,554.2 917.9,550.1 914.0,546.1 910.0,542.1 905.9,538.2 901.7,534.4" fill="none" stroke="#6e4f24" stroke-width="0.55" stroke-opacity="0.75"/>
<polyline points="985.9,661.2 983.9,655.8 981.8,650.5 979.6,645.2 977.3,639.9 974.9,634.7 972.4,629.6 969.8,624.5 967.1,619.4 964.4,614.4 961.5,609.5 958.6,604.6 955.6,599.8 952.5,595.0 949.3,590.3 946.0,585.6 942.7,581.0 939.3,576.5 935.8,572.1 932.2,567.7 928.5,563.4 924.8,559.1 921.0,554.9 917.1,550.8 913.2,546.8 909.2,542.9 905.1,539.0 901.0,535.2" fill="none" stroke="#6e4f24" stroke-width="0.55" stroke-opacity="0.75"/>
<polyline points="984.9,661.5 982.9,656.2 980.8,650.8 978.6,645.6 976.3,640.3 973.9,635.2 971.4,630.0 968.8,624.9 966.2,619.9 963.4,614.9 960.6,610.0 957.7,605.1 954.6,600.3 951.6,595.6 948.4,590.9 945.1,586.2 941.8,581.7 938.4,577.2 934.9,572.7 931.3,568.4 927.7,564.1 924.0,559.8 920.2,555.7 916.4,551.6 912.4,547.6 908.4,543.6 904.4,539.8 900.3,536.0" fill="none" stroke="#6e4f24" stroke-width="0.55" stroke-opacity="0.75"/>
<polyline points="983.8,661.9 981.8,656.5 979.7,651.2 977.5,646.0 975.2,640.8 972.9,635.6 970.4,630.5 967.8,625.4 965.2,620.4 962.4,615.4 959.6,610.5 956.7,605.7 953.7,600.9 950.6,596.1 947.5,591.5 944.2,586.8 940.9,582.3 937.5,577.8 934.0,573.4 930.5,569.0 926.9,564.7 923.2,560.5 919.4,556.4 915.6,552.3 911.7,548.3 907.7,544.4 903.6,540.5 899.5,536.7" fill="none" stroke="#6e4f24" stroke-width="0.55" stroke-opacity="0.75"/>
<polyline points="982.8,662.2 980.8,656.9 978.7,651.6 976.5,646.4 974.2,641.2 971.9,636.0 969.4,630.9 966.8,625.9 964.2,620.9 961.5,615.9 958.7,611.1 955.8,606.2 952.8,601.4 949.7,596.7 946.6,592.1 943.3,587.5 940.0,582.9 936.6,578.4 933.2,574.0 929.6,569.7 926.0,565.4 922.4,561.2 918.6,557.1 914.8,553.0 910.9,549.0 906.9,545.1 902.9,541.3 898.8,537.5" fill="none" stroke="#6e4f24" stroke-width="0.55" stroke-opacity="0.75"/>
<polyline points="981.7,662.6 979.8,657.3 977.7,652.0 975.5,646.8 973.2,641.6 970.9,636.5 968.4,631.4 965.9,626.4 963.2,621.4 960.5,616.5 957.7,611.6 954.8,606.8 951.8,602.0 948.8,597.3 945.7,592.6 942.4,588.1 939.1,583.5 935.8,579.1 932.3,574.7 928.8,570.4 925.2,566.1 921.5,561.9 917.8,557.8 914.0,553.8 910.1,549.8 906.2,545.9 902.1,542.1 898.1,538.3" fill="none" stroke="#6e4f24" stroke-width="0.55" stroke-opacity="0.75"/>
<polyline points="980.7,662.9 978.7,657.6 976.6,652.4 974.5,647.2 972.2,642.0 969.8,636.9 967.4,631.8 964.9,626.8 962.2,621.9 959.5,617.0 956.8,612.1 953.9,607.3 950.9,602.6 947.9,597.9 944.7,593.2 941.5,588.7 938.3,584.2 934.9,579.7 931.5,575.4 928.0,571.0 924.4,566.8 920.7,562.6 917.0,558.5 913.2,554.5 909.3,550.5 905.4,546.6 901.4,542.8 897.3,539.1" fill="none" stroke="#6e4f24" stroke-width="0.55" stroke-opacity="0.75"/>
<polyline points="979.6,663.2 977.7,658.0 975.6,652.8 973.4,647.6 971.2,642.4 968.8,637.3 966.4,632.3 963.9,627.3 961.3,622.4 958.6,617.5 955.8,612.6 952.9,607.8 950.0,603.1 947.0,598.4 943.8,593.8 940.6,589.3 937.4,584.8 934.0,580.4 930.6,576.0 927.1,571.7 923.5,567.5 919.9,563.3 916.2,559.2 912.4,555.2 908.6,551.3 904.6,547.4 900.7,543.6 896.6,539.9" fill="none" stroke="#6e4f24" stroke-width="0.55" stroke-opacity="0.75"/>
<polyline points="978.6,663.6 976.6,658.3 974.6,653.1 972.4,648.0 970.2,642.9 967.8,637.8 965.4,632.8 962.9,627.8 960.3,622.9 957.6,618.0 954.8,613.2 952.0,608.4 949.0,603.7 946.0,599.0 942.9,594.4 939.8,589.9 936.5,585.4 933.2,581.0 929.8,576.7 926.3,572.4 922.7,568.2 919.1,564.0 915.4,560.0 911.6,555.9 907.8,552.0 903.9,548.2 899.9,544.4 895.9,540.7" fill="none" stroke="#6e4f24" stroke-width="0.55" stroke-opacity="0.75"/>
<polyline points="977.5,663.9 975.6,658.7 973.5,653.5 971.4,648.4 969.2,643.3 966.8,638.2 964.4,633.2 961.9,628.3 959.3,623.3 956.6,618.5 953.9,613.7 951.0,608.9 948.1,604.2 945.1,599.6 942.0,595.0 938.9,590.5 935.6,586.0 932.3,581.7 928.9,577.3 925.4,573.1 921.9,568.9 918.3,564.7 914.6,560.7 910.8,556.7 907.0,552.8 903.1,548.9 899.2,545.1 895.1,541.4" fill="none" stroke="#6e4f24" stroke-width="0.55" stroke-opacity="0.75"/>
<polygon points="349.5,704.4 361.9,704.5 363.2,662.6 350.8,662.7" fill="#808076" stroke="#808076" stroke-width="0.5"/>
<polygon points="979.5,705.1 992.8,705.1 991.1,662.0 977.9,662.0" fill="#808076" stroke="#808076" stroke-width="0.5"/>
<polygon points="354.4,662.6 362.7,662.6 365.8,560.2 357.6,560.2" fill="#cda668" stroke="#cda668" stroke-width="0.5"/>
<polyline points="361.3,662.6 364.4,560.2" fill="none" stroke="#6e4f24" stroke-width="0.55" stroke-opacity="0.75"/>
<polyline points="359.9,662.6 363.1,560.2" fill="none" stroke="#6e4f24" stroke-width="0.55" stroke-opacity="0.75"/>
<polyline points="358.6,662.6 361.7,560.2" fill="none" stroke="#6e4f24" stroke-width="0.55" stroke-opacity="0.75"/>
<polyline points="357.2,662.6 360.4,560.2" fill="none" stroke="#6e4f24" stroke-width="0.55" stroke-opacity="0.75"/>
<polyline points="355.8,662.6 359.0,560.2" fill="none" stroke="#6e4f24" stroke-width="0.55" stroke-opacity="0.75"/>
<polyline points="361.7,560.2 361.2,554.0" fill="none" stroke="#2a1c08" stroke-width="0.50" stroke-opacity="0.80"/>
<polygon points="978.8,662.0 987.5,661.9 983.4,556.5 974.8,556.5" fill="#cda668" stroke="#cda668" stroke-width="0.5"/>
<polyline points="980.2,661.9 976.2,556.5" fill="none" stroke="#6e4f24" stroke-width="0.55" stroke-opacity="0.75"/>
<polyline points="981.7,661.9 977.7,556.5" fill="none" stroke="#6e4f24" stroke-width="0.55" stroke-opacity="0.75"/>
<polyline points="983.1,661.9 979.1,556.5" fill="none" stroke="#6e4f24" stroke-width="0.55" stroke-opacity="0.75"/>
<polyline points="984.6,661.9 980.6,556.5" fill="none" stroke="#6e4f24" stroke-width="0.55" stroke-opacity="0.75"/>
<polyline points="986.1,661.9 982.0,556.5" fill="none" stroke="#6e4f24" stroke-width="0.55" stroke-opacity="0.75"/>
<polyline points="979.1,556.5 979.6,550.2" fill="none" stroke="#2a1c08" stroke-width="0.50" stroke-opacity="0.80"/>
<polygon points="298.8,542.7 300.2,542.7 358.6,562.8 357.4,562.8" fill="#b29868" stroke="#b29868" stroke-width="0.5"/>
<polygon points="300.2,542.7 358.6,562.8 358.8,557.7 300.4,536.7" fill="#e7c47e" stroke="#e7c47e" stroke-width="0.5"/>
<polygon points="322.1,536.2 323.6,536.2 378.7,557.3 377.4,557.3" fill="#b29868" stroke="#b29868" stroke-width="0.5"/>
<polygon points="323.6,536.2 378.7,557.3 378.8,552.1 323.8,530.2" fill="#e7c47e" stroke="#e7c47e" stroke-width="0.5"/>
<polygon points="345.5,529.8 347.0,529.7 398.8,551.8 397.5,551.8" fill="#b29868" stroke="#b29868" stroke-width="0.5"/>
<polygon points="347.0,529.7 398.8,551.8 398.9,546.6 347.2,523.7" fill="#e7c47e" stroke="#e7c47e" stroke-width="0.5"/>
<polygon points="368.9,523.3 370.4,523.3 418.9,546.2 417.6,546.2" fill="#b29868" stroke="#b29868" stroke-width="0.5"/>
<polygon points="370.4,523.3 418.9,546.2 419.0,541.0 370.6,517.2" fill="#e7c47e" stroke="#e7c47e" stroke-width="0.5"/>
<polygon points="385.0,518.8 386.4,518.8 432.6,542.4 431.4,542.4" fill="#b29868" stroke="#b29868" stroke-width="0.5"/>
<polygon points="386.4,518.8 432.6,542.4 432.7,537.2 386.6,512.8" fill="#e7c47e" stroke="#e7c47e" stroke-width="0.5"/>
<polygon points="392.4,516.8 393.8,516.8 439.0,540.7 437.7,540.7" fill="#b29868" stroke="#b29868" stroke-width="0.5"/>
<polygon points="393.8,516.8 439.0,540.7 439.1,535.5 394.0,510.8" fill="#e7c47e" stroke="#e7c47e" stroke-width="0.5"/>
<polygon points="1028.8,537.6 1030.4,537.6 983.2,559.1 981.9,559.1" fill="#d6c8a8" stroke="#d6c8a8" stroke-width="0.5"/>
<polygon points="1028.8,537.6 981.9,559.1 981.6,553.8 1028.5,531.4" fill="#c0a064" stroke="#c0a064" stroke-width="0.5"/>
<polygon points="415.8,510.3 417.3,510.3 459.1,535.1 457.8,535.1" fill="#b29868" stroke="#b29868" stroke-width="0.5"/>
<polygon points="417.3,510.3 459.1,535.1 459.2,529.9 417.4,504.3" fill="#e7c47e" stroke="#e7c47e" stroke-width="0.5"/>
<polygon points="1003.8,531.3 1005.3,531.3 961.9,553.7 960.6,553.7" fill="#d6c8a8" stroke="#d6c8a8" stroke-width="0.5"/>
<polygon points="1003.8,531.3 960.6,553.7 960.4,548.4 1003.5,525.1" fill="#c0a064" stroke="#c0a064" stroke-width="0.5"/>
<polygon points="439.3,503.8 440.8,503.8 479.2,529.5 478.0,529.6" fill="#b29868" stroke="#b29868" stroke-width="0.5"/>
<polygon points="440.8,503.8 479.2,529.5 479.3,524.4 440.9,497.8" fill="#e7c47e" stroke="#e7c47e" stroke-width="0.5"/>
<polygon points="978.8,525.0 980.4,525.0 940.6,548.3 939.3,548.3" fill="#d6c8a8" stroke="#d6c8a8" stroke-width="0.5"/>
<polygon points="978.8,525.0 939.3,548.3 939.2,543.0 978.6,518.8" fill="#c0a064" stroke="#c0a064" stroke-width="0.5"/>
<polygon points="462.8,497.3 464.3,497.3 499.4,524.0 498.1,524.0" fill="#b29868" stroke="#b29868" stroke-width="0.5"/>
<polygon points="464.3,497.3 499.4,524.0 499.4,518.8 464.4,491.3" fill="#e7c47e" stroke="#e7c47e" stroke-width="0.5"/>
<polygon points="954.0,518.7 955.5,518.7 919.5,542.9 918.2,542.9" fill="#d6c8a8" stroke="#d6c8a8" stroke-width="0.5"/>
<polygon points="954.0,518.7 918.2,542.9 918.0,537.6 953.7,512.5" fill="#c0a064" stroke="#c0a064" stroke-width="0.5"/>
<polygon points="937.0,514.4 938.5,514.4 905.0,539.2 903.7,539.2" fill="#d6c8a8" stroke="#d6c8a8" stroke-width="0.5"/>
<polygon points="937.0,514.4 903.7,539.2 903.6,533.9 936.8,508.2" fill="#c0a064" stroke="#c0a064" stroke-width="0.5"/>
<polygon points="486.3,490.8 487.8,490.8 519.5,518.4 518.3,518.4" fill="#b29868" stroke="#b29868" stroke-width="0.5"/>
<polygon points="487.8,490.8 519.5,518.4 519.6,513.2 487.9,484.8" fill="#e7c47e" stroke="#e7c47e" stroke-width="0.5"/>
<polygon points="929.2,512.4 930.7,512.4 898.4,537.5 897.1,537.5" fill="#d6c8a8" stroke="#d6c8a8" stroke-width="0.5"/>
<polygon points="929.2,512.4 897.1,537.5 896.9,532.2 929.0,506.2" fill="#c0a064" stroke="#c0a064" stroke-width="0.5"/>
<polygon points="509.9,484.3 511.3,484.3 539.7,512.8 538.4,512.9" fill="#b29868" stroke="#b29868" stroke-width="0.5"/>
<polygon points="511.3,484.3 539.7,512.8 539.8,507.7 511.4,478.3" fill="#e7c47e" stroke="#e7c47e" stroke-width="0.5"/>
<polygon points="904.5,506.2 906.0,506.2 877.4,532.1 876.1,532.1" fill="#d6c8a8" stroke="#d6c8a8" stroke-width="0.5"/>
<polygon points="904.5,506.2 876.1,532.1 875.9,526.8 904.3,500.0" fill="#c0a064" stroke="#c0a064" stroke-width="0.5"/>
<polygon points="533.4,477.8 534.9,477.8 559.9,507.3 558.6,507.3" fill="#b29868" stroke="#b29868" stroke-width="0.5"/>
<polygon points="534.9,477.8 559.9,507.3 559.9,502.1 534.9,471.7" fill="#e7c47e" stroke="#e7c47e" stroke-width="0.5"/>
<polygon points="880.0,499.9 881.5,499.9 856.4,526.7 855.1,526.7" fill="#d6c8a8" stroke="#d6c8a8" stroke-width="0.5"/>
<polygon points="880.0,499.9 855.1,526.7 855.0,521.5 879.8,493.8" fill="#c0a064" stroke="#c0a064" stroke-width="0.5"/>
<polygon points="557.0,471.2 558.4,471.2 580.1,501.7 578.8,501.7" fill="#b29868" stroke="#b29868" stroke-width="0.5"/>
<polygon points="558.4,471.2 580.1,501.7 580.1,496.5 558.5,465.2" fill="#e7c47e" stroke="#e7c47e" stroke-width="0.5"/>
<polygon points="855.5,493.7 857.0,493.7 835.5,521.4 834.2,521.4" fill="#d6c8a8" stroke="#d6c8a8" stroke-width="0.5"/>
<polygon points="855.5,493.7 834.2,521.4 834.1,516.1 855.3,487.6" fill="#c0a064" stroke="#c0a064" stroke-width="0.5"/>
<polygon points="580.6,464.7 582.0,464.7 600.3,496.1 599.1,496.1" fill="#b29868" stroke="#b29868" stroke-width="0.5"/>
<polygon points="582.0,464.7 600.3,496.1 600.3,490.9 582.1,458.7" fill="#e7c47e" stroke="#e7c47e" stroke-width="0.5"/>
<polygon points="831.1,487.6 832.6,487.6 814.7,516.1 813.4,516.1" fill="#d6c8a8" stroke="#d6c8a8" stroke-width="0.5"/>
<polygon points="831.1,487.6 813.4,516.1 813.3,510.8 830.9,481.5" fill="#c0a064" stroke="#c0a064" stroke-width="0.5"/>
<polygon points="604.2,458.2 605.7,458.2 620.6,490.5 619.3,490.5" fill="#b29868" stroke="#b29868" stroke-width="0.5"/>
<polygon points="605.7,458.2 620.6,490.5 620.6,485.4 605.7,452.2" fill="#e7c47e" stroke="#e7c47e" stroke-width="0.5"/>
<polygon points="806.8,481.4 808.3,481.4 794.0,510.7 792.7,510.8" fill="#d6c8a8" stroke="#d6c8a8" stroke-width="0.5"/>
<polygon points="806.8,481.4 792.7,510.8 792.6,505.5 806.7,475.3" fill="#c0a064" stroke="#c0a064" stroke-width="0.5"/>
<polygon points="627.8,451.6 629.3,451.6 640.8,484.9 639.5,484.9" fill="#b29868" stroke="#b29868" stroke-width="0.5"/>
<polygon points="629.3,451.6 640.8,484.9 640.8,479.8 629.3,445.6" fill="#e7c47e" stroke="#e7c47e" stroke-width="0.5"/>
<polygon points="782.6,475.3 784.1,475.3 773.3,505.5 772.0,505.5" fill="#d6c8a8" stroke="#d6c8a8" stroke-width="0.5"/>
<polygon points="782.6,475.3 772.0,505.5 771.9,500.2 782.5,469.2" fill="#c0a064" stroke="#c0a064" stroke-width="0.5"/>
<polygon points="651.5,445.1 653.0,445.1 661.1,479.3 659.8,479.4" fill="#b29868" stroke="#b29868" stroke-width="0.5"/>
<polygon points="653.0,445.1 661.1,479.3 661.1,474.2 652.9,439.1" fill="#e7c47e" stroke="#e7c47e" stroke-width="0.5"/>
<polygon points="758.4,469.2 759.9,469.2 752.7,500.2 751.4,500.2" fill="#d6c8a8" stroke="#d6c8a8" stroke-width="0.5"/>
<polygon points="758.4,469.2 751.4,500.2 751.3,495.0 758.4,463.1" fill="#c0a064" stroke="#c0a064" stroke-width="0.5"/>
<polygon points="657.2,443.5 658.6,443.5 665.9,478.0 664.7,478.0" fill="#b29868" stroke="#b29868" stroke-width="0.5"/>
<polygon points="658.6,443.5 665.9,478.0 665.9,472.8 658.6,437.5" fill="#e7c47e" stroke="#e7c47e" stroke-width="0.5"/>
<polygon points="662.9,445.0 664.3,444.9 670.8,479.2 669.6,479.3" fill="#b29868" stroke="#b29868" stroke-width="0.5"/>
<polygon points="664.3,444.9 670.8,479.2 670.8,474.1 664.3,438.9" fill="#e7c47e" stroke="#e7c47e" stroke-width="0.5"/>
<polygon points="734.4,463.1 735.9,463.1 732.1,494.9 730.8,494.9" fill="#d6c8a8" stroke="#d6c8a8" stroke-width="0.5"/>
<polygon points="734.4,463.1 730.8,494.9 730.8,489.7 734.3,457.0" fill="#c0a064" stroke="#c0a064" stroke-width="0.5"/>
<polygon points="686.6,451.0 688.1,451.0 691.2,484.5 689.9,484.5" fill="#b29868" stroke="#b29868" stroke-width="0.5"/>
<polygon points="688.1,451.0 691.2,484.5 691.1,479.3 688.1,444.9" fill="#e7c47e" stroke="#e7c47e" stroke-width="0.5"/>
<polygon points="710.5,457.0 712.0,457.0 711.6,489.7 710.3,489.7" fill="#d6c8a8" stroke="#d6c8a8" stroke-width="0.5"/>
<polygon points="710.5,457.0 710.3,489.7 710.3,484.5 710.4,451.0" fill="#c0a064" stroke="#c0a064" stroke-width="0.5"/>
<polygon points="660.1,451.0 281.9,555.6 283.5,556.1 660.2,451.9" fill="#8c6c3e" stroke="#8c6c3e" stroke-width="0.5"/>
<polygon points="655.4,451.1 1049.9,551.2 1048.6,551.7 655.6,451.9" fill="#8c6c3e" stroke="#8c6c3e" stroke-width="0.5"/>
<polygon points="305.5,661.5 307.7,655.6 310.0,649.7 312.3,643.8 314.8,638.0 317.4,632.3 320.0,626.5 322.8,620.9 325.7,615.3 328.6,609.7 331.7,604.2 334.8,598.8 338.1,593.4 341.4,588.1 344.8,582.9 348.3,577.7 351.9,572.6 355.6,567.6 359.4,562.6 363.3,557.7 367.2,552.8 371.2,548.1 375.3,543.4 379.5,538.8 383.8,534.3 388.1,529.8 392.6,525.5 397.0,521.2 398.6,522.0 394.2,526.3 389.8,530.6 385.5,535.1 381.2,539.6 377.1,544.1 373.0,548.8 369.0,553.5 365.0,558.3 361.2,563.2 357.5,568.1 353.8,573.2 350.2,578.3 346.7,583.4 343.3,588.6 340.0,593.9 336.8,599.2 333.6,604.6 330.6,610.1 327.6,615.6 324.8,621.2 322.0,626.8 319.4,632.5 316.8,638.3 314.4,644.0 312.0,649.9 309.8,655.7 307.6,661.7" fill="#9c7a46" stroke="#9c7a46" stroke-width="0.5"/>
<polygon points="302.6,658.9 307.0,539.1 310.0,540.1 305.6,659.1" fill="#aa8650" stroke="#aa8650" stroke-width="0.5"/>
<polygon points="1024.4,660.8 1022.0,654.6 1019.6,648.5 1017.0,642.5 1014.4,636.5 1011.6,630.6 1008.7,624.7 1005.8,618.9 1002.7,613.1 999.5,607.5 996.3,601.8 992.9,596.3 989.4,590.8 985.9,585.3 982.2,580.0 978.5,574.7 974.6,569.5 970.7,564.3 966.7,559.3 962.6,554.3 958.4,549.4 954.1,544.5 949.8,539.8 945.4,535.1 940.9,530.6 936.3,526.1 931.6,521.7 926.9,517.3 925.8,518.2 930.5,522.5 935.1,526.9 939.7,531.4 944.1,535.9 948.5,540.5 952.9,545.3 957.1,550.1 961.3,554.9 965.3,559.9 969.3,564.9 973.2,570.1 977.0,575.3 980.8,580.5 984.4,585.8 987.9,591.2 991.4,596.7 994.7,602.3 998.0,607.9 1001.1,613.5 1004.2,619.2 1007.1,625.0 1010.0,630.9 1012.8,636.8 1015.4,642.7 1017.9,648.7 1020.4,654.8 1022.7,660.9" fill="#8c6c3e" stroke="#8c6c3e" stroke-width="0.5"/>
<polygon points="1021.7,534.0 1027.1,658.0 1024.6,658.2 1019.4,535.1" fill="#967442" stroke="#967442" stroke-width="0.5"/>
<polygon points="660.1,451.0 281.9,555.6 278.1,538.6 655.4,434.1" fill="#cda668" stroke="#cda668" stroke-width="0.5"/>
<polygon points="655.4,451.1 1049.9,551.2 1053.9,533.5 660.0,434.1" fill="#cda668" stroke="#cda668" stroke-width="0.5"/>
<polyline points="659.7,449.8 281.7,554.4" fill="none" stroke="#6e4f24" stroke-width="0.55" stroke-opacity="0.78"/>
<polyline points="659.4,448.6 281.4,553.1" fill="none" stroke="#6e4f24" stroke-width="0.55" stroke-opacity="0.78"/>
<polyline points="659.0,447.4 281.1,551.9" fill="none" stroke="#6e4f24" stroke-width="0.55" stroke-opacity="0.78"/>
<polyline points="658.7,446.2 280.8,550.7" fill="none" stroke="#6e4f24" stroke-width="0.55" stroke-opacity="0.78"/>
<polyline points="658.4,445.0 280.6,549.5" fill="none" stroke="#6e4f24" stroke-width="0.55" stroke-opacity="0.78"/>
<polyline points="658.0,443.8 280.3,548.3" fill="none" stroke="#6e4f24" stroke-width="0.55" stroke-opacity="0.78"/>
<polyline points="657.7,442.6 280.0,547.1" fill="none" stroke="#6e4f24" stroke-width="0.55" stroke-opacity="0.78"/>
<polyline points="657.4,441.3 279.7,545.9" fill="none" stroke="#6e4f24" stroke-width="0.55" stroke-opacity="0.78"/>
<polyline points="657.0,440.1 279.5,544.6" fill="none" stroke="#6e4f24" stroke-width="0.55" stroke-opacity="0.78"/>
<polyline points="656.7,438.9 279.2,543.4" fill="none" stroke="#6e4f24" stroke-width="0.55" stroke-opacity="0.78"/>
<polyline points="656.4,437.7 278.9,542.2" fill="none" stroke="#6e4f24" stroke-width="0.55" stroke-opacity="0.78"/>
<polyline points="656.0,436.5 278.6,541.0" fill="none" stroke="#6e4f24" stroke-width="0.55" stroke-opacity="0.78"/>
<polyline points="655.7,435.3 278.4,539.8" fill="none" stroke="#6e4f24" stroke-width="0.55" stroke-opacity="0.78"/>
<polyline points="655.7,449.8 1050.2,550.0" fill="none" stroke="#6e4f24" stroke-width="0.55" stroke-opacity="0.78"/>
<polyline points="656.1,448.6 1050.5,548.7" fill="none" stroke="#6e4f24" stroke-width="0.55" stroke-opacity="0.78"/>
<polyline points="656.4,447.4 1050.8,547.4" fill="none" stroke="#6e4f24" stroke-width="0.55" stroke-opacity="0.78"/>
<polyline points="656.7,446.2 1051.0,546.2" fill="none" stroke="#6e4f24" stroke-width="0.55" stroke-opacity="0.78"/>
<polyline points="657.0,445.0 1051.3,544.9" fill="none" stroke="#6e4f24" stroke-width="0.55" stroke-opacity="0.78"/>
<polyline points="657.4,443.8 1051.6,543.6" fill="none" stroke="#6e4f24" stroke-width="0.55" stroke-opacity="0.78"/>
<polyline points="657.7,442.6 1051.9,542.4" fill="none" stroke="#6e4f24" stroke-width="0.55" stroke-opacity="0.78"/>
<polyline points="658.0,441.3 1052.2,541.1" fill="none" stroke="#6e4f24" stroke-width="0.55" stroke-opacity="0.78"/>
<polyline points="658.4,440.1 1052.5,539.8" fill="none" stroke="#6e4f24" stroke-width="0.55" stroke-opacity="0.78"/>
<polyline points="658.7,438.9 1052.8,538.6" fill="none" stroke="#6e4f24" stroke-width="0.55" stroke-opacity="0.78"/>
<polyline points="659.0,437.7 1053.1,537.3" fill="none" stroke="#6e4f24" stroke-width="0.55" stroke-opacity="0.78"/>
<polyline points="659.4,436.5 1053.4,536.0" fill="none" stroke="#6e4f24" stroke-width="0.55" stroke-opacity="0.78"/>
<polyline points="659.7,435.3 1053.7,534.8" fill="none" stroke="#6e4f24" stroke-width="0.55" stroke-opacity="0.78"/>
<polygon points="301.1,708.1 303.0,659.0 307.8,659.3 306.1,707.8" fill="#69685f" stroke="#69685f" stroke-width="0.5"/>
<polygon points="1026.2,658.1 1028.4,708.9 1024.4,708.6 1022.3,658.4" fill="#5c5b53" stroke="#5c5b53" stroke-width="0.5"/>
<polygon points="289.4,656.1 291.6,649.9 294.0,643.7 296.5,637.5 299.1,631.4 301.8,625.4 304.6,619.4 307.6,613.4 310.6,607.5 313.7,601.7 316.9,596.0 320.2,590.3 323.6,584.6 327.1,579.1 330.7,573.6 334.4,568.1 338.2,562.8 342.1,557.5 346.1,552.2 350.1,547.1 354.3,542.0 358.5,537.1 362.8,532.1 367.2,527.3 371.7,522.6 376.3,517.9 380.9,513.3 385.6,508.8 397.0,521.2 392.6,525.5 388.1,529.8 383.8,534.3 379.5,538.8 375.3,543.4 371.2,548.1 367.2,552.8 363.3,557.7 359.4,562.6 355.6,567.6 351.9,572.6 348.3,577.7 344.8,582.9 341.4,588.1 338.1,593.4 334.8,598.8 331.7,604.2 328.6,609.7 325.7,615.3 322.8,620.9 320.0,626.5 317.4,632.3 314.8,638.0 312.3,643.8 310.0,649.7 307.7,655.6 305.5,661.5" fill="#cda668" stroke="#cda668" stroke-width="0.5"/>
<polygon points="1041.7,655.1 1039.2,648.6 1036.7,642.2 1034.0,635.9 1031.1,629.6 1028.2,623.4 1025.2,617.2 1022.0,611.1 1018.8,605.0 1015.4,599.1 1012.0,593.1 1008.4,587.3 1004.8,581.5 1001.0,575.8 997.2,570.2 993.2,564.6 989.2,559.2 985.0,553.8 980.8,548.4 976.5,543.2 972.1,538.1 967.6,533.0 963.0,528.0 958.4,523.1 953.6,518.3 948.8,513.6 943.9,509.0 938.9,504.5 926.9,517.3 931.6,521.7 936.3,526.1 940.9,530.6 945.4,535.1 949.8,539.8 954.1,544.5 958.4,549.4 962.6,554.3 966.7,559.3 970.7,564.3 974.6,569.5 978.5,574.7 982.2,580.0 985.9,585.3 989.4,590.8 992.9,596.3 996.3,601.8 999.5,607.5 1002.7,613.1 1005.8,618.9 1008.7,624.7 1011.6,630.6 1014.4,636.5 1017.0,642.5 1019.6,648.5 1022.0,654.6 1024.4,660.8" fill="#cda668" stroke="#cda668" stroke-width="0.5"/>
<polyline points="290.5,656.5 292.8,650.3 295.2,644.1 297.6,638.0 300.2,631.9 302.9,625.9 305.7,619.9 308.6,614.0 311.6,608.1 314.8,602.3 318.0,596.5 321.3,590.9 324.7,585.3 328.2,579.7 331.7,574.2 335.4,568.8 339.2,563.5 343.1,558.2 347.0,553.0 351.1,547.9 355.2,542.8 359.4,537.8 363.7,532.9 368.1,528.1 372.6,523.4 377.1,518.8 381.7,514.2 386.4,509.7" fill="none" stroke="#6e4f24" stroke-width="0.55" stroke-opacity="0.78"/>
<polyline points="291.7,656.9 293.9,650.7 296.3,644.5 298.8,638.4 301.4,632.4 304.0,626.3 306.8,620.4 309.7,614.5 312.7,608.6 315.8,602.9 319.0,597.1 322.3,591.5 325.7,585.9 329.2,580.3 332.7,574.9 336.4,569.5 340.2,564.2 344.0,558.9 348.0,553.7 352.0,548.6 356.1,543.6 360.3,538.6 364.6,533.7 369.0,529.0 373.4,524.2 378.0,519.6 382.6,515.1 387.2,510.6" fill="none" stroke="#6e4f24" stroke-width="0.55" stroke-opacity="0.78"/>
<polyline points="292.8,657.3 295.1,651.1 297.4,645.0 299.9,638.9 302.5,632.8 305.2,626.8 307.9,620.9 310.8,615.0 313.8,609.2 316.9,603.4 320.1,597.7 323.3,592.1 326.7,586.5 330.2,581.0 333.8,575.5 337.4,570.2 341.2,564.9 345.0,559.6 348.9,554.5 352.9,549.4 357.0,544.4 361.2,539.4 365.5,534.6 369.9,529.8 374.3,525.1 378.8,520.5 383.4,515.9 388.1,511.5" fill="none" stroke="#6e4f24" stroke-width="0.55" stroke-opacity="0.78"/>
<polyline points="294.0,657.7 296.2,651.5 298.6,645.4 301.0,639.3 303.6,633.3 306.3,627.3 309.0,621.4 311.9,615.6 314.9,609.8 318.0,604.0 321.1,598.3 324.4,592.7 327.8,587.1 331.2,581.6 334.8,576.2 338.4,570.9 342.1,565.6 346.0,560.3 349.9,555.2 353.9,550.1 358.0,545.1 362.1,540.2 366.4,535.4 370.7,530.6 375.2,525.9 379.7,521.3 384.2,516.8 388.9,512.4" fill="none" stroke="#6e4f24" stroke-width="0.55" stroke-opacity="0.78"/>
<polyline points="295.1,658.1 297.4,651.9 299.7,645.8 302.2,639.8 304.7,633.8 307.4,627.8 310.1,621.9 313.0,616.1 316.0,610.3 319.0,604.6 322.2,598.9 325.4,593.3 328.8,587.8 332.2,582.3 335.8,576.9 339.4,571.5 343.1,566.3 346.9,561.1 350.8,555.9 354.8,550.9 358.9,545.9 363.0,541.0 367.3,536.2 371.6,531.4 376.0,526.7 380.5,522.2 385.1,517.7 389.7,513.2" fill="none" stroke="#6e4f24" stroke-width="0.55" stroke-opacity="0.78"/>
<polyline points="296.3,658.4 298.5,652.3 300.9,646.2 303.3,640.2 305.8,634.2 308.5,628.3 311.2,622.4 314.1,616.6 317.0,610.9 320.1,605.2 323.2,599.5 326.5,593.9 329.8,588.4 333.2,582.9 336.8,577.5 340.4,572.2 344.1,567.0 347.9,561.8 351.8,556.7 355.8,551.6 359.8,546.7 364.0,541.8 368.2,537.0 372.5,532.2 376.9,527.6 381.3,523.0 385.9,518.5 390.5,514.1" fill="none" stroke="#6e4f24" stroke-width="0.55" stroke-opacity="0.78"/>
<polyline points="297.4,658.8 299.7,652.7 302.0,646.7 304.4,640.7 307.0,634.7 309.6,628.8 312.3,623.0 315.2,617.2 318.1,611.4 321.2,605.7 324.3,600.1 327.5,594.5 330.8,589.0 334.3,583.6 337.8,578.2 341.4,572.9 345.1,567.7 348.9,562.5 352.7,557.4 356.7,552.4 360.7,547.4 364.9,542.6 369.1,537.8 373.4,533.1 377.7,528.4 382.2,523.9 386.7,519.4 391.3,515.0" fill="none" stroke="#6e4f24" stroke-width="0.55" stroke-opacity="0.78"/>
<polyline points="298.6,659.2 300.8,653.1 303.1,647.1 305.5,641.1 308.1,635.2 310.7,629.3 313.4,623.5 316.3,617.7 319.2,612.0 322.2,606.3 325.3,600.7 328.6,595.1 331.9,589.7 335.3,584.2 338.8,578.9 342.4,573.6 346.1,568.4 349.8,563.2 353.7,558.1 357.6,553.1 361.7,548.2 365.8,543.4 370.0,538.6 374.3,533.9 378.6,529.3 383.0,524.7 387.6,520.3 392.1,515.9" fill="none" stroke="#6e4f24" stroke-width="0.55" stroke-opacity="0.78"/>
<polyline points="299.7,659.6 302.0,653.5 304.3,647.5 306.7,641.6 309.2,635.7 311.8,629.8 314.5,624.0 317.4,618.2 320.3,612.5 323.3,606.9 326.4,601.3 329.6,595.8 332.9,590.3 336.3,584.9 339.8,579.5 343.4,574.3 347.0,569.1 350.8,563.9 354.6,558.9 358.6,553.9 362.6,549.0 366.7,544.1 370.9,539.4 375.1,534.7 379.5,530.1 383.9,525.6 388.4,521.1 393.0,516.8" fill="none" stroke="#6e4f24" stroke-width="0.55" stroke-opacity="0.78"/>
<polyline points="300.9,660.0 303.1,654.0 305.4,648.0 307.8,642.0 310.3,636.1 312.9,630.3 315.6,624.5 318.4,618.8 321.3,613.1 324.4,607.4 327.5,601.9 330.7,596.4 333.9,590.9 337.3,585.5 340.8,580.2 344.4,575.0 348.0,569.8 351.8,564.7 355.6,559.6 359.5,554.7 363.5,549.8 367.6,544.9 371.8,540.2 376.0,535.5 380.3,530.9 384.7,526.4 389.2,522.0 393.8,517.7" fill="none" stroke="#6e4f24" stroke-width="0.55" stroke-opacity="0.78"/>
<polyline points="302.1,660.4 304.3,654.4 306.5,648.4 308.9,642.5 311.4,636.6 314.0,630.8 316.7,625.0 319.5,619.3 322.4,613.6 325.4,608.0 328.5,602.5 331.7,597.0 335.0,591.5 338.3,586.2 341.8,580.9 345.4,575.6 349.0,570.5 352.7,565.4 356.6,560.4 360.5,555.4 364.4,550.5 368.5,545.7 372.7,541.0 376.9,536.3 381.2,531.8 385.6,527.3 390.1,522.9 394.6,518.5" fill="none" stroke="#6e4f24" stroke-width="0.55" stroke-opacity="0.78"/>
<polyline points="303.2,660.8 305.4,654.8 307.7,648.8 310.1,642.9 312.6,637.1 315.1,631.3 317.8,625.5 320.6,619.8 323.5,614.2 326.5,608.6 329.6,603.1 332.7,597.6 336.0,592.2 339.4,586.8 342.8,581.5 346.4,576.3 350.0,571.2 353.7,566.1 357.5,561.1 361.4,556.2 365.4,551.3 369.4,546.5 373.6,541.8 377.8,537.2 382.1,532.6 386.4,528.1 390.9,523.7 395.4,519.4" fill="none" stroke="#6e4f24" stroke-width="0.55" stroke-opacity="0.78"/>
<polyline points="304.4,661.2 306.5,655.2 308.8,649.3 311.2,643.4 313.7,637.5 316.3,631.8 318.9,626.0 321.7,620.4 324.6,614.7 327.6,609.2 330.6,603.6 333.8,598.2 337.0,592.8 340.4,587.5 343.8,582.2 347.4,577.0 351.0,571.9 354.7,566.8 358.5,561.8 362.3,556.9 366.3,552.1 370.3,547.3 374.5,542.6 378.7,538.0 382.9,533.5 387.3,529.0 391.7,524.6 396.2,520.3" fill="none" stroke="#6e4f24" stroke-width="0.55" stroke-opacity="0.78"/>
<polyline points="1040.5,655.5 1038.0,649.1 1035.4,642.7 1032.7,636.4 1029.9,630.1 1027.0,623.9 1024.0,617.7 1020.9,611.6 1017.6,605.6 1014.3,599.7 1010.9,593.8 1007.3,587.9 1003.7,582.2 999.9,576.5 996.1,570.9 992.2,565.4 988.1,559.9 984.0,554.5 979.8,549.2 975.5,544.0 971.1,538.9 966.6,533.8 962.1,528.9 957.4,524.0 952.7,519.2 947.9,514.5 943.0,509.9 938.0,505.4" fill="none" stroke="#6e4f24" stroke-width="0.55" stroke-opacity="0.78"/>
<polyline points="1039.2,655.9 1036.8,649.5 1034.2,643.1 1031.5,636.8 1028.7,630.6 1025.8,624.4 1022.8,618.3 1019.7,612.2 1016.5,606.2 1013.2,600.3 1009.7,594.4 1006.2,588.6 1002.6,582.8 998.9,577.2 995.0,571.6 991.1,566.1 987.1,560.6 983.0,555.3 978.8,550.0 974.5,544.8 970.1,539.7 965.7,534.6 961.1,529.7 956.5,524.8 951.8,520.1 947.0,515.4 942.1,510.8 937.2,506.3" fill="none" stroke="#6e4f24" stroke-width="0.55" stroke-opacity="0.78"/>
<polyline points="1038.0,656.3 1035.6,649.9 1033.0,643.6 1030.3,637.3 1027.5,631.1 1024.7,624.9 1021.7,618.8 1018.6,612.8 1015.3,606.8 1012.0,600.9 1008.6,595.0 1005.1,589.2 1001.5,583.5 997.8,577.9 994.0,572.3 990.1,566.8 986.1,561.4 982.0,556.0 977.8,550.8 973.5,545.6 969.2,540.5 964.7,535.5 960.2,530.5 955.6,525.7 950.9,520.9 946.1,516.3 941.3,511.7 936.3,507.2" fill="none" stroke="#6e4f24" stroke-width="0.55" stroke-opacity="0.78"/>
<polyline points="1036.8,656.7 1034.3,650.4 1031.8,644.0 1029.1,637.8 1026.4,631.6 1023.5,625.4 1020.5,619.3 1017.4,613.3 1014.2,607.4 1010.9,601.5 1007.5,595.6 1004.0,589.9 1000.4,584.2 996.7,578.5 992.9,573.0 989.0,567.5 985.0,562.1 980.9,556.8 976.8,551.5 972.5,546.4 968.2,541.3 963.8,536.3 959.2,531.4 954.6,526.6 950.0,521.8 945.2,517.2 940.4,512.6 935.5,508.2" fill="none" stroke="#6e4f24" stroke-width="0.55" stroke-opacity="0.78"/>
<polyline points="1035.5,657.1 1033.1,650.8 1030.6,644.5 1027.9,638.3 1025.2,632.1 1022.3,626.0 1019.3,619.9 1016.2,613.9 1013.0,607.9 1009.8,602.1 1006.4,596.2 1002.9,590.5 999.3,584.8 995.6,579.2 991.8,573.7 988.0,568.2 984.0,562.8 979.9,557.5 975.8,552.3 971.5,547.2 967.2,542.1 962.8,537.1 958.3,532.2 953.7,527.4 949.1,522.7 944.3,518.1 939.5,513.5 934.6,509.1" fill="none" stroke="#6e4f24" stroke-width="0.55" stroke-opacity="0.78"/>
<polyline points="1034.3,657.5 1031.9,651.2 1029.3,644.9 1026.7,638.7 1024.0,632.6 1021.1,626.5 1018.1,620.4 1015.1,614.4 1011.9,608.5 1008.6,602.7 1005.2,596.9 1001.8,591.1 998.2,585.5 994.5,579.9 990.8,574.4 986.9,568.9 982.9,563.6 978.9,558.3 974.8,553.1 970.5,547.9 966.2,542.9 961.8,537.9 957.4,533.1 952.8,528.3 948.1,523.6 943.4,518.9 938.6,514.4 933.8,510.0" fill="none" stroke="#6e4f24" stroke-width="0.55" stroke-opacity="0.78"/>
<polyline points="1033.1,657.9 1030.6,651.6 1028.1,645.4 1025.5,639.2 1022.8,633.1 1019.9,627.0 1017.0,621.0 1013.9,615.0 1010.7,609.1 1007.5,603.3 1004.1,597.5 1000.7,591.8 997.1,586.1 993.4,580.6 989.7,575.1 985.8,569.7 981.9,564.3 977.9,559.0 973.8,553.8 969.5,548.7 965.2,543.7 960.9,538.8 956.4,533.9 951.9,529.1 947.2,524.4 942.5,519.8 937.8,515.3 932.9,510.9" fill="none" stroke="#6e4f24" stroke-width="0.55" stroke-opacity="0.78"/>
<polyline points="1031.8,658.3 1029.4,652.1 1026.9,645.8 1024.3,639.7 1021.6,633.6 1018.7,627.5 1015.8,621.5 1012.7,615.6 1009.6,609.7 1006.3,603.9 1003.0,598.1 999.6,592.4 996.0,586.8 992.4,581.2 988.6,575.8 984.8,570.4 980.9,565.0 976.8,559.8 972.7,554.6 968.5,549.5 964.3,544.5 959.9,539.6 955.5,534.7 950.9,530.0 946.3,525.3 941.6,520.7 936.9,516.2 932.0,511.8" fill="none" stroke="#6e4f24" stroke-width="0.55" stroke-opacity="0.78"/>
<polyline points="1030.6,658.7 1028.2,652.5 1025.7,646.3 1023.1,640.1 1020.4,634.1 1017.5,628.0 1014.6,622.0 1011.6,616.1 1008.4,610.3 1005.2,604.5 1001.9,598.7 998.4,593.1 994.9,587.5 991.3,581.9 987.6,576.5 983.7,571.1 979.8,565.8 975.8,560.5 971.7,555.4 967.6,550.3 963.3,545.3 958.9,540.4 954.5,535.6 950.0,530.8 945.4,526.2 940.8,521.6 936.0,517.1 931.2,512.7" fill="none" stroke="#6e4f24" stroke-width="0.55" stroke-opacity="0.78"/>
<polyline points="1029.3,659.1 1027.0,652.9 1024.5,646.7 1021.9,640.6 1019.2,634.5 1016.4,628.5 1013.4,622.6 1010.4,616.7 1007.3,610.8 1004.1,605.1 1000.8,599.3 997.3,593.7 993.8,588.1 990.2,582.6 986.5,577.2 982.7,571.8 978.8,566.5 974.8,561.3 970.7,556.2 966.6,551.1 962.3,546.1 958.0,541.2 953.6,536.4 949.1,531.7 944.5,527.1 939.9,522.5 935.1,518.0 930.3,513.7" fill="none" stroke="#6e4f24" stroke-width="0.55" stroke-opacity="0.78"/>
<polyline points="1028.1,659.5 1025.7,653.3 1023.3,647.2 1020.7,641.1 1018.0,635.0 1015.2,629.0 1012.3,623.1 1009.3,617.2 1006.1,611.4 1002.9,605.7 999.6,600.0 996.2,594.3 992.7,588.8 989.1,583.3 985.4,577.9 981.6,572.5 977.7,567.3 973.8,562.1 969.7,556.9 965.6,551.9 961.3,546.9 957.0,542.1 952.6,537.3 948.2,532.6 943.6,527.9 939.0,523.4 934.3,518.9 929.5,514.6" fill="none" stroke="#6e4f24" stroke-width="0.55" stroke-opacity="0.78"/>
<polyline points="1026.9,660.0 1024.5,653.8 1022.0,647.6 1019.5,641.6 1016.8,635.5 1014.0,629.6 1011.1,623.6 1008.1,617.8 1005.0,612.0 1001.8,606.3 998.5,600.6 995.1,595.0 991.6,589.4 988.0,584.0 984.3,578.6 980.6,573.2 976.7,568.0 972.7,562.8 968.7,557.7 964.6,552.7 960.4,547.7 956.1,542.9 951.7,538.1 947.2,533.4 942.7,528.8 938.1,524.3 933.4,519.8 928.6,515.5" fill="none" stroke="#6e4f24" stroke-width="0.55" stroke-opacity="0.78"/>
<polyline points="1025.6,660.4 1023.3,654.2 1020.8,648.1 1018.2,642.0 1015.6,636.0 1012.8,630.1 1009.9,624.2 1006.9,618.3 1003.8,612.6 1000.7,606.9 997.4,601.2 994.0,595.6 990.5,590.1 986.9,584.6 983.3,579.3 979.5,574.0 975.7,568.7 971.7,563.6 967.7,558.5 963.6,553.5 959.4,548.6 955.1,543.7 950.7,538.9 946.3,534.3 941.8,529.7 937.2,525.2 932.5,520.8 927.8,516.4" fill="none" stroke="#6e4f24" stroke-width="0.55" stroke-opacity="0.78"/>
<polygon points="286.6,708.0 301.1,708.1 303.0,659.0 288.5,659.0" fill="#808076" stroke="#808076" stroke-width="0.5"/>
<polygon points="1028.4,708.9 1044.0,708.9 1041.8,658.1 1026.2,658.1" fill="#808076" stroke="#808076" stroke-width="0.5"/>
<polygon points="293.0,658.9 302.6,658.9 307.0,539.1 297.5,539.1" fill="#cda668" stroke="#cda668" stroke-width="0.5"/>
<polyline points="301.0,658.9 305.4,539.1" fill="none" stroke="#6e4f24" stroke-width="0.55" stroke-opacity="0.78"/>
<polyline points="299.4,658.9 303.9,539.1" fill="none" stroke="#6e4f24" stroke-width="0.55" stroke-opacity="0.78"/>
<polyline points="297.8,658.9 302.3,539.1" fill="none" stroke="#6e4f24" stroke-width="0.55" stroke-opacity="0.78"/>
<polyline points="296.2,658.9 300.7,539.1" fill="none" stroke="#6e4f24" stroke-width="0.55" stroke-opacity="0.78"/>
<polyline points="294.6,658.9 299.1,539.1" fill="none" stroke="#6e4f24" stroke-width="0.55" stroke-opacity="0.78"/>
<polyline points="302.3,539.1 301.7,531.8" fill="none" stroke="#2a1c08" stroke-width="0.80" stroke-opacity="0.80"/>
<polygon points="1027.1,658.0 1037.4,658.0 1031.9,533.9 1021.7,534.0" fill="#cda668" stroke="#cda668" stroke-width="0.5"/>
<polyline points="1028.8,658.0 1023.4,534.0" fill="none" stroke="#6e4f24" stroke-width="0.55" stroke-opacity="0.78"/>
<polyline points="1030.5,658.0 1025.1,534.0" fill="none" stroke="#6e4f24" stroke-width="0.55" stroke-opacity="0.78"/>
<polyline points="1032.2,658.0 1026.8,534.0" fill="none" stroke="#6e4f24" stroke-width="0.55" stroke-opacity="0.78"/>
<polyline points="1034.0,658.0 1028.5,533.9" fill="none" stroke="#6e4f24" stroke-width="0.55" stroke-opacity="0.78"/>
<polyline points="1035.7,658.0 1030.2,533.9" fill="none" stroke="#6e4f24" stroke-width="0.55" stroke-opacity="0.78"/>
<polyline points="1026.8,534.0 1027.4,526.6" fill="none" stroke="#2a1c08" stroke-width="0.80" stroke-opacity="0.80"/>
<polygon points="214.5,513.7 216.2,513.7 298.7,542.2 297.2,542.2" fill="#b29868" stroke="#b29868" stroke-width="0.5"/>
<polygon points="216.2,513.7 298.7,542.2 298.9,536.1 216.6,506.5" fill="#e7c47e" stroke="#e7c47e" stroke-width="0.5"/>
<polygon points="242.6,505.9 244.3,505.9 322.1,535.7 320.7,535.7" fill="#b29868" stroke="#b29868" stroke-width="0.5"/>
<polygon points="244.3,505.9 322.1,535.7 322.3,529.6 244.7,498.7" fill="#e7c47e" stroke="#e7c47e" stroke-width="0.5"/>
<polygon points="270.8,498.1 272.5,498.1 345.6,529.2 344.2,529.2" fill="#b29868" stroke="#b29868" stroke-width="0.5"/>
<polygon points="272.5,498.1 345.6,529.2 345.8,523.1 272.8,490.9" fill="#e7c47e" stroke="#e7c47e" stroke-width="0.5"/>
<polygon points="299.0,490.3 300.7,490.3 369.1,522.7 367.7,522.7" fill="#b29868" stroke="#b29868" stroke-width="0.5"/>
<polygon points="300.7,490.3 369.1,522.7 369.3,516.6 301.0,483.0" fill="#e7c47e" stroke="#e7c47e" stroke-width="0.5"/>
<polygon points="318.3,484.9 320.0,484.9 385.2,518.2 383.8,518.2" fill="#b29868" stroke="#b29868" stroke-width="0.5"/>
<polygon points="320.0,484.9 385.2,518.2 385.4,512.2 320.3,477.7" fill="#e7c47e" stroke="#e7c47e" stroke-width="0.5"/>
<polygon points="327.2,482.4 328.9,482.4 392.6,516.1 391.2,516.2" fill="#b29868" stroke="#b29868" stroke-width="0.5"/>
<polygon points="328.9,482.4 392.6,516.1 392.8,510.1 329.2,475.2" fill="#e7c47e" stroke="#e7c47e" stroke-width="0.5"/>
<polygon points="1097.2,506.4 1099.0,506.3 1031.6,537.1 1030.1,537.1" fill="#d6c8a8" stroke="#d6c8a8" stroke-width="0.5"/>
<polygon points="1097.2,506.4 1030.1,537.1 1029.8,530.8 1096.8,498.8" fill="#c0a064" stroke="#c0a064" stroke-width="0.5"/>
<polygon points="355.4,474.6 357.2,474.6 416.2,509.6 414.7,509.6" fill="#b29868" stroke="#b29868" stroke-width="0.5"/>
<polygon points="357.2,474.6 416.2,509.6 416.3,503.6 357.4,467.4" fill="#e7c47e" stroke="#e7c47e" stroke-width="0.5"/>
<polygon points="1066.6,498.7 1068.5,498.7 1006.5,530.7 1004.9,530.7" fill="#d6c8a8" stroke="#d6c8a8" stroke-width="0.5"/>
<polygon points="1066.6,498.7 1004.9,530.7 1004.7,524.5 1066.3,491.2" fill="#c0a064" stroke="#c0a064" stroke-width="0.5"/>
<polygon points="383.7,466.8 385.4,466.7 439.7,503.1 438.3,503.1" fill="#b29868" stroke="#b29868" stroke-width="0.5"/>
<polygon points="385.4,466.7 439.7,503.1 439.9,497.1 385.6,459.5" fill="#e7c47e" stroke="#e7c47e" stroke-width="0.5"/>
<polygon points="1036.2,491.1 1038.1,491.1 981.4,524.4 979.9,524.4" fill="#d6c8a8" stroke="#d6c8a8" stroke-width="0.5"/>
<polygon points="1036.2,491.1 979.9,524.4 979.6,518.1 1035.9,483.6" fill="#c0a064" stroke="#c0a064" stroke-width="0.5"/>
<polygon points="412.0,458.9 413.7,458.9 463.3,496.6 461.9,496.6" fill="#b29868" stroke="#b29868" stroke-width="0.5"/>
<polygon points="413.7,458.9 463.3,496.6 463.5,490.5 413.9,451.7" fill="#e7c47e" stroke="#e7c47e" stroke-width="0.5"/>
<polygon points="1005.9,483.6 1007.8,483.6 956.4,518.0 954.9,518.0" fill="#d6c8a8" stroke="#d6c8a8" stroke-width="0.5"/>
<polygon points="1005.9,483.6 954.9,518.0 954.7,511.8 1005.6,476.1" fill="#c0a064" stroke="#c0a064" stroke-width="0.5"/>
<polygon points="985.3,478.4 987.1,478.4 939.4,513.7 937.9,513.7" fill="#d6c8a8" stroke="#d6c8a8" stroke-width="0.5"/>
<polygon points="985.3,478.4 937.9,513.7 937.7,507.5 985.0,471.0" fill="#c0a064" stroke="#c0a064" stroke-width="0.5"/>
<polygon points="440.3,451.0 442.1,451.0 486.9,490.1 485.5,490.1" fill="#b29868" stroke="#b29868" stroke-width="0.5"/>
<polygon points="442.1,451.0 486.9,490.1 487.0,484.0 442.2,443.8" fill="#e7c47e" stroke="#e7c47e" stroke-width="0.5"/>
<polygon points="975.8,476.1 977.6,476.0 931.6,511.7 930.0,511.8" fill="#d6c8a8" stroke="#d6c8a8" stroke-width="0.5"/>
<polygon points="975.8,476.1 930.0,511.8 929.8,505.6 975.5,468.6" fill="#c0a064" stroke="#c0a064" stroke-width="0.5"/>
<polygon points="468.7,443.2 470.5,443.1 510.6,483.5 509.1,483.5" fill="#b29868" stroke="#b29868" stroke-width="0.5"/>
<polygon points="470.5,443.1 510.6,483.5 510.6,477.5 470.6,435.9" fill="#e7c47e" stroke="#e7c47e" stroke-width="0.5"/>
<polygon points="945.8,468.6 947.6,468.6 906.8,505.5 905.3,505.5" fill="#d6c8a8" stroke="#d6c8a8" stroke-width="0.5"/>
<polygon points="945.8,468.6 905.3,505.5 905.1,499.3 945.5,461.1" fill="#c0a064" stroke="#c0a064" stroke-width="0.5"/>
<polygon points="497.1,435.3 498.8,435.2 534.2,477.0 532.7,477.0" fill="#b29868" stroke="#b29868" stroke-width="0.5"/>
<polygon points="498.8,435.2 534.2,477.0 534.3,470.9 499.0,428.0" fill="#e7c47e" stroke="#e7c47e" stroke-width="0.5"/>
<polygon points="915.9,461.1 917.8,461.1 882.1,499.2 880.6,499.2" fill="#d6c8a8" stroke="#d6c8a8" stroke-width="0.5"/>
<polygon points="915.9,461.1 880.6,499.2 880.4,493.1 915.7,453.7" fill="#c0a064" stroke="#c0a064" stroke-width="0.5"/>
<polygon points="525.5,427.4 527.3,427.4 557.9,470.4 556.4,470.4" fill="#b29868" stroke="#b29868" stroke-width="0.5"/>
<polygon points="527.3,427.4 557.9,470.4 557.9,464.4 527.4,420.1" fill="#e7c47e" stroke="#e7c47e" stroke-width="0.5"/>
<polygon points="886.2,453.7 888.0,453.7 857.5,493.0 856.0,493.0" fill="#d6c8a8" stroke="#d6c8a8" stroke-width="0.5"/>
<polygon points="886.2,453.7 856.0,493.0 855.9,486.9 886.0,446.3" fill="#c0a064" stroke="#c0a064" stroke-width="0.5"/>
<polygon points="554.0,419.5 555.7,419.5 581.6,463.9 580.1,463.9" fill="#b29868" stroke="#b29868" stroke-width="0.5"/>
<polygon points="555.7,419.5 581.6,463.9 581.6,457.8 555.8,412.2" fill="#e7c47e" stroke="#e7c47e" stroke-width="0.5"/>
<polygon points="856.6,446.3 858.4,446.3 833.1,486.8 831.5,486.8" fill="#d6c8a8" stroke="#d6c8a8" stroke-width="0.5"/>
<polygon points="856.6,446.3 831.5,486.8 831.4,480.7 856.4,439.0" fill="#c0a064" stroke="#c0a064" stroke-width="0.5"/>
<polygon points="582.4,411.6 584.2,411.5 605.3,457.3 603.8,457.3" fill="#b29868" stroke="#b29868" stroke-width="0.5"/>
<polygon points="584.2,411.5 605.3,457.3 605.3,451.3 584.2,404.3" fill="#e7c47e" stroke="#e7c47e" stroke-width="0.5"/>
<polygon points="827.2,439.0 829.0,438.9 808.7,480.6 807.1,480.6" fill="#d6c8a8" stroke="#d6c8a8" stroke-width="0.5"/>
<polygon points="827.2,439.0 807.1,480.6 807.0,474.5 827.0,431.6" fill="#c0a064" stroke="#c0a064" stroke-width="0.5"/>
<polygon points="610.9,403.7 612.7,403.6 629.0,450.7 627.5,450.8" fill="#b29868" stroke="#b29868" stroke-width="0.5"/>
<polygon points="612.7,403.6 629.0,450.7 629.0,444.7 612.7,396.4" fill="#e7c47e" stroke="#e7c47e" stroke-width="0.5"/>
<polygon points="797.8,431.6 799.7,431.6 784.3,474.5 782.8,474.5" fill="#d6c8a8" stroke="#d6c8a8" stroke-width="0.5"/>
<polygon points="797.8,431.6 782.8,474.5 782.7,468.4 797.7,424.3" fill="#c0a064" stroke="#c0a064" stroke-width="0.5"/>
<polygon points="639.5,395.7 641.3,395.7 652.7,444.2 651.3,444.2" fill="#b29868" stroke="#b29868" stroke-width="0.5"/>
<polygon points="641.3,395.7 652.7,444.2 652.7,438.1 641.3,388.5" fill="#e7c47e" stroke="#e7c47e" stroke-width="0.5"/>
<polygon points="768.7,424.4 770.5,424.3 760.1,468.3 758.6,468.4" fill="#d6c8a8" stroke="#d6c8a8" stroke-width="0.5"/>
<polygon points="768.7,424.4 758.6,468.4 758.5,462.3 768.5,417.1" fill="#c0a064" stroke="#c0a064" stroke-width="0.5"/>
<polygon points="646.3,393.8 648.1,393.8 658.4,442.6 657.0,442.6" fill="#b29868" stroke="#b29868" stroke-width="0.5"/>
<polygon points="648.1,393.8 658.4,442.6 658.4,436.6 648.1,386.6" fill="#e7c47e" stroke="#e7c47e" stroke-width="0.5"/>
<polygon points="653.2,395.5 655.0,395.5 664.2,444.0 662.7,444.1" fill="#b29868" stroke="#b29868" stroke-width="0.5"/>
<polygon points="655.0,395.5 664.2,444.0 664.1,438.0 655.0,388.3" fill="#e7c47e" stroke="#e7c47e" stroke-width="0.5"/>
<polygon points="739.6,417.1 741.4,417.1 736.0,462.2 734.5,462.2" fill="#d6c8a8" stroke="#d6c8a8" stroke-width="0.5"/>
<polygon points="739.6,417.1 734.5,462.2 734.4,456.2 739.5,409.8" fill="#c0a064" stroke="#c0a064" stroke-width="0.5"/>
<polygon points="681.9,402.7 683.7,402.7 688.0,450.1 686.5,450.1" fill="#b29868" stroke="#b29868" stroke-width="0.5"/>
<polygon points="683.7,402.7 688.0,450.1 688.0,444.0 683.6,395.4" fill="#e7c47e" stroke="#e7c47e" stroke-width="0.5"/>
<polygon points="710.7,409.9 712.5,409.9 712.0,456.1 710.5,456.2" fill="#d6c8a8" stroke="#d6c8a8" stroke-width="0.5"/>
<polygon points="710.7,409.9 710.5,456.2 710.4,450.1 710.6,402.6" fill="#c0a064" stroke="#c0a064" stroke-width="0.5"/>
<polygon points="649.8,402.6 193.7,529.1 196.1,529.8 650.0,403.9" fill="#8c6c3e" stroke="#8c6c3e" stroke-width="0.5"/>
<polygon points="644.1,402.7 1123.3,522.6 1121.4,523.4 644.4,403.9" fill="#8c6c3e" stroke="#8c6c3e" stroke-width="0.5"/>
<polygon points="220.9,656.9 223.5,649.7 226.3,642.5 229.2,635.5 232.3,628.4 235.4,621.5 238.7,614.6 242.1,607.8 245.6,601.0 249.2,594.3 253.0,587.7 256.8,581.1 260.8,574.6 264.9,568.2 269.0,561.9 273.3,555.7 277.7,549.5 282.2,543.4 286.8,537.4 291.5,531.5 296.3,525.7 301.2,520.0 306.1,514.3 311.2,508.8 316.4,503.3 321.7,498.0 327.0,492.7 332.4,487.6 334.8,488.8 329.4,493.9 324.0,499.1 318.8,504.5 313.7,509.9 308.6,515.4 303.7,521.0 298.8,526.7 294.1,532.5 289.4,538.3 284.8,544.3 280.4,550.3 276.0,556.5 271.8,562.7 267.6,568.9 263.6,575.3 259.6,581.7 255.8,588.3 252.1,594.8 248.5,601.5 245.0,608.2 241.7,615.0 238.4,621.9 235.3,628.8 232.2,635.8 229.3,642.8 226.6,649.9 223.9,657.0" fill="#9c7a46" stroke="#9c7a46" stroke-width="0.5"/>
<polygon points="217.3,653.7 224.1,509.2 228.3,510.8 221.7,654.0" fill="#aa8650" stroke="#aa8650" stroke-width="0.5"/>
<polygon points="1093.2,655.7 1090.3,648.3 1087.2,640.8 1084.1,633.5 1080.8,626.2 1077.3,619.0 1073.8,611.9 1070.1,604.8 1066.3,597.8 1062.4,590.9 1058.3,584.1 1054.2,577.3 1049.9,570.6 1045.5,564.1 1041.0,557.6 1036.4,551.1 1031.7,544.8 1026.9,538.6 1022.0,532.5 1016.9,526.4 1011.8,520.5 1006.6,514.7 1001.3,508.9 995.8,503.3 990.3,497.8 984.7,492.4 979.0,487.1 973.3,481.8 971.6,483.1 977.3,488.3 983.0,493.6 988.5,499.0 994.0,504.5 999.4,510.1 1004.7,515.8 1009.9,521.6 1015.0,527.5 1020.0,533.4 1024.8,539.5 1029.6,545.7 1034.3,552.0 1038.9,558.4 1043.4,564.8 1047.7,571.4 1052.0,578.0 1056.1,584.7 1060.1,591.5 1064.0,598.4 1067.8,605.3 1071.4,612.3 1074.9,619.4 1078.4,626.6 1081.6,633.8 1084.8,641.1 1087.8,648.5 1090.7,655.9" fill="#8c6c3e" stroke="#8c6c3e" stroke-width="0.5"/>
<polygon points="1088.8,501.8 1096.5,652.4 1092.9,652.7 1085.4,503.5" fill="#967442" stroke="#967442" stroke-width="0.5"/>
<polygon points="649.8,402.6 193.7,529.1 189.3,508.7 644.1,382.3" fill="#cda668" stroke="#cda668" stroke-width="0.5"/>
<polygon points="644.1,402.7 1123.3,522.6 1128.1,501.2 649.7,382.2" fill="#cda668" stroke="#cda668" stroke-width="0.5"/>
<polyline points="649.4,401.1 193.4,527.7" fill="none" stroke="#6e4f24" stroke-width="0.75" stroke-opacity="0.80"/>
<polyline points="649.0,399.7 193.1,526.2" fill="none" stroke="#6e4f24" stroke-width="0.75" stroke-opacity="0.80"/>
<polyline points="648.6,398.2 192.8,524.7" fill="none" stroke="#6e4f24" stroke-width="0.75" stroke-opacity="0.80"/>
<polyline points="648.1,396.8 192.5,523.3" fill="none" stroke="#6e4f24" stroke-width="0.75" stroke-opacity="0.80"/>
<polyline points="647.7,395.3 192.2,521.8" fill="none" stroke="#6e4f24" stroke-width="0.75" stroke-opacity="0.80"/>
<polyline points="647.3,393.9 191.8,520.4" fill="none" stroke="#6e4f24" stroke-width="0.75" stroke-opacity="0.80"/>
<polyline points="646.9,392.4 191.5,518.9" fill="none" stroke="#6e4f24" stroke-width="0.75" stroke-opacity="0.80"/>
<polyline points="646.5,391.0 191.2,517.4" fill="none" stroke="#6e4f24" stroke-width="0.75" stroke-opacity="0.80"/>
<polyline points="646.1,389.5 190.9,516.0" fill="none" stroke="#6e4f24" stroke-width="0.75" stroke-opacity="0.80"/>
<polyline points="645.7,388.1 190.6,514.5" fill="none" stroke="#6e4f24" stroke-width="0.75" stroke-opacity="0.80"/>
<polyline points="645.3,386.6 190.3,513.1" fill="none" stroke="#6e4f24" stroke-width="0.75" stroke-opacity="0.80"/>
<polyline points="644.9,385.2 190.0,511.6" fill="none" stroke="#6e4f24" stroke-width="0.75" stroke-opacity="0.80"/>
<polyline points="644.5,383.7 189.6,510.1" fill="none" stroke="#6e4f24" stroke-width="0.75" stroke-opacity="0.80"/>
<polyline points="644.5,401.2 1123.7,521.1" fill="none" stroke="#6e4f24" stroke-width="0.75" stroke-opacity="0.80"/>
<polyline points="644.9,399.7 1124.0,519.5" fill="none" stroke="#6e4f24" stroke-width="0.75" stroke-opacity="0.80"/>
<polyline points="645.3,398.3 1124.3,518.0" fill="none" stroke="#6e4f24" stroke-width="0.75" stroke-opacity="0.80"/>
<polyline points="645.7,396.8 1124.7,516.5" fill="none" stroke="#6e4f24" stroke-width="0.75" stroke-opacity="0.80"/>
<polyline points="646.1,395.4 1125.0,514.9" fill="none" stroke="#6e4f24" stroke-width="0.75" stroke-opacity="0.80"/>
<polyline points="646.5,393.9 1125.4,513.4" fill="none" stroke="#6e4f24" stroke-width="0.75" stroke-opacity="0.80"/>
<polyline points="646.9,392.4 1125.7,511.9" fill="none" stroke="#6e4f24" stroke-width="0.75" stroke-opacity="0.80"/>
<polyline points="647.3,391.0 1126.0,510.3" fill="none" stroke="#6e4f24" stroke-width="0.75" stroke-opacity="0.80"/>
<polyline points="647.7,389.5 1126.4,508.8" fill="none" stroke="#6e4f24" stroke-width="0.75" stroke-opacity="0.80"/>
<polyline points="648.1,388.1 1126.7,507.3" fill="none" stroke="#6e4f24" stroke-width="0.75" stroke-opacity="0.80"/>
<polyline points="648.5,386.6 1127.1,505.7" fill="none" stroke="#6e4f24" stroke-width="0.75" stroke-opacity="0.80"/>
<polyline points="648.9,385.1 1127.4,504.2" fill="none" stroke="#6e4f24" stroke-width="0.75" stroke-opacity="0.80"/>
<polyline points="649.3,383.7 1127.8,502.7" fill="none" stroke="#6e4f24" stroke-width="0.75" stroke-opacity="0.80"/>
<polygon points="214.7,713.2 217.4,653.7 224.6,654.2 221.9,712.8" fill="#69685f" stroke="#69685f" stroke-width="0.5"/>
<polygon points="1095.7,652.4 1098.9,714.5 1092.9,714.0 1089.9,652.9" fill="#5c5b53" stroke="#5c5b53" stroke-width="0.5"/>
<polygon points="201.4,650.3 204.3,642.8 207.2,635.3 210.3,627.8 213.5,620.5 216.8,613.2 220.3,605.9 223.8,598.8 227.5,591.7 231.4,584.6 235.3,577.7 239.3,570.8 243.5,564.0 247.8,557.3 252.2,550.7 256.7,544.1 261.3,537.7 266.0,531.3 270.8,525.0 275.8,518.8 280.8,512.7 285.9,506.7 291.2,500.8 296.5,495.0 302.0,489.3 307.5,483.7 313.1,478.2 318.8,472.7 332.4,487.6 327.0,492.7 321.7,498.0 316.4,503.3 311.2,508.8 306.1,514.3 301.2,520.0 296.3,525.7 291.5,531.5 286.8,537.4 282.2,543.4 277.7,549.5 273.3,555.7 269.0,561.9 264.9,568.2 260.8,574.6 256.8,581.1 253.0,587.7 249.2,594.3 245.6,601.0 242.1,607.8 238.7,614.6 235.4,621.5 232.3,628.4 229.2,635.5 226.3,642.5 223.5,649.7 220.9,656.9" fill="#cda668" stroke="#cda668" stroke-width="0.5"/>
<polygon points="1114.3,648.8 1111.3,641.0 1108.0,633.2 1104.7,625.4 1101.2,617.8 1097.5,610.2 1093.8,602.7 1089.9,595.3 1085.9,588.0 1081.7,580.7 1077.5,573.5 1073.1,566.4 1068.6,559.4 1063.9,552.5 1059.2,545.7 1054.3,539.0 1049.4,532.3 1044.3,525.8 1039.1,519.4 1033.8,513.0 1028.4,506.8 1022.9,500.7 1017.3,494.7 1011.5,488.8 1005.7,483.0 999.8,477.3 993.8,471.7 987.8,466.3 973.3,481.8 979.0,487.1 984.7,492.4 990.3,497.8 995.8,503.3 1001.3,508.9 1006.6,514.7 1011.8,520.5 1016.9,526.4 1022.0,532.5 1026.9,538.6 1031.7,544.8 1036.4,551.1 1041.0,557.6 1045.5,564.1 1049.9,570.6 1054.2,577.3 1058.3,584.1 1062.4,590.9 1066.3,597.8 1070.1,604.8 1073.8,611.9 1077.3,619.0 1080.8,626.2 1084.1,633.5 1087.2,640.8 1090.3,648.3 1093.2,655.7" fill="#cda668" stroke="#cda668" stroke-width="0.5"/>
<polyline points="202.8,650.8 205.6,643.3 208.6,635.8 211.6,628.4 214.8,621.0 218.1,613.8 221.6,606.6 225.1,599.4 228.8,592.3 232.6,585.3 236.6,578.4 240.6,571.6 244.7,564.8 249.0,558.1 253.4,551.5 257.9,545.0 262.5,538.5 267.2,532.2 272.0,525.9 276.9,519.7 281.9,513.6 287.0,507.7 292.2,501.8 297.6,496.0 303.0,490.3 308.5,484.7 314.1,479.2 319.8,473.8" fill="none" stroke="#6e4f24" stroke-width="0.75" stroke-opacity="0.80"/>
<polyline points="204.2,651.2 207.0,643.8 209.9,636.3 213.0,628.9 216.2,621.6 219.5,614.4 222.9,607.2 226.5,600.0 230.1,593.0 233.9,586.0 237.8,579.1 241.8,572.3 246.0,565.5 250.2,558.9 254.6,552.3 259.1,545.8 263.6,539.4 268.3,533.0 273.1,526.8 278.0,520.6 283.0,514.6 288.1,508.6 293.3,502.7 298.6,497.0 304.0,491.3 309.5,485.7 315.1,480.2 320.8,474.9" fill="none" stroke="#6e4f24" stroke-width="0.75" stroke-opacity="0.80"/>
<polyline points="205.6,651.7 208.4,644.2 211.3,636.8 214.3,629.5 217.5,622.2 220.8,614.9 224.2,607.8 227.8,600.7 231.4,593.7 235.2,586.7 239.1,579.8 243.1,573.0 247.2,566.3 251.4,559.6 255.8,553.1 260.2,546.6 264.8,540.2 269.5,533.9 274.3,527.7 279.1,521.5 284.1,515.5 289.2,509.5 294.4,503.7 299.7,497.9 305.0,492.3 310.5,486.7 316.1,481.3 321.7,475.9" fill="none" stroke="#6e4f24" stroke-width="0.75" stroke-opacity="0.80"/>
<polyline points="207.0,652.2 209.8,644.7 212.7,637.3 215.7,630.0 218.9,622.7 222.1,615.5 225.5,608.4 229.1,601.3 232.7,594.3 236.5,587.4 240.3,580.5 244.3,573.8 248.4,567.1 252.7,560.4 257.0,553.9 261.4,547.4 266.0,541.0 270.6,534.8 275.4,528.6 280.3,522.4 285.2,516.4 290.3,510.5 295.4,504.7 300.7,498.9 306.1,493.3 311.5,487.7 317.1,482.3 322.7,477.0" fill="none" stroke="#6e4f24" stroke-width="0.75" stroke-opacity="0.80"/>
<polyline points="208.4,652.7 211.1,645.2 214.0,637.9 217.1,630.6 220.2,623.3 223.5,616.1 226.9,609.0 230.4,602.0 234.0,595.0 237.7,588.1 241.6,581.3 245.6,574.5 249.7,567.8 253.9,561.2 258.2,554.7 262.6,548.2 267.1,541.9 271.8,535.6 276.5,529.4 281.4,523.3 286.3,517.3 291.4,511.4 296.5,505.6 301.8,499.9 307.1,494.3 312.5,488.8 318.1,483.4 323.7,478.0" fill="none" stroke="#6e4f24" stroke-width="0.75" stroke-opacity="0.80"/>
<polyline points="209.8,653.1 212.5,645.7 215.4,638.4 218.4,631.1 221.5,623.9 224.8,616.7 228.2,609.6 231.7,602.6 235.3,595.7 239.0,588.8 242.9,582.0 246.8,575.2 250.9,568.6 255.1,562.0 259.4,555.5 263.8,549.1 268.3,542.7 272.9,536.5 277.7,530.3 282.5,524.3 287.4,518.3 292.5,512.4 297.6,506.6 302.8,500.9 308.1,495.3 313.5,489.8 319.1,484.4 324.6,479.1" fill="none" stroke="#6e4f24" stroke-width="0.75" stroke-opacity="0.80"/>
<polyline points="211.1,653.6 213.9,646.2 216.8,638.9 219.8,631.7 222.9,624.5 226.1,617.3 229.5,610.3 233.0,603.3 236.6,596.3 240.3,589.5 244.1,582.7 248.1,576.0 252.1,569.3 256.3,562.8 260.6,556.3 265.0,549.9 269.5,543.6 274.1,537.4 278.8,531.2 283.6,525.2 288.5,519.2 293.5,513.3 298.7,507.6 303.9,501.9 309.2,496.3 314.6,490.8 320.0,485.4 325.6,480.2" fill="none" stroke="#6e4f24" stroke-width="0.75" stroke-opacity="0.80"/>
<polyline points="212.5,654.1 215.3,646.7 218.1,639.4 221.1,632.2 224.2,625.0 227.5,617.9 230.8,610.9 234.3,603.9 237.9,597.0 241.6,590.2 245.4,583.4 249.3,576.7 253.4,570.1 257.5,563.5 261.8,557.1 266.2,550.7 270.7,544.4 275.2,538.2 279.9,532.1 284.7,526.1 289.6,520.1 294.6,514.3 299.7,508.5 304.9,502.9 310.2,497.3 315.6,491.8 321.0,486.5 326.6,481.2" fill="none" stroke="#6e4f24" stroke-width="0.75" stroke-opacity="0.80"/>
<polyline points="213.9,654.5 216.6,647.2 219.5,639.9 222.5,632.7 225.6,625.6 228.8,618.5 232.1,611.5 235.6,604.5 239.2,597.7 242.8,590.8 246.7,584.1 250.6,577.4 254.6,570.8 258.8,564.3 263.0,557.9 267.4,551.5 271.8,545.3 276.4,539.1 281.1,533.0 285.9,527.0 290.7,521.1 295.7,515.2 300.8,509.5 306.0,503.9 311.2,498.3 316.6,492.9 322.0,487.5 327.6,482.3" fill="none" stroke="#6e4f24" stroke-width="0.75" stroke-opacity="0.80"/>
<polyline points="215.3,655.0 218.0,647.7 220.9,640.5 223.8,633.3 226.9,626.2 230.1,619.1 233.4,612.1 236.9,605.2 240.5,598.3 244.1,591.5 247.9,584.8 251.8,578.2 255.8,571.6 260.0,565.1 264.2,558.7 268.6,552.4 273.0,546.1 277.6,540.0 282.2,533.9 287.0,527.9 291.8,522.0 296.8,516.2 301.9,510.5 307.0,504.8 312.3,499.3 317.6,493.9 323.0,488.6 328.5,483.3" fill="none" stroke="#6e4f24" stroke-width="0.75" stroke-opacity="0.80"/>
<polyline points="216.7,655.5 219.4,648.2 222.2,641.0 225.2,633.8 228.3,626.7 231.4,619.7 234.8,612.7 238.2,605.8 241.7,599.0 245.4,592.2 249.2,585.5 253.1,578.9 257.1,572.4 261.2,565.9 265.4,559.5 269.7,553.2 274.2,547.0 278.7,540.8 283.4,534.8 288.1,528.8 292.9,522.9 297.9,517.1 302.9,511.4 308.1,505.8 313.3,500.3 318.6,494.9 324.0,489.6 329.5,484.4" fill="none" stroke="#6e4f24" stroke-width="0.75" stroke-opacity="0.80"/>
<polyline points="218.1,655.9 220.8,648.7 223.6,641.5 226.5,634.4 229.6,627.3 232.8,620.3 236.1,613.3 239.5,606.5 243.0,599.7 246.7,592.9 250.5,586.2 254.3,579.6 258.3,573.1 262.4,566.7 266.6,560.3 270.9,554.0 275.4,547.8 279.9,541.7 284.5,535.7 289.2,529.7 294.1,523.8 299.0,518.1 304.0,512.4 309.1,506.8 314.3,501.3 319.6,495.9 325.0,490.6 330.5,485.5" fill="none" stroke="#6e4f24" stroke-width="0.75" stroke-opacity="0.80"/>
<polyline points="219.5,656.4 222.2,649.2 225.0,642.0 227.9,634.9 230.9,627.9 234.1,620.9 237.4,614.0 240.8,607.1 244.3,600.3 248.0,593.6 251.7,586.9 255.6,580.4 259.6,573.9 263.6,567.4 267.8,561.1 272.1,554.8 276.5,548.7 281.0,542.6 285.6,536.5 290.4,530.6 295.2,524.8 300.1,519.0 305.1,513.4 310.2,507.8 315.4,502.3 320.6,497.0 326.0,491.7 331.5,486.5" fill="none" stroke="#6e4f24" stroke-width="0.75" stroke-opacity="0.80"/>
<polyline points="1112.8,649.3 1109.8,641.5 1106.5,633.7 1103.2,626.0 1099.7,618.4 1096.1,610.9 1092.4,603.4 1088.5,596.0 1084.5,588.7 1080.4,581.4 1076.1,574.3 1071.7,567.2 1067.2,560.2 1062.6,553.3 1057.9,546.5 1053.1,539.8 1048.1,533.2 1043.0,526.7 1037.9,520.3 1032.6,514.0 1027.2,507.8 1021.7,501.7 1016.1,495.7 1010.4,489.8 1004.6,484.0 998.8,478.4 992.8,472.8 986.7,467.4" fill="none" stroke="#6e4f24" stroke-width="0.75" stroke-opacity="0.80"/>
<polyline points="1111.3,649.8 1108.3,642.0 1105.1,634.3 1101.7,626.6 1098.3,619.0 1094.7,611.5 1090.9,604.0 1087.1,596.7 1083.1,589.4 1079.0,582.2 1074.7,575.0 1070.4,568.0 1065.9,561.0 1061.3,554.2 1056.6,547.4 1051.8,540.7 1046.8,534.1 1041.8,527.6 1036.6,521.2 1031.4,515.0 1026.0,508.8 1020.5,502.7 1015.0,496.7 1009.3,490.9 1003.5,485.1 997.7,479.4 991.7,473.9 985.7,468.5" fill="none" stroke="#6e4f24" stroke-width="0.75" stroke-opacity="0.80"/>
<polyline points="1109.8,650.3 1106.8,642.5 1103.6,634.8 1100.3,627.2 1096.8,619.6 1093.2,612.1 1089.5,604.7 1085.7,597.3 1081.7,590.1 1077.6,582.9 1073.4,575.8 1069.0,568.8 1064.6,561.8 1060.0,555.0 1055.3,548.2 1050.5,541.6 1045.6,535.0 1040.6,528.5 1035.4,522.2 1030.2,515.9 1024.8,509.7 1019.4,503.7 1013.8,497.7 1008.2,491.9 1002.4,486.2 996.6,480.5 990.7,475.0 984.7,469.6" fill="none" stroke="#6e4f24" stroke-width="0.75" stroke-opacity="0.80"/>
<polyline points="1108.3,650.8 1105.3,643.0 1102.1,635.4 1098.8,627.7 1095.3,620.2 1091.8,612.7 1088.1,605.3 1084.2,598.0 1080.3,590.8 1076.2,583.6 1072.0,576.5 1067.7,569.5 1063.2,562.6 1058.7,555.8 1054.0,549.1 1049.2,542.4 1044.3,535.9 1039.3,529.5 1034.2,523.1 1029.0,516.9 1023.6,510.7 1018.2,504.7 1012.7,498.8 1007.1,492.9 1001.3,487.2 995.5,481.6 989.6,476.1 983.6,470.7" fill="none" stroke="#6e4f24" stroke-width="0.75" stroke-opacity="0.80"/>
<polyline points="1106.8,651.3 1103.8,643.6 1100.6,635.9 1097.3,628.3 1093.9,620.8 1090.3,613.4 1086.6,606.0 1082.8,598.7 1078.9,591.5 1074.8,584.3 1070.6,577.3 1066.3,570.3 1061.9,563.4 1057.4,556.6 1052.7,549.9 1047.9,543.3 1043.1,536.8 1038.1,530.4 1033.0,524.1 1027.8,517.8 1022.5,511.7 1017.1,505.7 1011.5,499.8 1005.9,494.0 1000.2,488.3 994.4,482.7 988.6,477.2 982.6,471.8" fill="none" stroke="#6e4f24" stroke-width="0.75" stroke-opacity="0.80"/>
<polyline points="1105.3,651.8 1102.3,644.1 1099.1,636.5 1095.8,628.9 1092.4,621.4 1088.9,614.0 1085.2,606.6 1081.4,599.4 1077.5,592.2 1073.4,585.1 1069.3,578.0 1065.0,571.1 1060.6,564.2 1056.0,557.5 1051.4,550.8 1046.7,544.2 1041.8,537.7 1036.8,531.3 1031.7,525.0 1026.6,518.8 1021.3,512.7 1015.9,506.7 1010.4,500.8 1004.8,495.0 999.1,489.3 993.4,483.8 987.5,478.3 981.5,472.9" fill="none" stroke="#6e4f24" stroke-width="0.75" stroke-opacity="0.80"/>
<polyline points="1103.8,652.3 1100.8,644.6 1097.6,637.0 1094.4,629.5 1091.0,622.0 1087.4,614.6 1083.8,607.3 1080.0,600.1 1076.1,592.9 1072.1,585.8 1067.9,578.8 1063.6,571.9 1059.2,565.0 1054.7,558.3 1050.1,551.6 1045.4,545.1 1040.5,538.6 1035.6,532.2 1030.5,525.9 1025.4,519.7 1020.1,513.7 1014.7,507.7 1009.3,501.8 1003.7,496.0 998.0,490.4 992.3,484.8 986.4,479.4 980.5,474.1" fill="none" stroke="#6e4f24" stroke-width="0.75" stroke-opacity="0.80"/>
<polyline points="1102.3,652.8 1099.3,645.1 1096.2,637.6 1092.9,630.0 1089.5,622.6 1086.0,615.2 1082.4,607.9 1078.6,600.7 1074.7,593.6 1070.7,586.5 1066.5,579.5 1062.3,572.6 1057.9,565.8 1053.4,559.1 1048.8,552.5 1044.1,545.9 1039.3,539.5 1034.3,533.1 1029.3,526.9 1024.2,520.7 1018.9,514.6 1013.6,508.7 1008.1,502.8 1002.6,497.1 996.9,491.4 991.2,485.9 985.4,480.5 979.5,475.2" fill="none" stroke="#6e4f24" stroke-width="0.75" stroke-opacity="0.80"/>
<polyline points="1100.8,653.3 1097.8,645.6 1094.7,638.1 1091.4,630.6 1088.1,623.2 1084.5,615.9 1080.9,608.6 1077.2,601.4 1073.3,594.3 1069.3,587.3 1065.2,580.3 1060.9,573.4 1056.6,566.6 1052.1,559.9 1047.5,553.3 1042.8,546.8 1038.0,540.4 1033.1,534.0 1028.1,527.8 1023.0,521.7 1017.7,515.6 1012.4,509.7 1007.0,503.8 1001.4,498.1 995.8,492.5 990.1,487.0 984.3,481.6 978.4,476.3" fill="none" stroke="#6e4f24" stroke-width="0.75" stroke-opacity="0.80"/>
<polyline points="1099.2,653.7 1096.3,646.2 1093.2,638.7 1090.0,631.2 1086.6,623.8 1083.1,616.5 1079.5,609.3 1075.8,602.1 1071.9,595.0 1067.9,588.0 1063.8,581.0 1059.6,574.2 1055.2,567.4 1050.8,560.8 1046.2,554.2 1041.5,547.7 1036.8,541.3 1031.9,534.9 1026.9,528.7 1021.7,522.6 1016.5,516.6 1011.2,510.7 1005.8,504.9 1000.3,499.2 994.7,493.6 989.0,488.1 983.3,482.7 977.4,477.4" fill="none" stroke="#6e4f24" stroke-width="0.75" stroke-opacity="0.80"/>
<polyline points="1097.7,654.2 1094.8,646.7 1091.7,639.2 1088.5,631.8 1085.1,624.4 1081.7,617.1 1078.1,609.9 1074.3,602.8 1070.5,595.7 1066.5,588.7 1062.4,581.8 1058.2,575.0 1053.9,568.2 1049.5,561.6 1044.9,555.0 1040.3,548.5 1035.5,542.2 1030.6,535.9 1025.6,529.7 1020.5,523.6 1015.4,517.6 1010.1,511.7 1004.7,505.9 999.2,500.2 993.6,494.6 988.0,489.1 982.2,483.8 976.4,478.5" fill="none" stroke="#6e4f24" stroke-width="0.75" stroke-opacity="0.80"/>
<polyline points="1096.2,654.7 1093.3,647.2 1090.2,639.7 1087.0,632.3 1083.7,625.0 1080.2,617.8 1076.6,610.6 1072.9,603.4 1069.1,596.4 1065.1,589.4 1061.1,582.6 1056.9,575.8 1052.6,569.0 1048.2,562.4 1043.6,555.9 1039.0,549.4 1034.2,543.0 1029.4,536.8 1024.4,530.6 1019.3,524.5 1014.2,518.6 1008.9,512.7 1003.5,506.9 998.1,501.2 992.5,495.7 986.9,490.2 981.1,484.9 975.3,479.6" fill="none" stroke="#6e4f24" stroke-width="0.75" stroke-opacity="0.80"/>
<polyline points="1094.7,655.2 1091.8,647.7 1088.7,640.3 1085.5,632.9 1082.2,625.6 1078.8,618.4 1075.2,611.2 1071.5,604.1 1067.7,597.1 1063.8,590.2 1059.7,583.3 1055.5,576.5 1051.2,569.8 1046.8,563.2 1042.3,556.7 1037.7,550.3 1033.0,543.9 1028.1,537.7 1023.2,531.5 1018.1,525.5 1013.0,519.5 1007.7,513.7 1002.4,507.9 997.0,502.3 991.4,496.7 985.8,491.3 980.1,486.0 974.3,480.7" fill="none" stroke="#6e4f24" stroke-width="0.75" stroke-opacity="0.80"/>
<polygon points="197.1,713.2 214.7,713.2 217.4,653.7 200.0,653.8" fill="#808076" stroke="#808076" stroke-width="0.5"/>
<polygon points="1098.9,714.5 1118.0,714.5 1114.8,652.4 1095.7,652.4" fill="#808076" stroke="#808076" stroke-width="0.5"/>
<polygon points="205.8,653.7 217.3,653.7 224.1,509.2 212.7,509.3" fill="#cda668" stroke="#cda668" stroke-width="0.5"/>
<polyline points="215.4,653.7 222.2,509.2" fill="none" stroke="#6e4f24" stroke-width="0.75" stroke-opacity="0.80"/>
<polyline points="213.5,653.7 220.3,509.3" fill="none" stroke="#6e4f24" stroke-width="0.75" stroke-opacity="0.80"/>
<polyline points="211.6,653.7 218.4,509.3" fill="none" stroke="#6e4f24" stroke-width="0.75" stroke-opacity="0.80"/>
<polyline points="209.6,653.7 216.5,509.3" fill="none" stroke="#6e4f24" stroke-width="0.75" stroke-opacity="0.80"/>
<polyline points="207.7,653.7 214.6,509.3" fill="none" stroke="#6e4f24" stroke-width="0.75" stroke-opacity="0.80"/>
<polyline points="218.4,509.3 217.8,500.5" fill="none" stroke="#2a1c08" stroke-width="0.80" stroke-opacity="0.80"/>
<polygon points="1096.5,652.4 1109.1,652.4 1101.2,501.7 1088.8,501.8" fill="#cda668" stroke="#cda668" stroke-width="0.5"/>
<polyline points="1098.6,652.4 1090.9,501.8" fill="none" stroke="#6e4f24" stroke-width="0.75" stroke-opacity="0.80"/>
<polyline points="1100.7,652.4 1093.0,501.8" fill="none" stroke="#6e4f24" stroke-width="0.75" stroke-opacity="0.80"/>
<polyline points="1102.8,652.4 1095.0,501.7" fill="none" stroke="#6e4f24" stroke-width="0.75" stroke-opacity="0.80"/>
<polyline points="1104.9,652.4 1097.1,501.7" fill="none" stroke="#6e4f24" stroke-width="0.75" stroke-opacity="0.80"/>
<polyline points="1107.0,652.4 1099.2,501.7" fill="none" stroke="#6e4f24" stroke-width="0.75" stroke-opacity="0.80"/>
<polyline points="1095.0,501.7 1095.6,492.8" fill="none" stroke="#2a1c08" stroke-width="0.80" stroke-opacity="0.80"/>
<polygon points="86.7,469.8 88.9,469.8 214.0,513.0 212.2,513.0" fill="#b29868" stroke="#b29868" stroke-width="0.5"/>
<polygon points="88.9,469.8 214.0,513.0 214.3,505.7 89.4,460.7" fill="#e7c47e" stroke="#e7c47e" stroke-width="0.5"/>
<polygon points="122.0,460.0 124.2,460.0 242.2,505.1 240.5,505.1" fill="#b29868" stroke="#b29868" stroke-width="0.5"/>
<polygon points="124.2,460.0 242.2,505.1 242.6,497.8 124.7,450.9" fill="#e7c47e" stroke="#e7c47e" stroke-width="0.5"/>
<polygon points="157.4,450.1 159.5,450.1 270.5,497.2 268.8,497.3" fill="#b29868" stroke="#b29868" stroke-width="0.5"/>
<polygon points="159.5,450.1 270.5,497.2 270.8,490.0 160.0,441.0" fill="#e7c47e" stroke="#e7c47e" stroke-width="0.5"/>
<polygon points="192.8,440.2 194.9,440.2 298.8,489.4 297.1,489.4" fill="#b29868" stroke="#b29868" stroke-width="0.5"/>
<polygon points="194.9,440.2 298.8,489.4 299.1,482.1 195.4,431.2" fill="#e7c47e" stroke="#e7c47e" stroke-width="0.5"/>
<polygon points="217.0,433.5 219.2,433.4 318.2,484.0 316.5,484.0" fill="#b29868" stroke="#b29868" stroke-width="0.5"/>
<polygon points="219.2,433.4 318.2,484.0 318.5,476.7 219.6,424.4" fill="#e7c47e" stroke="#e7c47e" stroke-width="0.5"/>
<polygon points="228.2,430.3 230.4,430.3 327.2,481.5 325.4,481.5" fill="#b29868" stroke="#b29868" stroke-width="0.5"/>
<polygon points="230.4,430.3 327.2,481.5 327.4,474.3 230.8,421.3" fill="#e7c47e" stroke="#e7c47e" stroke-width="0.5"/>
<polygon points="1202.8,458.0 1205.2,458.0 1100.9,505.5 1099.0,505.5" fill="#d6c8a8" stroke="#d6c8a8" stroke-width="0.5"/>
<polygon points="1202.8,458.0 1099.0,505.5 1098.6,497.9 1202.1,448.5" fill="#c0a064" stroke="#c0a064" stroke-width="0.5"/>
<polygon points="263.7,420.4 265.9,420.4 355.6,473.6 353.8,473.7" fill="#b29868" stroke="#b29868" stroke-width="0.5"/>
<polygon points="265.9,420.4 355.6,473.6 355.8,466.4 266.3,411.4" fill="#e7c47e" stroke="#e7c47e" stroke-width="0.5"/>
<polygon points="1163.6,448.5 1166.0,448.4 1070.2,497.8 1068.3,497.9" fill="#d6c8a8" stroke="#d6c8a8" stroke-width="0.5"/>
<polygon points="1163.6,448.5 1068.3,497.9 1067.9,490.3 1163.0,438.9" fill="#c0a064" stroke="#c0a064" stroke-width="0.5"/>
<polygon points="299.3,410.5 301.5,410.5 384.0,465.7 382.2,465.8" fill="#b29868" stroke="#b29868" stroke-width="0.5"/>
<polygon points="301.5,410.5 384.0,465.7 384.2,458.5 301.8,401.4" fill="#e7c47e" stroke="#e7c47e" stroke-width="0.5"/>
<polygon points="1124.7,439.0 1127.0,438.9 1039.6,490.2 1037.7,490.2" fill="#d6c8a8" stroke="#d6c8a8" stroke-width="0.5"/>
<polygon points="1124.7,439.0 1037.7,490.2 1037.4,482.7 1124.1,429.5" fill="#c0a064" stroke="#c0a064" stroke-width="0.5"/>
<polygon points="334.8,400.6 337.0,400.5 412.4,457.9 410.6,457.9" fill="#b29868" stroke="#b29868" stroke-width="0.5"/>
<polygon points="337.0,400.5 412.4,457.9 412.6,450.6 337.4,391.5" fill="#e7c47e" stroke="#e7c47e" stroke-width="0.5"/>
<polygon points="1086.0,429.5 1088.3,429.5 1009.2,482.6 1007.3,482.6" fill="#d6c8a8" stroke="#d6c8a8" stroke-width="0.5"/>
<polygon points="1086.0,429.5 1007.3,482.6 1007.0,475.1 1085.5,420.1" fill="#c0a064" stroke="#c0a064" stroke-width="0.5"/>
<polygon points="1059.6,423.1 1062.0,423.1 988.4,477.4 986.6,477.5" fill="#d6c8a8" stroke="#d6c8a8" stroke-width="0.5"/>
<polygon points="1059.6,423.1 986.6,477.5 986.3,470.0 1059.1,413.7" fill="#c0a064" stroke="#c0a064" stroke-width="0.5"/>
<polygon points="370.5,390.6 372.7,390.6 440.9,449.9 439.1,450.0" fill="#b29868" stroke="#b29868" stroke-width="0.5"/>
<polygon points="372.7,390.6 440.9,449.9 441.0,442.7 373.0,381.6" fill="#e7c47e" stroke="#e7c47e" stroke-width="0.5"/>
<polygon points="1047.5,420.1 1049.8,420.1 978.9,475.1 977.0,475.1" fill="#d6c8a8" stroke="#d6c8a8" stroke-width="0.5"/>
<polygon points="1047.5,420.1 977.0,475.1 976.8,467.6 1047.0,410.7" fill="#c0a064" stroke="#c0a064" stroke-width="0.5"/>
<polygon points="406.2,380.7 408.4,380.6 469.4,442.0 467.6,442.1" fill="#b29868" stroke="#b29868" stroke-width="0.5"/>
<polygon points="408.4,380.6 469.4,442.0 469.5,434.8 408.6,371.6" fill="#e7c47e" stroke="#e7c47e" stroke-width="0.5"/>
<polygon points="1009.2,410.8 1011.6,410.8 948.8,467.5 946.9,467.6" fill="#d6c8a8" stroke="#d6c8a8" stroke-width="0.5"/>
<polygon points="1009.2,410.8 946.9,467.6 946.6,460.1 1008.8,401.4" fill="#c0a064" stroke="#c0a064" stroke-width="0.5"/>
<polygon points="441.9,370.7 444.1,370.7 497.9,434.1 496.1,434.1" fill="#b29868" stroke="#b29868" stroke-width="0.5"/>
<polygon points="444.1,370.7 497.9,434.1 498.0,426.9 444.3,361.6" fill="#e7c47e" stroke="#e7c47e" stroke-width="0.5"/>
<polygon points="971.2,401.5 973.5,401.5 918.7,460.1 916.9,460.1" fill="#d6c8a8" stroke="#d6c8a8" stroke-width="0.5"/>
<polygon points="971.2,401.5 916.9,460.1 916.7,452.6 970.8,392.2" fill="#c0a064" stroke="#c0a064" stroke-width="0.5"/>
<polygon points="477.7,360.7 479.9,360.7 526.4,426.2 524.7,426.2" fill="#b29868" stroke="#b29868" stroke-width="0.5"/>
<polygon points="479.9,360.7 526.4,426.2 526.5,418.9 480.0,351.7" fill="#e7c47e" stroke="#e7c47e" stroke-width="0.5"/>
<polygon points="933.4,392.3 935.7,392.3 888.9,452.6 887.0,452.6" fill="#d6c8a8" stroke="#d6c8a8" stroke-width="0.5"/>
<polygon points="933.4,392.3 887.0,452.6 886.8,445.2 933.1,383.0" fill="#c0a064" stroke="#c0a064" stroke-width="0.5"/>
<polygon points="513.5,350.7 515.7,350.7 555.0,418.3 553.2,418.3" fill="#b29868" stroke="#b29868" stroke-width="0.5"/>
<polygon points="515.7,350.7 555.0,418.3 555.1,411.0 515.8,341.7" fill="#e7c47e" stroke="#e7c47e" stroke-width="0.5"/>
<polygon points="895.8,383.1 898.1,383.1 859.1,445.2 857.3,445.2" fill="#d6c8a8" stroke="#d6c8a8" stroke-width="0.5"/>
<polygon points="895.8,383.1 857.3,445.2 857.1,437.8 895.5,373.9" fill="#c0a064" stroke="#c0a064" stroke-width="0.5"/>
<polygon points="549.4,340.7 551.6,340.7 583.6,410.3 581.9,410.3" fill="#b29868" stroke="#b29868" stroke-width="0.5"/>
<polygon points="551.6,340.7 583.6,410.3 583.7,403.1 551.7,331.7" fill="#e7c47e" stroke="#e7c47e" stroke-width="0.5"/>
<polygon points="858.4,374.0 860.7,374.0 829.5,437.8 827.7,437.8" fill="#d6c8a8" stroke="#d6c8a8" stroke-width="0.5"/>
<polygon points="858.4,374.0 827.7,437.8 827.6,430.5 858.2,364.8" fill="#c0a064" stroke="#c0a064" stroke-width="0.5"/>
<polygon points="585.3,330.7 587.5,330.6 612.3,402.4 610.5,402.4" fill="#b29868" stroke="#b29868" stroke-width="0.5"/>
<polygon points="587.5,330.6 612.3,402.4 612.3,395.1 587.5,321.6" fill="#e7c47e" stroke="#e7c47e" stroke-width="0.5"/>
<polygon points="821.2,364.9 823.5,364.9 800.1,430.5 798.3,430.5" fill="#d6c8a8" stroke="#d6c8a8" stroke-width="0.5"/>
<polygon points="821.2,364.9 798.3,430.5 798.1,423.1 821.0,355.7" fill="#c0a064" stroke="#c0a064" stroke-width="0.5"/>
<polygon points="621.2,320.6 623.5,320.6 640.9,394.4 639.2,394.4" fill="#b29868" stroke="#b29868" stroke-width="0.5"/>
<polygon points="623.5,320.6 640.9,394.4 640.9,387.2 623.5,311.6" fill="#e7c47e" stroke="#e7c47e" stroke-width="0.5"/>
<polygon points="784.3,355.9 786.5,355.9 770.7,423.1 768.9,423.2" fill="#d6c8a8" stroke="#d6c8a8" stroke-width="0.5"/>
<polygon points="784.3,355.9 768.9,423.2 768.8,415.8 784.1,346.8" fill="#c0a064" stroke="#c0a064" stroke-width="0.5"/>
<polygon points="629.9,318.2 632.1,318.2 647.8,392.5 646.0,392.5" fill="#b29868" stroke="#b29868" stroke-width="0.5"/>
<polygon points="632.1,318.2 647.8,392.5 647.8,385.2 632.1,309.2" fill="#e7c47e" stroke="#e7c47e" stroke-width="0.5"/>
<polygon points="638.5,320.3 640.7,320.3 654.7,394.2 652.9,394.2" fill="#b29868" stroke="#b29868" stroke-width="0.5"/>
<polygon points="640.7,320.3 654.7,394.2 654.7,387.0 640.7,311.3" fill="#e7c47e" stroke="#e7c47e" stroke-width="0.5"/>
<polygon points="747.5,346.9 749.8,346.9 741.5,415.9 739.7,415.9" fill="#d6c8a8" stroke="#d6c8a8" stroke-width="0.5"/>
<polygon points="747.5,346.9 739.7,415.9 739.6,408.6 747.4,337.8" fill="#c0a064" stroke="#c0a064" stroke-width="0.5"/>
<polygon points="674.6,329.2 676.9,329.1 683.5,401.4 681.7,401.4" fill="#b29868" stroke="#b29868" stroke-width="0.5"/>
<polygon points="676.9,329.1 683.5,401.4 683.5,394.1 676.8,320.1" fill="#e7c47e" stroke="#e7c47e" stroke-width="0.5"/>
<polygon points="711.0,338.0 713.2,338.0 712.5,408.6 710.7,408.6" fill="#d6c8a8" stroke="#d6c8a8" stroke-width="0.5"/>
<polygon points="711.0,338.0 710.7,408.6 710.6,401.3 710.9,328.9" fill="#c0a064" stroke="#c0a064" stroke-width="0.5"/>
<polygon points="634.1,328.7 59.7,488.9 63.4,490.0 634.5,330.8" fill="#8c6c3e" stroke="#8c6c3e" stroke-width="0.5"/>
<polygon points="627.0,328.8 1237.1,478.3 1234.0,479.5 627.5,330.9" fill="#8c6c3e" stroke="#8c6c3e" stroke-width="0.5"/>
<polygon points="91.3,649.7 94.8,640.6 98.4,631.6 102.2,622.7 106.2,613.8 110.3,605.0 114.5,596.3 118.9,587.7 123.4,579.2 128.1,570.7 132.9,562.4 137.8,554.1 142.9,545.9 148.1,537.9 153.5,529.9 158.9,522.1 164.5,514.3 170.3,506.7 176.1,499.1 182.1,491.7 188.2,484.4 194.4,477.2 200.8,470.1 207.2,463.1 213.8,456.2 220.5,449.5 227.3,442.9 234.2,436.4 237.9,438.4 231.0,444.8 224.3,451.3 217.7,458.0 211.1,464.8 204.7,471.7 198.4,478.8 192.3,485.9 186.2,493.2 180.3,500.5 174.5,508.0 168.8,515.6 163.2,523.3 157.8,531.1 152.5,539.0 147.3,547.0 142.3,555.1 137.4,563.3 132.6,571.6 128.0,580.0 123.5,588.4 119.2,597.0 115.0,605.6 110.9,614.4 107.0,623.2 103.2,632.0 99.6,641.0 96.2,650.0" fill="#9c7a46" stroke="#9c7a46" stroke-width="0.5"/>
<polygon points="86.9,645.7 98.0,463.9 104.8,466.3 93.9,646.1" fill="#aa8650" stroke="#aa8650" stroke-width="0.5"/>
<polygon points="1200.5,647.9 1196.7,638.3 1192.6,628.9 1188.4,619.5 1184.1,610.2 1179.6,601.0 1174.9,591.9 1170.1,582.9 1165.1,574.0 1160.0,565.2 1154.7,556.5 1149.3,547.9 1143.7,539.4 1138.0,531.1 1132.2,522.8 1126.2,514.7 1120.1,506.7 1113.9,498.8 1107.5,491.0 1101.0,483.4 1094.4,475.9 1087.6,468.5 1080.8,461.3 1073.8,454.2 1066.7,447.2 1059.5,440.4 1052.2,433.7 1044.7,427.1 1042.0,429.2 1049.4,435.7 1056.6,442.3 1063.8,449.1 1070.8,456.0 1077.7,463.1 1084.5,470.3 1091.2,477.6 1097.8,485.0 1104.2,492.6 1110.6,500.3 1116.8,508.1 1122.8,516.1 1128.7,524.1 1134.5,532.3 1140.2,540.6 1145.7,549.0 1151.1,557.5 1156.3,566.2 1161.4,574.9 1166.3,583.7 1171.1,592.6 1175.7,601.7 1180.2,610.8 1184.5,620.0 1188.6,629.3 1192.6,638.7 1196.4,648.2" fill="#8c6c3e" stroke="#8c6c3e" stroke-width="0.5"/>
<polygon points="1192.6,452.0 1204.7,643.6 1198.8,644.1 1187.0,454.7" fill="#967442" stroke="#967442" stroke-width="0.5"/>
<polygon points="634.1,328.7 59.7,488.9 54.6,463.3 627.0,303.4" fill="#cda668" stroke="#cda668" stroke-width="0.5"/>
<polygon points="627.0,328.8 1237.1,478.3 1242.9,451.0 634.1,303.2" fill="#cda668" stroke="#cda668" stroke-width="0.5"/>
<polyline points="633.6,326.9 59.3,487.1" fill="none" stroke="#6e4f24" stroke-width="0.75" stroke-opacity="0.80"/>
<polyline points="633.1,325.1 59.0,485.2" fill="none" stroke="#6e4f24" stroke-width="0.75" stroke-opacity="0.80"/>
<polyline points="632.5,323.3 58.6,483.4" fill="none" stroke="#6e4f24" stroke-width="0.75" stroke-opacity="0.80"/>
<polyline points="632.0,321.5 58.2,481.6" fill="none" stroke="#6e4f24" stroke-width="0.75" stroke-opacity="0.80"/>
<polyline points="631.5,319.6 57.9,479.8" fill="none" stroke="#6e4f24" stroke-width="0.75" stroke-opacity="0.80"/>
<polyline points="631.0,317.8 57.5,477.9" fill="none" stroke="#6e4f24" stroke-width="0.75" stroke-opacity="0.80"/>
<polyline points="630.5,316.0 57.1,476.1" fill="none" stroke="#6e4f24" stroke-width="0.75" stroke-opacity="0.80"/>
<polyline points="630.0,314.2 56.8,474.3" fill="none" stroke="#6e4f24" stroke-width="0.75" stroke-opacity="0.80"/>
<polyline points="629.5,312.4 56.4,472.4" fill="none" stroke="#6e4f24" stroke-width="0.75" stroke-opacity="0.80"/>
<polyline points="629.0,310.6 56.0,470.6" fill="none" stroke="#6e4f24" stroke-width="0.75" stroke-opacity="0.80"/>
<polyline points="628.5,308.8 55.7,468.8" fill="none" stroke="#6e4f24" stroke-width="0.75" stroke-opacity="0.80"/>
<polyline points="628.0,307.0 55.3,467.0" fill="none" stroke="#6e4f24" stroke-width="0.75" stroke-opacity="0.80"/>
<polyline points="627.5,305.2 54.9,465.1" fill="none" stroke="#6e4f24" stroke-width="0.75" stroke-opacity="0.80"/>
<polyline points="627.5,327.0 1237.6,476.3" fill="none" stroke="#6e4f24" stroke-width="0.75" stroke-opacity="0.80"/>
<polyline points="628.0,325.2 1238.0,474.4" fill="none" stroke="#6e4f24" stroke-width="0.75" stroke-opacity="0.80"/>
<polyline points="628.5,323.3 1238.4,472.4" fill="none" stroke="#6e4f24" stroke-width="0.75" stroke-opacity="0.80"/>
<polyline points="629.0,321.5 1238.8,470.5" fill="none" stroke="#6e4f24" stroke-width="0.75" stroke-opacity="0.80"/>
<polyline points="629.5,319.7 1239.2,468.5" fill="none" stroke="#6e4f24" stroke-width="0.75" stroke-opacity="0.80"/>
<polyline points="630.0,317.9 1239.6,466.6" fill="none" stroke="#6e4f24" stroke-width="0.75" stroke-opacity="0.80"/>
<polyline points="630.5,316.0 1240.0,464.6" fill="none" stroke="#6e4f24" stroke-width="0.75" stroke-opacity="0.80"/>
<polyline points="631.0,314.2 1240.5,462.7" fill="none" stroke="#6e4f24" stroke-width="0.75" stroke-opacity="0.80"/>
<polyline points="631.5,312.4 1240.9,460.7" fill="none" stroke="#6e4f24" stroke-width="0.75" stroke-opacity="0.80"/>
<polyline points="632.0,310.5 1241.3,458.8" fill="none" stroke="#6e4f24" stroke-width="0.75" stroke-opacity="0.80"/>
<polyline points="632.6,308.7 1241.7,456.9" fill="none" stroke="#6e4f24" stroke-width="0.75" stroke-opacity="0.80"/>
<polyline points="633.1,306.9 1242.1,454.9" fill="none" stroke="#6e4f24" stroke-width="0.75" stroke-opacity="0.80"/>
<polyline points="633.6,305.1 1242.5,453.0" fill="none" stroke="#6e4f24" stroke-width="0.75" stroke-opacity="0.80"/>
<polygon points="81.7,721.1 86.3,645.7 97.7,646.4 93.3,720.4" fill="#69685f" stroke="#69685f" stroke-width="0.5"/>
<polygon points="1204.3,643.6 1209.3,723.2 1199.6,722.4 1194.8,644.4" fill="#5c5b53" stroke="#5c5b53" stroke-width="0.5"/>
<polygon points="67.0,641.4 70.7,631.9 74.5,622.5 78.5,613.1 82.7,603.8 87.0,594.6 91.5,585.4 96.1,576.4 100.9,567.5 105.8,558.6 110.8,549.8 116.0,541.2 121.4,532.6 126.9,524.2 132.5,515.8 138.3,507.6 144.2,499.5 150.2,491.5 156.3,483.6 162.6,475.8 169.0,468.1 175.6,460.6 182.2,453.1 189.0,445.8 195.9,438.7 202.9,431.6 210.0,424.7 217.3,417.9 234.2,436.4 227.3,442.9 220.5,449.5 213.8,456.2 207.2,463.1 200.8,470.1 194.4,477.2 188.2,484.4 182.1,491.7 176.1,499.1 170.3,506.7 164.5,514.3 158.9,522.1 153.5,529.9 148.1,537.9 142.9,545.9 137.8,554.1 132.9,562.4 128.1,570.7 123.4,579.2 118.9,587.7 114.5,596.3 110.3,605.0 106.2,613.8 102.2,622.7 98.4,631.6 94.8,640.6 91.3,649.7" fill="#cda668" stroke="#cda668" stroke-width="0.5"/>
<polygon points="1227.6,639.0 1223.5,629.0 1219.3,619.0 1214.8,609.2 1210.2,599.4 1205.4,589.8 1200.5,580.2 1195.4,570.7 1190.1,561.4 1184.7,552.2 1179.1,543.0 1173.4,534.0 1167.5,525.1 1161.5,516.4 1155.3,507.7 1149.0,499.2 1142.6,490.8 1136.0,482.5 1129.2,474.4 1122.4,466.4 1115.4,458.5 1108.3,450.8 1101.0,443.2 1093.7,435.7 1086.2,428.4 1078.6,421.3 1070.9,414.3 1063.1,407.4 1044.7,427.1 1052.2,433.7 1059.5,440.4 1066.7,447.2 1073.8,454.2 1080.8,461.3 1087.6,468.5 1094.4,475.9 1101.0,483.4 1107.5,491.0 1113.9,498.8 1120.1,506.7 1126.2,514.7 1132.2,522.8 1138.0,531.1 1143.7,539.4 1149.3,547.9 1154.7,556.5 1160.0,565.2 1165.1,574.0 1170.1,582.9 1174.9,591.9 1179.6,601.0 1184.1,610.2 1188.4,619.5 1192.6,628.9 1196.7,638.3 1200.5,647.9" fill="#cda668" stroke="#cda668" stroke-width="0.5"/>
<polyline points="68.7,642.0 72.4,632.5 76.2,623.1 80.2,613.8 84.4,604.5 88.7,595.3 93.1,586.2 97.7,577.2 102.5,568.3 107.4,559.5 112.4,550.7 117.6,542.1 122.9,533.6 128.4,525.2 134.0,516.8 139.7,508.6 145.6,500.5 151.6,492.5 157.7,484.7 164.0,476.9 170.4,469.3 176.9,461.7 183.5,454.3 190.3,447.1 197.2,439.9 204.2,432.9 211.3,426.0 218.5,419.2" fill="none" stroke="#6e4f24" stroke-width="0.75" stroke-opacity="0.80"/>
<polyline points="70.5,642.6 74.1,633.2 77.9,623.8 81.9,614.4 86.0,605.2 90.3,596.1 94.8,587.0 99.3,578.0 104.1,569.1 109.0,560.3 114.0,551.6 119.1,543.0 124.5,534.5 129.9,526.1 135.5,517.8 141.2,509.7 147.1,501.6 153.0,493.6 159.2,485.8 165.4,478.0 171.8,470.4 178.3,462.9 184.9,455.5 191.6,448.3 198.5,441.2 205.4,434.2 212.5,427.3 219.7,420.5" fill="none" stroke="#6e4f24" stroke-width="0.75" stroke-opacity="0.80"/>
<polyline points="72.2,643.2 75.8,633.8 79.6,624.4 83.6,615.1 87.7,605.9 92.0,596.8 96.4,587.8 101.0,578.8 105.7,570.0 110.5,561.2 115.6,552.5 120.7,544.0 126.0,535.5 131.4,527.1 137.0,518.9 142.7,510.7 148.5,502.6 154.5,494.7 160.6,486.9 166.8,479.2 173.1,471.6 179.6,464.1 186.2,456.8 192.9,449.5 199.7,442.4 206.7,435.4 213.7,428.6 220.9,421.9" fill="none" stroke="#6e4f24" stroke-width="0.75" stroke-opacity="0.80"/>
<polyline points="73.9,643.8 77.6,634.4 81.4,625.1 85.3,615.8 89.4,606.6 93.6,597.5 98.0,588.5 102.6,579.6 107.3,570.8 112.1,562.1 117.1,553.4 122.3,544.9 127.5,536.4 132.9,528.1 138.5,519.9 144.2,511.7 150.0,503.7 155.9,495.8 162.0,488.0 168.2,480.3 174.5,472.7 180.9,465.3 187.5,458.0 194.2,450.8 201.0,443.7 207.9,436.7 215.0,429.9 222.1,423.2" fill="none" stroke="#6e4f24" stroke-width="0.75" stroke-opacity="0.80"/>
<polyline points="75.7,644.4 79.3,635.0 83.1,625.7 87.0,616.5 91.1,607.4 95.3,598.3 99.7,589.3 104.2,580.4 108.9,571.6 113.7,562.9 118.7,554.3 123.8,545.8 129.1,537.4 134.4,529.1 140.0,520.9 145.6,512.8 151.4,504.8 157.3,496.9 163.4,489.1 169.6,481.4 175.9,473.9 182.3,466.5 188.8,459.2 195.5,452.0 202.3,444.9 209.2,438.0 216.2,431.2 223.3,424.5" fill="none" stroke="#6e4f24" stroke-width="0.75" stroke-opacity="0.80"/>
<polyline points="77.4,645.0 81.0,635.6 84.8,626.4 88.7,617.2 92.7,608.1 97.0,599.0 101.3,590.1 105.8,581.2 110.5,572.5 115.3,563.8 120.3,555.2 125.4,546.7 130.6,538.3 136.0,530.0 141.5,521.9 147.1,513.8 152.9,505.8 158.8,498.0 164.8,490.2 171.0,482.6 177.2,475.1 183.6,467.7 190.2,460.4 196.8,453.2 203.6,446.2 210.4,439.3 217.4,432.5 224.5,425.8" fill="none" stroke="#6e4f24" stroke-width="0.75" stroke-opacity="0.80"/>
<polyline points="79.1,645.6 82.7,636.3 86.5,627.0 90.4,617.9 94.4,608.8 98.6,599.8 103.0,590.9 107.5,582.0 112.1,573.3 116.9,564.7 121.8,556.1 126.9,547.6 132.1,539.3 137.5,531.0 143.0,522.9 148.6,514.8 154.3,506.9 160.2,499.0 166.2,491.3 172.4,483.7 178.6,476.2 185.0,468.8 191.5,461.6 198.1,454.5 204.8,447.4 211.7,440.6 218.6,433.8 225.7,427.2" fill="none" stroke="#6e4f24" stroke-width="0.75" stroke-opacity="0.80"/>
<polyline points="80.9,646.2 84.4,636.9 88.2,627.7 92.1,618.6 96.1,609.5 100.3,600.5 104.6,591.6 109.1,582.8 113.7,574.1 118.5,565.5 123.4,557.0 128.5,548.6 133.7,540.2 139.0,532.0 144.5,523.9 150.1,515.9 155.8,507.9 161.6,500.1 167.6,492.4 173.7,484.9 180.0,477.4 186.3,470.0 192.8,462.8 199.4,455.7 206.1,448.7 212.9,441.8 219.9,435.1 226.9,428.5" fill="none" stroke="#6e4f24" stroke-width="0.75" stroke-opacity="0.80"/>
<polyline points="82.6,646.8 86.2,637.5 89.9,628.3 93.7,619.2 97.8,610.2 101.9,601.3 106.3,592.4 110.7,583.7 115.3,575.0 120.1,566.4 125.0,557.9 130.0,549.5 135.2,541.2 140.5,533.0 146.0,524.9 151.5,516.9 157.2,509.0 163.1,501.2 169.0,493.5 175.1,486.0 181.4,478.5 187.7,471.2 194.1,464.0 200.7,456.9 207.4,450.0 214.2,443.1 221.1,436.4 228.1,429.8" fill="none" stroke="#6e4f24" stroke-width="0.75" stroke-opacity="0.80"/>
<polyline points="84.3,647.4 87.9,638.1 91.6,629.0 95.4,619.9 99.4,610.9 103.6,602.0 107.9,593.2 112.4,584.5 117.0,575.8 121.7,567.2 126.6,558.8 131.6,550.4 136.7,542.1 142.0,534.0 147.5,525.9 153.0,517.9 158.7,510.1 164.5,502.3 170.5,494.7 176.5,487.1 182.7,479.7 189.0,472.4 195.5,465.2 202.0,458.2 208.7,451.2 215.5,444.4 222.3,437.7 229.3,431.1" fill="none" stroke="#6e4f24" stroke-width="0.75" stroke-opacity="0.80"/>
<polyline points="86.1,648.0 89.6,638.8 93.3,629.7 97.1,620.6 101.1,611.7 105.3,602.8 109.6,594.0 114.0,585.3 118.6,576.6 123.3,568.1 128.1,559.7 133.1,551.3 138.3,543.1 143.6,534.9 149.0,526.9 154.5,519.0 160.2,511.1 166.0,503.4 171.9,495.8 177.9,488.3 184.1,480.9 190.4,473.6 196.8,466.4 203.3,459.4 210.0,452.5 216.7,445.7 223.6,439.0 230.5,432.5" fill="none" stroke="#6e4f24" stroke-width="0.75" stroke-opacity="0.80"/>
<polyline points="87.8,648.5 91.3,639.4 95.0,630.3 98.8,621.3 102.8,612.4 106.9,603.5 111.2,594.8 115.6,586.1 120.2,577.5 124.9,569.0 129.7,560.6 134.7,552.3 139.8,544.0 145.1,535.9 150.5,527.9 156.0,520.0 161.6,512.2 167.4,504.5 173.3,496.9 179.3,489.4 185.5,482.0 191.7,474.8 198.1,467.6 204.6,460.6 211.2,453.7 218.0,447.0 224.8,440.3 231.8,433.8" fill="none" stroke="#6e4f24" stroke-width="0.75" stroke-opacity="0.80"/>
<polyline points="89.5,649.1 93.1,640.0 96.7,631.0 100.5,622.0 104.5,613.1 108.6,604.3 112.8,595.5 117.2,586.9 121.8,578.3 126.5,569.8 131.3,561.5 136.3,553.2 141.4,545.0 146.6,536.9 152.0,528.9 157.5,521.0 163.1,513.2 168.8,505.6 174.7,498.0 180.7,490.5 186.8,483.2 193.1,476.0 199.4,468.9 205.9,461.9 212.5,455.0 219.2,448.2 226.0,441.6 233.0,435.1" fill="none" stroke="#6e4f24" stroke-width="0.75" stroke-opacity="0.80"/>
<polyline points="1225.7,639.6 1221.6,629.6 1217.4,619.7 1212.9,609.9 1208.3,600.2 1203.6,590.6 1198.7,581.0 1193.6,571.6 1188.3,562.3 1182.9,553.1 1177.4,544.0 1171.7,535.0 1165.8,526.2 1159.8,517.4 1153.7,508.8 1147.4,500.3 1140.9,491.9 1134.4,483.7 1127.7,475.6 1120.8,467.6 1113.9,459.8 1106.8,452.0 1099.6,444.5 1092.2,437.1 1084.8,429.8 1077.2,422.6 1069.6,415.6 1061.8,408.8" fill="none" stroke="#6e4f24" stroke-width="0.75" stroke-opacity="0.80"/>
<polyline points="1223.7,640.3 1219.7,630.3 1215.5,620.4 1211.0,610.6 1206.5,601.0 1201.7,591.4 1196.8,581.9 1191.8,572.5 1186.6,563.2 1181.2,554.0 1175.6,545.0 1170.0,536.0 1164.1,527.2 1158.1,518.5 1152.0,509.9 1145.8,501.4 1139.3,493.1 1132.8,484.8 1126.1,476.8 1119.3,468.8 1112.4,461.0 1105.3,453.3 1098.1,445.8 1090.8,438.4 1083.4,431.1 1075.9,424.0 1068.2,417.0 1060.5,410.2" fill="none" stroke="#6e4f24" stroke-width="0.75" stroke-opacity="0.80"/>
<polyline points="1221.8,640.9 1217.8,631.0 1213.6,621.1 1209.2,611.4 1204.6,601.7 1199.9,592.2 1195.0,582.7 1190.0,573.3 1184.8,564.1 1179.4,555.0 1173.9,545.9 1168.2,537.0 1162.4,528.2 1156.5,519.5 1150.4,511.0 1144.1,502.5 1137.7,494.2 1131.2,486.0 1124.6,478.0 1117.8,470.0 1110.9,462.2 1103.8,454.6 1096.7,447.1 1089.4,439.7 1082.0,432.4 1074.5,425.4 1066.9,418.4 1059.1,411.6" fill="none" stroke="#6e4f24" stroke-width="0.75" stroke-opacity="0.80"/>
<polyline points="1219.9,641.5 1215.8,631.6 1211.6,621.8 1207.3,612.1 1202.7,602.5 1198.0,593.0 1193.2,583.5 1188.2,574.2 1183.0,565.0 1177.6,555.9 1172.2,546.9 1166.5,538.0 1160.7,529.2 1154.8,520.6 1148.7,512.0 1142.5,503.6 1136.1,495.3 1129.6,487.2 1123.0,479.1 1116.3,471.2 1109.4,463.5 1102.4,455.8 1095.2,448.4 1088.0,441.0 1080.6,433.8 1073.1,426.7 1065.5,419.8 1057.8,413.0" fill="none" stroke="#6e4f24" stroke-width="0.75" stroke-opacity="0.80"/>
<polyline points="1217.9,642.2 1213.9,632.3 1209.7,622.5 1205.4,612.9 1200.9,603.3 1196.2,593.8 1191.4,584.4 1186.4,575.1 1181.2,565.9 1175.9,556.8 1170.4,547.8 1164.8,539.0 1159.0,530.2 1153.1,521.6 1147.1,513.1 1140.9,504.7 1134.5,496.5 1128.1,488.3 1121.5,480.3 1114.7,472.5 1107.9,464.7 1100.9,457.1 1093.8,449.6 1086.6,442.3 1079.2,435.1 1071.8,428.1 1064.2,421.2 1056.5,414.4" fill="none" stroke="#6e4f24" stroke-width="0.75" stroke-opacity="0.80"/>
<polyline points="1216.0,642.8 1212.0,633.0 1207.8,623.2 1203.5,613.6 1199.0,604.0 1194.4,594.6 1189.5,585.2 1184.5,576.0 1179.4,566.8 1174.1,557.7 1168.7,548.8 1163.1,540.0 1157.3,531.3 1151.4,522.7 1145.4,514.2 1139.2,505.8 1132.9,497.6 1126.5,489.5 1119.9,481.5 1113.2,473.7 1106.4,466.0 1099.4,458.4 1092.3,450.9 1085.1,443.6 1077.8,436.5 1070.4,429.4 1062.9,422.6 1055.2,415.8" fill="none" stroke="#6e4f24" stroke-width="0.75" stroke-opacity="0.80"/>
<polyline points="1214.1,643.4 1210.1,633.6 1205.9,623.9 1201.6,614.3 1197.2,604.8 1192.5,595.4 1187.7,586.0 1182.7,576.8 1177.6,567.7 1172.4,558.7 1166.9,549.8 1161.4,541.0 1155.6,532.3 1149.8,523.7 1143.8,515.3 1137.6,506.9 1131.3,498.7 1124.9,490.7 1118.4,482.7 1111.7,474.9 1104.9,467.2 1097.9,459.6 1090.9,452.2 1083.7,445.0 1076.4,437.8 1069.0,430.8 1061.5,424.0 1053.9,417.2" fill="none" stroke="#6e4f24" stroke-width="0.75" stroke-opacity="0.80"/>
<polyline points="1212.1,644.1 1208.2,634.3 1204.0,624.6 1199.7,615.1 1195.3,605.6 1190.7,596.2 1185.9,586.9 1180.9,577.7 1175.8,568.6 1170.6,559.6 1165.2,550.7 1159.6,542.0 1153.9,533.3 1148.1,524.8 1142.1,516.3 1136.0,508.1 1129.7,499.9 1123.3,491.8 1116.8,483.9 1110.2,476.1 1103.4,468.4 1096.5,460.9 1089.4,453.5 1082.3,446.3 1075.0,439.2 1067.7,432.2 1060.2,425.3 1052.6,418.7" fill="none" stroke="#6e4f24" stroke-width="0.75" stroke-opacity="0.80"/>
<polyline points="1210.2,644.7 1206.3,635.0 1202.1,625.3 1197.9,615.8 1193.4,606.3 1188.8,597.0 1184.1,587.7 1179.1,578.6 1174.1,569.5 1168.8,560.5 1163.4,551.7 1157.9,543.0 1152.2,534.3 1146.4,525.8 1140.5,517.4 1134.4,509.2 1128.1,501.0 1121.8,493.0 1115.3,485.1 1108.6,477.3 1101.9,469.7 1095.0,462.2 1088.0,454.8 1080.9,447.6 1073.6,440.5 1066.3,433.5 1058.8,426.7 1051.3,420.1" fill="none" stroke="#6e4f24" stroke-width="0.75" stroke-opacity="0.80"/>
<polyline points="1208.3,645.3 1204.3,635.6 1200.2,626.0 1196.0,616.5 1191.6,607.1 1187.0,597.8 1182.2,588.6 1177.3,579.4 1172.3,570.4 1167.1,561.5 1161.7,552.6 1156.2,543.9 1150.5,535.3 1144.7,526.9 1138.8,518.5 1132.7,510.3 1126.5,502.1 1120.2,494.2 1113.7,486.3 1107.1,478.5 1100.4,470.9 1093.5,463.5 1086.6,456.1 1079.5,448.9 1072.3,441.8 1064.9,434.9 1057.5,428.1 1050.0,421.5" fill="none" stroke="#6e4f24" stroke-width="0.75" stroke-opacity="0.80"/>
<polyline points="1206.3,646.0 1202.4,636.3 1198.3,626.7 1194.1,617.3 1189.7,607.9 1185.1,598.6 1180.4,589.4 1175.5,580.3 1170.5,571.3 1165.3,562.4 1160.0,553.6 1154.5,544.9 1148.8,536.4 1143.1,527.9 1137.2,519.6 1131.1,511.4 1124.9,503.3 1118.6,495.3 1112.2,487.5 1105.6,479.8 1098.9,472.2 1092.0,464.7 1085.1,457.4 1078.0,450.2 1070.9,443.2 1063.6,436.3 1056.2,429.5 1048.7,422.9" fill="none" stroke="#6e4f24" stroke-width="0.75" stroke-opacity="0.80"/>
<polyline points="1204.4,646.6 1200.5,637.0 1196.4,627.4 1192.2,618.0 1187.8,608.6 1183.3,599.4 1178.6,590.2 1173.7,581.2 1168.7,572.2 1163.5,563.3 1158.2,554.6 1152.8,545.9 1147.1,537.4 1141.4,529.0 1135.5,520.7 1129.5,512.5 1123.3,504.4 1117.0,496.5 1110.6,488.7 1104.0,481.0 1097.4,473.4 1090.6,466.0 1083.7,458.7 1076.6,451.5 1069.5,444.5 1062.2,437.6 1054.8,430.9 1047.4,424.3" fill="none" stroke="#6e4f24" stroke-width="0.75" stroke-opacity="0.80"/>
<polyline points="1202.5,647.2 1198.6,637.6 1194.5,628.1 1190.3,618.7 1186.0,609.4 1181.4,600.2 1176.7,591.1 1171.9,582.0 1166.9,573.1 1161.8,564.3 1156.5,555.5 1151.0,546.9 1145.4,538.4 1139.7,530.0 1133.9,521.7 1127.9,513.6 1121.7,505.6 1115.4,497.6 1109.0,489.9 1102.5,482.2 1095.9,474.7 1089.1,467.3 1082.2,460.0 1075.2,452.9 1068.1,445.9 1060.8,439.0 1053.5,432.3 1046.0,425.7" fill="none" stroke="#6e4f24" stroke-width="0.75" stroke-opacity="0.80"/>
<polygon points="59.5,721.0 81.7,721.1 86.3,645.7 64.3,645.8" fill="#808076" stroke="#808076" stroke-width="0.5"/>
<polygon points="1209.3,723.2 1234.0,723.2 1228.8,643.6 1204.3,643.6" fill="#808076" stroke="#808076" stroke-width="0.5"/>
<polygon points="72.4,645.7 86.9,645.7 98.0,463.9 83.7,464.0" fill="#cda668" stroke="#cda668" stroke-width="0.5"/>
<polyline points="84.5,645.7 95.6,463.9" fill="none" stroke="#6e4f24" stroke-width="0.75" stroke-opacity="0.80"/>
<polyline points="82.1,645.7 93.3,463.9" fill="none" stroke="#6e4f24" stroke-width="0.75" stroke-opacity="0.80"/>
<polyline points="79.6,645.7 90.9,464.0" fill="none" stroke="#6e4f24" stroke-width="0.75" stroke-opacity="0.80"/>
<polyline points="77.2,645.7 88.5,464.0" fill="none" stroke="#6e4f24" stroke-width="0.75" stroke-opacity="0.80"/>
<polyline points="74.8,645.7 86.1,464.0" fill="none" stroke="#6e4f24" stroke-width="0.75" stroke-opacity="0.80"/>
<polyline points="90.9,464.0 90.3,453.0" fill="none" stroke="#2a1c08" stroke-width="0.80" stroke-opacity="0.80"/>
<polygon points="1204.7,643.6 1220.9,643.6 1208.5,451.8 1192.6,452.0" fill="#cda668" stroke="#cda668" stroke-width="0.5"/>
<polyline points="1207.4,643.6 1195.3,451.9" fill="none" stroke="#6e4f24" stroke-width="0.75" stroke-opacity="0.80"/>
<polyline points="1210.1,643.6 1197.9,451.9" fill="none" stroke="#6e4f24" stroke-width="0.75" stroke-opacity="0.80"/>
<polyline points="1212.8,643.6 1200.6,451.9" fill="none" stroke="#6e4f24" stroke-width="0.75" stroke-opacity="0.80"/>
<polyline points="1215.5,643.6 1203.2,451.9" fill="none" stroke="#6e4f24" stroke-width="0.75" stroke-opacity="0.80"/>
<polyline points="1218.2,643.6 1205.9,451.8" fill="none" stroke="#6e4f24" stroke-width="0.75" stroke-opacity="0.80"/>
<polyline points="1200.6,451.9 1201.2,440.6" fill="none" stroke="#2a1c08" stroke-width="0.80" stroke-opacity="0.80"/>
<g>
<text x="630.6" y="664" font-family="Liberation Sans, DejaVu Sans, sans-serif" font-size="10.5" fill="#10d010" text-anchor="middle">Z</text>
<polygon points="630.6,666.4 623.3,681.8 638.2,681.8" fill="#00d800"/>
<rect x="629" y="681.5" width="3.4" height="20" fill="#00d800"/>
<rect x="629" y="701" width="1.2" height="21" fill="#00d000"/>
<rect x="631.2" y="701" width="1" height="21" fill="#9fe89f"/>
<rect x="631.5" y="721.6" width="19.5" height="0.9" fill="#ff5050"/>
<rect x="650.6" y="720.7" width="35" height="2" fill="#f00000"/>
<rect x="689" y="721" width="1" height="1" fill="#ffb0b0"/><rect x="692" y="721" width="1" height="1" fill="#ffb0b0"/>
<rect x="626" y="720" width="3.5" height="1.2" fill="#2040e0"/>
<rect x="632.6" y="719.4" width="8" height="1.4" fill="#4060f0"/>
</g>
</svg>
<style>
.abs{position:absolute;}
.t{position:absolute;white-space:nowrap;line-height:1;}
#title{left:0;top:0;width:1269px;height:31px;background:#f7630c;}
#menubar{left:1px;top:31px;width:1267px;height:21px;background:linear-gradient(#c9d3e4,#bcc8dc 50%,#aebbd2);}
#menuline{left:1px;top:52px;width:1267px;height:4px;background:#6e7fa3;}
#tabbar{left:1px;top:56px;width:1265px;height:22px;background:#3a4b7c;border-bottom:1px solid #2a3a70;box-sizing:border-box;}
#leftbar{left:1px;top:56px;width:30px;height:806px;background:#3c4a75;}
#rightstrip{left:1266px;top:56px;width:2px;height:808px;background:linear-gradient(#7484ab,#2a3760);}
#bborder{left:1px;top:862px;width:1267px;height:2px;background:#2a3760;}
#status{left:1px;top:864px;width:1267px;height:24px;background:linear-gradient(90deg,#e0e5ee 0%,#ccd3e1 30%,#b7c1d5 65%,#aeb9cf 100%);}
#frameL{left:0;top:0;width:1px;height:889px;background:#f7630c;}
#frameR{left:1268px;top:0;width:1px;height:889px;background:#f7630c;}
#frameB{left:0;top:888px;width:1269px;height:1px;background:#f7630c;}
.menu{color:#1b2540;font-size:12px;top:35px;}
.tab{color:#fff;font-size:12px;top:63.5px;}
#tabsel{left:244px;top:58px;width:58px;height:20px;background:#fff;border-radius:3px 3px 0 0;}
.panel{position:absolute;left:2px;width:27px;border-radius:3px;background:linear-gradient(90deg,#dde3ee,#c6cfe0 50%,#adb9d1);}
.popt{position:absolute;left:0;bottom:0;width:27px;height:12px;border-radius:0 0 3px 3px;background:linear-gradient(90deg,#f4f5f8,#e3e6ec 60%,#c9cedb);}
.grip{position:absolute;left:5px;top:5px;width:16px;height:2px;background:repeating-linear-gradient(90deg,#5a6b95 0 2px,transparent 2px 4px);}
.ic{position:absolute;left:0;}
</style>
<div class="abs" id="title"></div>
<svg class="abs" style="left:8px;top:6px" width="18" height="18" viewBox="0 0 18 18"><circle cx="9" cy="9" r="7.4" fill="#3a1a08"/><circle cx="9" cy="9" r="5.4" fill="#fff"/><path d="M4.6 6.6h8.8v2.2h-3.2v4.6h-2.4v-4.6h-3.2z" fill="#7a3f10"/><path d="M5.4 7.2h7.2v.8h-7.2z" fill="#c98b3a"/></svg>
<div class="t" style="letter-spacing:-0.165px;left:30px;top:10px;color:#fff;font-size:12px;">S-TIMBER 2022 - Curved-Glulam-Beam-Structure.stmbr</div>
<svg class="abs" style="left:1130px;top:0" width="139" height="31" viewBox="0 0 139 31"><g stroke="#fff" stroke-width="1" fill="none"><path d="M18.5 15.5h10"/><rect x="63.5" y="9.5" width="10" height="10"/><path d="M110 10l10 10M120 10l-10 10"/></g></svg>
<div class="abs" id="menubar"></div><div class="abs" id="menuline"></div>
<svg class="abs" style="left:4px;top:33px" width="18" height="18" viewBox="0 0 18 18"><circle cx="9" cy="9" r="6.2" fill="#2b3fa8"/><path d="M5 13V8l1.5-2 1 7M8.5 13V5.5l1.2-1.5.8 9M11.5 13V7.5l1.2 1 .5 4.5" fill="#fff"/><path d="M2.2 7.5A7 7 0 0 1 15 5.2" stroke="#e01818" stroke-width="1.6" fill="none"/><path d="M15.8 10.5A7 7 0 0 1 3 12.8" stroke="#e01818" stroke-width="1.6" fill="none"/></svg>
<div class="t menu" style="letter-spacing:-0.581px;left:33.3px">File</div>
<div class="t menu" style="letter-spacing:-0.163px;left:69.1px">Edit</div>
<div class="t menu" style="letter-spacing:-0.078px;left:107.4px">Define</div>
<div class="t menu" style="letter-spacing:-0.151px;left:159.9px">Settings</div>
<div class="t menu" style="letter-spacing:-0.247px;left:220.4px">Selection</div>
<div class="t menu" style="letter-spacing:-1.158px;left:286.9px">Run</div>
<div class="t menu" style="letter-spacing:-0.366px;left:325.3px">View</div>
<div class="t menu" style="letter-spacing:0.142px;left:368.6px">Window</div>
<div class="t menu" style="letter-spacing:-0.163px;left:430.2px">Help</div>
<div class="abs" id="tabbar"></div>
<div class="abs" id="tabsel"></div>
<div class="t tab" style="letter-spacing:-0.162px;left:45.4px">Finite Element</div>
<div class="t tab" style="letter-spacing:-0.316px;left:144.2px">Physical Element</div>
<div class="t tab" style="letter-spacing:0.022px;left:255.7px;color:#111">Object</div>
<div class="t tab" style="letter-spacing:-0.203px;left:314.7px">Framing</div>
<div class="abs" id="leftbar"></div>
<div class="abs" id="rightstrip"></div>
<div class="abs" id="bborder"></div>
<div class="abs" id="status"></div>
<div class="t" style="letter-spacing:-0.097px;left:33.8px;top:872px;font-size:12px;font-weight:bold;color:#0a0f1f">Selection Tool, Box Edit Mode</div>
<div class="t" style="letter-spacing:-0.000px;left:213.3px;top:872px;font-size:12px;color:#0a0f1f">Left Click to Select, Left drag to group select, 'Ctrl' to Toggle, 'Ctrl+Shift' to Add, 'Shift' to Remove.&nbsp; Object/Framing View: 'Alt' to select components of systems.</div>
<div class="abs" id="frameL"></div><div class="abs" id="frameR"></div><div class="abs" id="frameB"></div>
<div class="panel" style="top:56px;height:71px"><div class="grip"></div><div style="position:absolute;left:1px;top:10px;width:24px;height:24px;box-sizing:border-box;background:#ffe08a;border:1px solid #e8a040;"></div><svg class="ic" style="left:0.5px;top:10px" width="24" height="24" viewBox="0 0 24 24"><path d="M8.5 4.5v14l3.4-3 2.3 5 2.2-1-2.3-4.9h4.4z" fill="#fff" stroke="#000" stroke-width="1.2" stroke-linejoin="round"/></svg><svg class="ic" style="left:0.5px;top:33.5px" width="24" height="24" viewBox="0 0 24 24"><g stroke="#444" stroke-width="1.3" fill="none"><path d="M5 11l15-5M4 17l15-5M11 4l-4 16M17 3l-4 16"/></g></svg><div class="popt"><svg width="27" height="12" viewBox="0 0 27 12"><path d="M15.5 3v6" stroke="#9aa0ad" stroke-width="1"/><path d="M18 3l4 3-4 3z" fill="#9aa0ad"/></svg></div></div>
<div class="panel" style="top:128px;height:237px"><div class="grip"></div><svg class="ic" style="left:0.5px;top:8.5px" width="24" height="24" viewBox="0 0 24 24"><circle cx="12" cy="12" r="3" fill="#f5a010" stroke="#d08000" stroke-width="0.6"/></svg><svg class="ic" style="left:0.5px;top:33px" width="24" height="24" viewBox="0 0 24 24"><path d="M8.5 6.5l3-2 4 1v11l-3 3-4-2z" fill="#c88a2e" stroke="#5a340c" stroke-width="0.8"/><path d="M8.5 6.5l4 1.5 3-2.5M12.500 8v11.500" stroke="#5a340c" stroke-width="0.8" fill="none"/><path d="M12.500 8l3-2.500v11l-3 3z" fill="#8a5418"/></svg><svg class="ic" style="left:0.5px;top:57px" width="24" height="24" viewBox="0 0 24 24"><path d="M5 5.500l1.800-1.500 13 12.500-1.800 2z" fill="#c88a2e" stroke="#5a340c" stroke-width="0.9"/><path d="M5 5.500l13 13" stroke="#5a340c" stroke-width="0.8"/></svg><svg class="ic" style="left:0.5px;top:80.5px" width="24" height="24" viewBox="0 0 24 24"><path d="M6.500 6.500c9-2.500 15 1 13.500 6.500-1 3.500-6 5.500-13.500 7" fill="none" stroke="#5a340c" stroke-width="3.6"/><path d="M6.500 6.500c9-2.500 15 1 13.500 6.500-1 3.500-6 5.500-13.500 7" fill="none" stroke="#c88a2e" stroke-width="1.800"/></svg><svg class="ic" style="left:0.5px;top:104.5px" width="24" height="24" viewBox="0 0 24 24"><path d="M4.500 11l8-6.500 8.500 5.500-8.500 8.500z" fill="#dba544" stroke="#8a5418" stroke-width="0.8"/><path d="M4.500 11v1.600l8 7.500 8.500-8.500v-1.600l-8.500 8.500z" fill="#8a5418"/></svg><svg class="ic" style="left:0.5px;top:129px" width="24" height="24" viewBox="0 0 24 24"><path d="M5 7l14-2.500 2-1v14.500l-2 2.500-14 .5z" fill="#a0622a" stroke="#5a340c" stroke-width="0.9"/><path d="M5 7l14-2.500v16" fill="none" stroke="#5a340c" stroke-width="0.8"/></svg><svg class="ic" style="left:0.5px;top:152.5px" width="24" height="24" viewBox="0 0 24 24"><path d="M4.500 11l8-6.500 8.500 5.500-8.500 8.500z" fill="#fff" stroke="#8a5418" stroke-width="1.200"/><path d="M7 13l8-7M9.800 15.600l8-7.200M12.500 18l7.500-7.500" stroke="#c08838" stroke-width="1.800"/></svg><svg class="ic" style="left:0.5px;top:176.5px" width="24" height="24" viewBox="0 0 24 24"><path d="M5 7.500l15.500-3.500v14l-15.500 3z" fill="#fff" stroke="#8a5418" stroke-width="1.500"/><path d="M9.500 6.500v13.500M14 5.500v13.500M17.500 5v13.500" stroke="#c88a2e" stroke-width="1.800"/></svg><svg class="ic" style="left:0.5px;top:201px" width="24" height="24" viewBox="0 0 24 24"><g fill="none" stroke="#111" stroke-width="1.100"><path d="M7 5l2 2.500 2-2.500M9 7.500c-2.500 2-2.500 5.500 0 7 2 1 3.500 2.500 5.500 3.500"/><ellipse cx="15.500" cy="16.500" rx="3.200" ry="2"/><path d="M18.500 16l3-2M18.500 17.500l3 1.500"/></g></svg><div class="popt"><svg width="27" height="12" viewBox="0 0 27 12"><path d="M15.5 3v6" stroke="#9aa0ad" stroke-width="1"/><path d="M18 3l4 3-4 3z" fill="#9aa0ad"/></svg></div></div>
<div class="panel" style="top:366px;height:141px"><div class="grip"></div><svg class="ic" style="left:0.5px;top:9px" width="24" height="24" viewBox="0 0 24 24"><path d="M8.25 3h3.5v5h3.75l-5.5 5l-5.5 -5h3.75z" fill="#14e0f0" stroke="#0a8fa0" stroke-width="0.7"/><path d="M11 8v11.500l2.700-2.400 1.900 4.200 1.900-.9-1.900-4.100h3.700z" fill="#fff" stroke="#555" stroke-width="1"/></svg><svg class="ic" style="left:0.5px;top:33px" width="24" height="24" viewBox="0 0 24 24"><path d="M10.9 3h2.2v5.5h3.1l-4.2 4.5l-4.2 -4.5h3.1z" fill="#14e0f0" stroke="#0a8fa0" stroke-width="0.7"/><circle cx="12" cy="17" r="3" fill="#f5a010" stroke="#d08000" stroke-width="0.6"/></svg><svg class="ic" style="left:0.5px;top:58px" width="24" height="24" viewBox="0 0 24 24"><path d="M3.500 17.500l15-6 2 2.500-15 6z" fill="#d9a860" stroke="#5a340c" stroke-width="1"/><path d="M10.9 2h2.2v8h3.1l-4.2 4.5l-4.2 -4.5h3.1z" fill="#14e0f0" stroke="#0a8fa0" stroke-width="0.7"/></svg><svg class="ic" style="left:0.5px;top:82px" width="24" height="24" viewBox="0 0 24 24"><path d="M3.500 18.500l15-5 2 2.500-15 5z" fill="#d9a860" stroke="#5a340c" stroke-width="1"/><path d="M6 7l12-3v8M6 7v9" fill="none" stroke="#14c8d8" stroke-width="1.400"/><path d="M3.500 13h5l-2.500 3.500zM15.500 10h5l-2.500 3.500z" fill="#14e0f0" stroke="#0a8fa0" stroke-width="0.5"/></svg><svg class="ic" style="left:0.5px;top:106px" width="24" height="24" viewBox="0 0 24 24"><path d="M6.500 6h11l2.500 14h-16z" fill="#c89a52" stroke="#5a340c" stroke-width="1"/><path d="M10.5 3h3v6h3.5l-5 5l-5 -5h3.5z" fill="#14e0f0" stroke="#0a8fa0" stroke-width="0.7"/></svg><div class="popt"><svg width="27" height="12" viewBox="0 0 27 12"><path d="M15.5 3v6" stroke="#9aa0ad" stroke-width="1"/><path d="M18 3l4 3-4 3z" fill="#9aa0ad"/></svg></div></div>
<div class="panel" style="top:508.5px;height:335.5px"><div class="grip"></div><svg class="ic" style="left:0.5px;top:10.5px" width="24" height="24" viewBox="0 0 24 24"><polygon points="4.6,9 10.6,3.5 20.1,3.5 20.1,13 14.1,18.5 4.6,18.5" fill="#fff"/><path d="M10.6 13L4.6 18.5M10.6 13L10.6 3.5M10.6 13L20.1 13" stroke="#9a9a9a" stroke-width="0.8" fill="none"/><polygon points="4.6,9 14.1,9 20.1,3.5 10.6,3.5" fill="#b00000"/><polygon points="4.6,9 14.1,9 14.1,18.5 4.6,18.5" fill="none" stroke="#111" stroke-width="1.3"/><polyline points="4.6,9 10.6,3.5 20.1,3.5 20.1,13 14.1,18.5" fill="none" stroke="#111" stroke-width="1.3"/><path d="M14.1 9L20.1 3.5" stroke="#111" stroke-width="1.3"/></svg><svg class="ic" style="left:0.5px;top:34.5px" width="24" height="24" viewBox="0 0 24 24"><polygon points="4.6,9 10.6,3.5 20.1,3.5 20.1,13 14.1,18.5 4.6,18.5" fill="#fff"/><polygon points="4.6,18.5 14.1,18.5 20.1,13 10.6,13" fill="#b00000"/><path d="M10.6 13L4.6 18.5M10.6 13L10.6 3.5M10.6 13L20.1 13" stroke="#9a9a9a" stroke-width="0.8" fill="none"/><polygon points="4.6,9 14.1,9 14.1,18.5 4.6,18.5" fill="none" stroke="#111" stroke-width="1.3"/><polyline points="4.6,9 10.6,3.5 20.1,3.5 20.1,13 14.1,18.5" fill="none" stroke="#111" stroke-width="1.3"/><path d="M14.1 9L20.1 3.5" stroke="#111" stroke-width="1.3"/></svg><svg class="ic" style="left:0.5px;top:58.5px" width="24" height="24" viewBox="0 0 24 24"><polygon points="4.6,9 10.6,3.5 20.1,3.5 20.1,13 14.1,18.5 4.6,18.5" fill="#fff"/><polygon points="4.6,9 4.6,18.5 10.6,13 10.6,3.5" fill="#b00000"/><path d="M10.6 13L4.6 18.5M10.6 13L10.6 3.5M10.6 13L20.1 13" stroke="#9a9a9a" stroke-width="0.8" fill="none"/><polygon points="4.6,9 14.1,9 14.1,18.5 4.6,18.5" fill="none" stroke="#111" stroke-width="1.3"/><polyline points="4.6,9 10.6,3.5 20.1,3.5 20.1,13 14.1,18.5" fill="none" stroke="#111" stroke-width="1.3"/><path d="M14.1 9L20.1 3.5" stroke="#111" stroke-width="1.3"/></svg><svg class="ic" style="left:0.5px;top:82.5px" width="24" height="24" viewBox="0 0 24 24"><polygon points="4.6,9 10.6,3.5 20.1,3.5 20.1,13 14.1,18.5 4.6,18.5" fill="#fff"/><path d="M10.6 13L4.6 18.5M10.6 13L10.6 3.5M10.6 13L20.1 13" stroke="#9a9a9a" stroke-width="0.8" fill="none"/><polygon points="14.1,9 14.1,18.5 20.1,13 20.1,3.5" fill="#b00000"/><polygon points="4.6,9 14.1,9 14.1,18.5 4.6,18.5" fill="none" stroke="#111" stroke-width="1.3"/><polyline points="4.6,9 10.6,3.5 20.1,3.5 20.1,13 14.1,18.5" fill="none" stroke="#111" stroke-width="1.3"/><path d="M14.1 9L20.1 3.5" stroke="#111" stroke-width="1.3"/></svg><svg class="ic" style="left:0.5px;top:106.5px" width="24" height="24" viewBox="0 0 24 24"><polygon points="4.6,9 10.6,3.5 20.1,3.5 20.1,13 14.1,18.5 4.6,18.5" fill="#fff"/><path d="M10.6 13L4.6 18.5M10.6 13L10.6 3.5M10.6 13L20.1 13" stroke="#9a9a9a" stroke-width="0.8" fill="none"/><polygon points="4.6,9 14.1,9 14.1,18.5 4.6,18.5" fill="#b00000"/><polygon points="4.6,9 14.1,9 14.1,18.5 4.6,18.5" fill="none" stroke="#111" stroke-width="1.3"/><polyline points="4.6,9 10.6,3.5 20.1,3.5 20.1,13 14.1,18.5" fill="none" stroke="#111" stroke-width="1.3"/><path d="M14.1 9L20.1 3.5" stroke="#111" stroke-width="1.3"/></svg><svg class="ic" style="left:0.5px;top:130.5px" width="24" height="24" viewBox="0 0 24 24"><polygon points="4.6,9 10.6,3.5 20.1,3.5 20.1,13 14.1,18.5 4.6,18.5" fill="#fff"/><polygon points="10.6,3.5 20.1,3.5 20.1,13 10.6,13" fill="#b00000"/><path d="M10.6 13L4.6 18.5M10.6 13L10.6 3.5M10.6 13L20.1 13" stroke="#9a9a9a" stroke-width="0.8" fill="none"/><polygon points="4.6,9 14.1,9 14.1,18.5 4.6,18.5" fill="none" stroke="#111" stroke-width="1.3"/><polyline points="4.6,9 10.6,3.5 20.1,3.5 20.1,13 14.1,18.5" fill="none" stroke="#111" stroke-width="1.3"/><path d="M14.1 9L20.1 3.5" stroke="#111" stroke-width="1.3"/></svg><svg class="ic" style="left:0.5px;top:154.5px" width="24" height="24" viewBox="0 0 24 24"><polygon points="4.6,9 10.6,3.5 20.1,3.5 20.1,13 14.1,18.5 4.6,18.5" fill="#fff"/><path d="M10.6 13L4.6 18.5M10.6 13L10.6 3.5M10.6 13L20.1 13" stroke="#9a9a9a" stroke-width="0.8" fill="none"/><polygon points="4.6,9 14.1,9 14.1,18.5 4.6,18.5" fill="none" stroke="#111" stroke-width="1.3"/><polyline points="4.6,9 10.6,3.5 20.1,3.5 20.1,13 14.1,18.5" fill="none" stroke="#111" stroke-width="1.3"/><path d="M14.1 9L20.1 3.5" stroke="#111" stroke-width="1.3"/><circle cx="4.6" cy="9" r="2.6" fill="#c00000" stroke="#500" stroke-width="0.5"/></svg><svg class="ic" style="left:0.5px;top:178.5px" width="24" height="24" viewBox="0 0 24 24"><polygon points="4.6,9 10.6,3.5 20.1,3.5 20.1,13 14.1,18.5 4.6,18.5" fill="#fff"/><path d="M10.6 13L4.6 18.5M10.6 13L10.6 3.5M10.6 13L20.1 13" stroke="#9a9a9a" stroke-width="0.8" fill="none"/><polygon points="4.6,9 14.1,9 14.1,18.5 4.6,18.5" fill="none" stroke="#111" stroke-width="1.3"/><polyline points="4.6,9 10.6,3.5 20.1,3.5 20.1,13 14.1,18.5" fill="none" stroke="#111" stroke-width="1.3"/><path d="M14.1 9L20.1 3.5" stroke="#111" stroke-width="1.3"/><circle cx="10.6" cy="13" r="2.6" fill="#c00000" stroke="#500" stroke-width="0.5"/></svg><svg class="ic" style="left:0.5px;top:202.5px" width="24" height="24" viewBox="0 0 24 24"><polygon points="4.6,9 10.6,3.5 20.1,3.5 20.1,13 14.1,18.5 4.6,18.5" fill="#fff"/><path d="M10.6 13L4.6 18.5M10.6 13L10.6 3.5M10.6 13L20.1 13" stroke="#9a9a9a" stroke-width="0.8" fill="none"/><polygon points="4.6,9 14.1,9 14.1,18.5 4.6,18.5" fill="none" stroke="#111" stroke-width="1.3"/><polyline points="4.6,9 10.6,3.5 20.1,3.5 20.1,13 14.1,18.5" fill="none" stroke="#111" stroke-width="1.3"/><path d="M14.1 9L20.1 3.5" stroke="#111" stroke-width="1.3"/><circle cx="20.1" cy="3.5" r="2.6" fill="#c00000" stroke="#500" stroke-width="0.5"/></svg><svg class="ic" style="left:0.5px;top:226.5px" width="24" height="24" viewBox="0 0 24 24"><polygon points="4.6,9 10.6,3.5 20.1,3.5 20.1,13 14.1,18.5 4.6,18.5" fill="#fff"/><path d="M10.6 13L4.6 18.5M10.6 13L10.6 3.5M10.6 13L20.1 13" stroke="#9a9a9a" stroke-width="0.8" fill="none"/><polygon points="4.6,9 14.1,9 14.1,18.5 4.6,18.5" fill="none" stroke="#111" stroke-width="1.3"/><polyline points="4.6,9 10.6,3.5 20.1,3.5 20.1,13 14.1,18.5" fill="none" stroke="#111" stroke-width="1.3"/><path d="M14.1 9L20.1 3.5" stroke="#111" stroke-width="1.3"/><circle cx="10.6" cy="3.5" r="2.6" fill="#c00000" stroke="#500" stroke-width="0.5"/></svg><svg class="ic" style="left:0.5px;top:250.5px" width="24" height="24" viewBox="0 0 24 24"><circle cx="11" cy="10.500" r="7" fill="#fff" stroke="#111" stroke-width="1.500"/><path d="M16 16l5 5.500" stroke="#111" stroke-width="2.600" stroke-linecap="round"/><path d="M11 5v11M5.500 10.500h11" stroke="#a00000" stroke-width="1.100"/><path d="M11 4l1.800 2.500h-3.600zM11 17l1.800-2.500h-3.600zM4.500 10.500l2.500-1.800v3.600zM17.500 10.500l-2.500-1.800v3.600z" fill="#a00000"/></svg><svg class="ic" style="left:0.5px;top:274.5px" width="24" height="24" viewBox="0 0 24 24"><rect x="7" y="7" width="10.500" height="10.500" fill="#c00000" stroke="#600" stroke-width="1"/></svg><svg class="ic" style="left:0.5px;top:298.5px" width="24" height="24" viewBox="0 0 24 24"><g stroke="#f0d000" stroke-width="0.9"><path d="M12 2v2M5 5l1.500 1.500M19 5l-1.500 1.500M3 11h2M19 11h2"/></g><path d="M12 5c-3.200 0-5 2.300-5 4.800 0 2 1.500 3 2.300 4.700h5.400c.8-1.700 2.300-2.700 2.300-4.700 0-2.500-1.800-4.800-5-4.800z" fill="#ffe000" stroke="#b09000" stroke-width="0.7"/><path d="M9.800 15.500h4.400v3.200l-1 1.300h-2.400l-1-1.300z" fill="#707070" stroke="#333" stroke-width="0.6"/></svg><div class="popt"><svg width="27" height="12" viewBox="0 0 27 12"><path d="M15.5 3v6" stroke="#9aa0ad" stroke-width="1"/><path d="M18 3l4 3-4 3z" fill="#9aa0ad"/></svg></div></div>

</body></html>
